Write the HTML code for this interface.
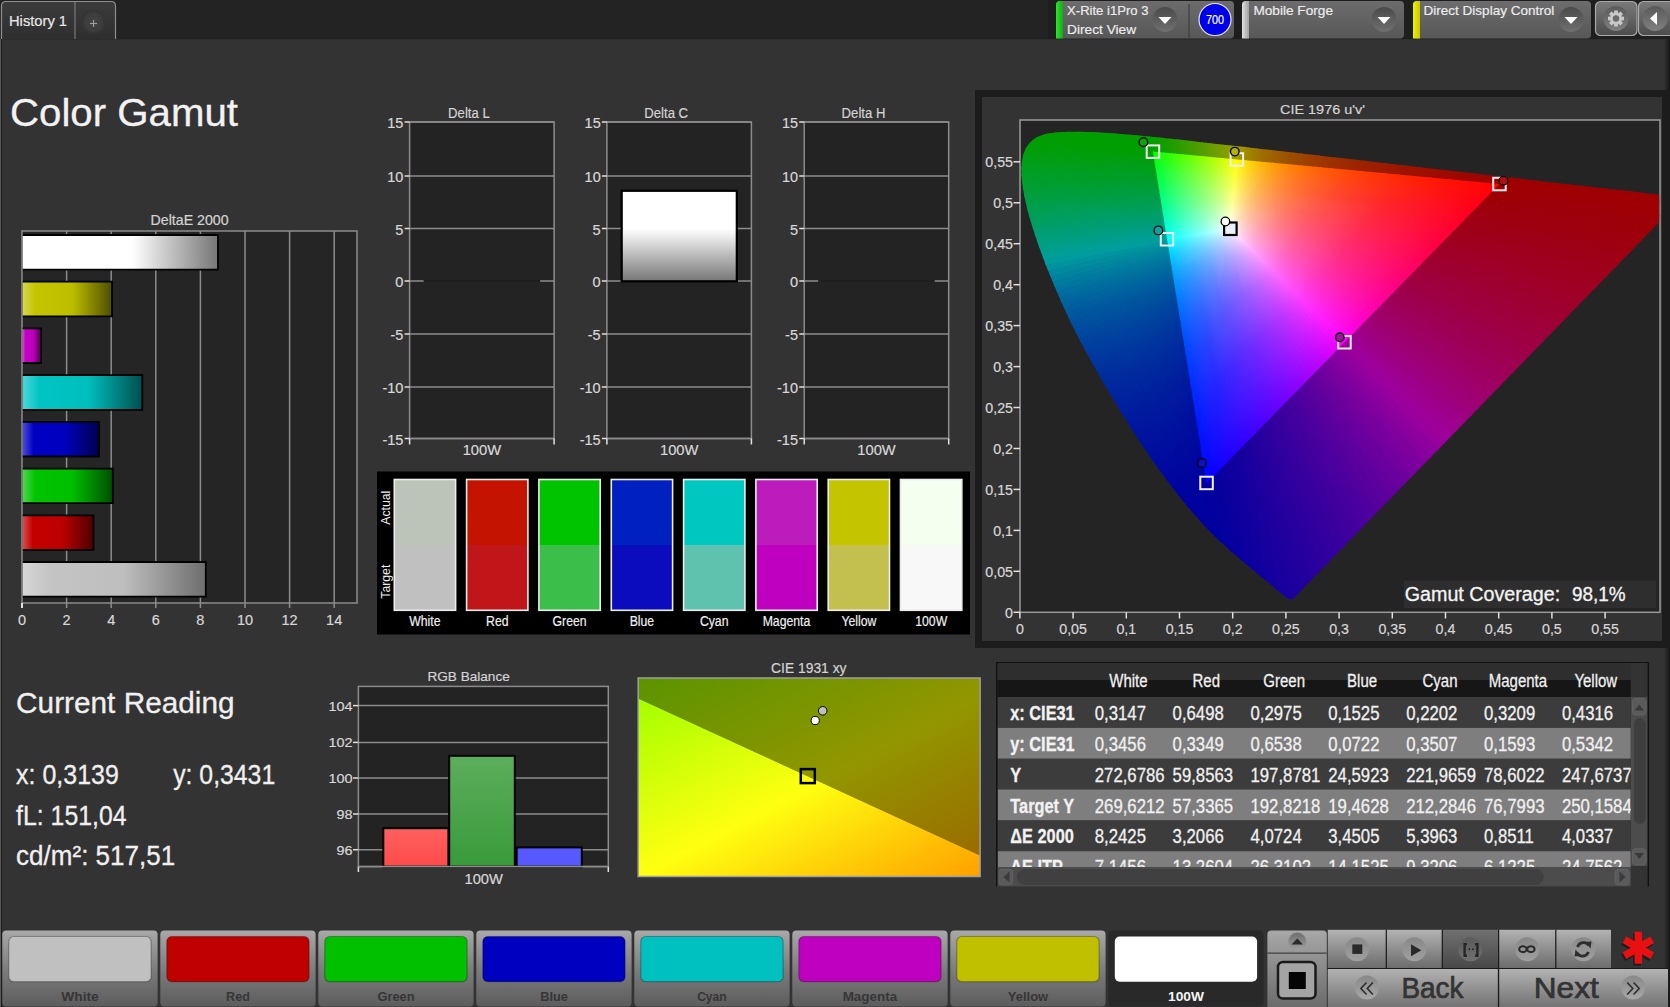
<!DOCTYPE html>
<html><head><meta charset="utf-8"><style>
html,body{margin:0;padding:0;background:#333;overflow:hidden}
svg{display:block;font-family:"Liberation Sans",sans-serif}
</style></head><body>
<svg width="1670" height="1007" viewBox="0 0 1670 1007">
<defs><linearGradient id="g1" x1="0" y1="0" x2="1" y2="0"><stop offset="0" stop-color="#333"/><stop offset="1" stop-color="#151515"/></linearGradient>
<linearGradient id="g2" x1="0" y1="0" x2="0" y2="1"><stop offset="0" stop-color="#3c3c3c"/><stop offset="1" stop-color="#2e2e2e"/></linearGradient>
<radialGradient id="g3" cx="0.5" cy="0.5" r="0.5"><stop offset="0" stop-color="#444444"/><stop offset="0.75" stop-color="#3c3c3c"/><stop offset="1" stop-color="#323232"/></radialGradient>
<linearGradient id="g4" x1="0" y1="0" x2="1" y2="0"><stop offset="0" stop-color="#30e030"/><stop offset="1" stop-color="#10b010"/></linearGradient>
<linearGradient id="g5" x1="0" y1="0" x2="0" y2="1"><stop offset="0" stop-color="#6c6c6c"/><stop offset="1" stop-color="#575757"/></linearGradient>
<linearGradient id="g6" x1="0" y1="0" x2="0" y2="1"><stop offset="0" stop-color="#4a4a4a"/><stop offset="1" stop-color="#707070"/></linearGradient>
<linearGradient id="g7" x1="0" y1="0" x2="1" y2="0"><stop offset="0" stop-color="#e0e0e0"/><stop offset="1" stop-color="#a0a0a0"/></linearGradient>
<linearGradient id="g8" x1="0" y1="0" x2="0" y2="1"><stop offset="0" stop-color="#6c6c6c"/><stop offset="1" stop-color="#575757"/></linearGradient>
<linearGradient id="g9" x1="0" y1="0" x2="0" y2="1"><stop offset="0" stop-color="#4a4a4a"/><stop offset="1" stop-color="#707070"/></linearGradient>
<linearGradient id="g10" x1="0" y1="0" x2="1" y2="0"><stop offset="0" stop-color="#f0f000"/><stop offset="1" stop-color="#c8c800"/></linearGradient>
<linearGradient id="g11" x1="0" y1="0" x2="0" y2="1"><stop offset="0" stop-color="#6c6c6c"/><stop offset="1" stop-color="#575757"/></linearGradient>
<linearGradient id="g12" x1="0" y1="0" x2="0" y2="1"><stop offset="0" stop-color="#4a4a4a"/><stop offset="1" stop-color="#707070"/></linearGradient>
<linearGradient id="g13" x1="0" y1="0" x2="0" y2="1"><stop offset="0" stop-color="#7a7a7a"/><stop offset="1" stop-color="#4c4c4c"/></linearGradient>
<linearGradient id="g14" x1="0" y1="0" x2="0" y2="1"><stop offset="0" stop-color="#5a5a5a"/><stop offset="1" stop-color="#808080"/></linearGradient>
<linearGradient id="g15" x1="0" y1="0" x2="0" y2="1"><stop offset="0" stop-color="#7a7a7a"/><stop offset="1" stop-color="#4c4c4c"/></linearGradient>
<linearGradient id="g16" x1="0" y1="0" x2="0" y2="1"><stop offset="0" stop-color="#5a5a5a"/><stop offset="1" stop-color="#808080"/></linearGradient>
<linearGradient id="g17" x1="0" y1="0" x2="1" y2="0"><stop offset="0" stop-color="#ffffff"/><stop offset="0.56" stop-color="#ffffff"/><stop offset="1" stop-color="#767676"/></linearGradient>
<linearGradient id="g18" x1="0" y1="0" x2="1" y2="0"><stop offset="0" stop-color="#d6d64c"/><stop offset="0.14" stop-color="#c4c400"/><stop offset="0.55" stop-color="#bebe00"/><stop offset="1" stop-color="#4e4e00"/></linearGradient>
<linearGradient id="g19" x1="0" y1="0" x2="1" y2="0"><stop offset="0" stop-color="#d64cd6"/><stop offset="0.14" stop-color="#c400c4"/><stop offset="0.55" stop-color="#be00be"/><stop offset="1" stop-color="#4e004e"/></linearGradient>
<linearGradient id="g20" x1="0" y1="0" x2="1" y2="0"><stop offset="0" stop-color="#4cd6d6"/><stop offset="0.14" stop-color="#00c4c4"/><stop offset="0.55" stop-color="#00bebe"/><stop offset="1" stop-color="#004e4e"/></linearGradient>
<linearGradient id="g21" x1="0" y1="0" x2="1" y2="0"><stop offset="0" stop-color="#4c4cd6"/><stop offset="0.14" stop-color="#0000c4"/><stop offset="0.55" stop-color="#0000be"/><stop offset="1" stop-color="#00004e"/></linearGradient>
<linearGradient id="g22" x1="0" y1="0" x2="1" y2="0"><stop offset="0" stop-color="#4cd64c"/><stop offset="0.14" stop-color="#00c400"/><stop offset="0.55" stop-color="#00be00"/><stop offset="1" stop-color="#004e00"/></linearGradient>
<linearGradient id="g23" x1="0" y1="0" x2="1" y2="0"><stop offset="0" stop-color="#d64c4c"/><stop offset="0.14" stop-color="#c40000"/><stop offset="0.55" stop-color="#be0000"/><stop offset="1" stop-color="#4e0000"/></linearGradient>
<linearGradient id="g24" x1="0" y1="0" x2="1" y2="0"><stop offset="0" stop-color="#d6d6d6"/><stop offset="0.15" stop-color="#c4c4c4"/><stop offset="0.55" stop-color="#bebebe"/><stop offset="1" stop-color="#6e6e6e"/></linearGradient>
<linearGradient id="g25" x1="0" y1="0" x2="0" y2="1"><stop offset="0" stop-color="#ffffff"/><stop offset="0.42" stop-color="#ffffff"/><stop offset="1" stop-color="#767676"/></linearGradient>
<clipPath id="cLoc"><path d="M1293.1,598.7 L1293.0,598.8 L1292.8,598.9 L1292.6,599.0 L1292.4,599.1 L1292.2,599.2 L1292.0,599.2 L1291.8,599.3 L1291.6,599.3 L1291.4,599.3 L1291.2,599.3 L1291.0,599.3 L1290.7,599.3 L1290.4,599.2 L1290.1,599.2 L1289.8,599.2 L1289.4,599.1 L1288.9,598.8 L1288.2,598.5 L1287.5,598.0 L1286.6,597.4 L1285.6,596.7 L1284.5,595.9 L1283.2,594.9 L1281.8,593.8 L1280.2,592.5 L1278.4,591.0 L1276.5,589.4 L1274.4,587.7 L1272.1,585.7 L1269.6,583.6 L1266.9,581.4 L1264.0,579.0 L1260.8,576.5 L1257.4,573.7 L1253.8,570.7 L1249.8,567.3 L1245.2,563.4 L1240.1,559.0 L1234.7,554.4 L1229.3,549.7 L1224.2,545.1 L1219.6,541.0 L1215.8,537.4 L1212.5,534.2 L1209.4,531.1 L1206.4,528.0 L1203.3,524.6 L1199.7,520.6 L1195.7,516.1 L1191.5,511.3 L1187.1,506.1 L1182.6,500.6 L1178.0,494.8 L1173.2,488.6 L1168.3,482.2 L1163.2,475.3 L1158.0,468.2 L1152.7,460.7 L1147.4,453.0 L1141.9,444.9 L1136.4,436.5 L1130.8,427.7 L1125.1,418.6 L1119.3,409.4 L1113.6,399.9 L1108.0,390.5 L1102.4,380.9 L1096.8,371.1 L1091.2,361.2 L1085.7,351.2 L1080.4,341.4 L1075.4,331.6 L1070.6,322.0 L1066.0,312.3 L1061.7,302.7 L1057.5,293.2 L1053.6,284.0 L1049.9,275.1 L1046.4,266.5 L1043.2,258.1 L1040.2,250.0 L1037.4,242.1 L1034.9,234.6 L1032.6,227.5 L1030.5,220.8 L1028.7,214.4 L1027.1,208.4 L1025.8,202.6 L1024.6,197.2 L1023.6,192.1 L1022.8,187.3 L1022.2,182.8 L1021.7,178.6 L1021.5,174.7 L1021.4,171.0 L1021.4,167.5 L1021.6,164.1 L1022.0,161.0 L1022.5,158.1 L1023.1,155.4 L1023.9,152.9 L1024.8,150.5 L1025.9,148.3 L1027.1,146.3 L1028.4,144.4 L1029.8,142.7 L1031.4,141.2 L1033.0,139.8 L1034.7,138.5 L1036.5,137.4 L1038.4,136.5 L1040.4,135.7 L1042.4,134.9 L1044.5,134.3 L1046.6,133.7 L1048.9,133.3 L1051.1,133.0 L1053.5,132.7 L1055.8,132.5 L1058.2,132.2 L1060.6,132.1 L1063.1,131.9 L1065.6,131.9 L1068.1,131.8 L1070.6,131.8 L1073.2,131.7 L1075.7,131.7 L1078.2,131.7 L1080.7,131.8 L1083.2,131.8 L1085.8,131.9 L1088.4,131.9 L1090.9,132.0 L1093.5,132.1 L1096.2,132.2 L1098.8,132.4 L1101.5,132.5 L1104.2,132.7 L1107.0,132.9 L1109.7,133.0 L1112.6,133.2 L1115.4,133.5 L1118.3,133.7 L1121.3,133.9 L1124.3,134.2 L1127.3,134.4 L1130.3,134.7 L1133.4,135.0 L1136.6,135.3 L1139.8,135.6 L1143.1,135.9 L1146.4,136.2 L1149.8,136.6 L1153.2,136.9 L1156.7,137.3 L1160.2,137.6 L1163.8,138.0 L1167.5,138.4 L1171.2,138.8 L1175.0,139.2 L1178.9,139.6 L1182.8,140.1 L1186.8,140.5 L1190.9,141.0 L1195.0,141.4 L1199.2,141.9 L1203.4,142.4 L1207.8,142.9 L1212.2,143.4 L1216.7,143.9 L1221.3,144.4 L1225.9,144.9 L1230.7,145.4 L1235.5,146.0 L1240.3,146.5 L1245.3,147.1 L1250.3,147.7 L1255.4,148.3 L1260.6,148.9 L1265.9,149.5 L1271.2,150.1 L1276.6,150.7 L1282.1,151.3 L1287.7,152.0 L1293.3,152.6 L1299.0,153.3 L1304.8,154.0 L1310.7,154.6 L1316.6,155.3 L1322.6,156.0 L1328.7,156.7 L1334.8,157.4 L1341.0,158.1 L1347.2,158.8 L1353.5,159.6 L1359.9,160.3 L1366.3,161.0 L1372.6,161.8 L1379.1,162.5 L1385.6,163.2 L1392.1,164.0 L1398.6,164.8 L1405.1,165.5 L1411.5,166.3 L1417.5,166.9 L1423.0,167.6 L1428.4,168.2 L1434.3,168.9 L1441.1,169.7 L1449.2,170.6 L1459.2,171.7 L1470.7,173.0 L1483.1,174.5 L1495.8,175.9 L1508.0,177.3 L1519.1,178.6 L1529.2,179.8 L1539.0,180.9 L1548.2,182.0 L1557.1,183.0 L1565.5,183.9 L1573.5,184.9 L1580.9,185.7 L1587.9,186.5 L1594.4,187.3 L1600.5,188.0 L1606.4,188.6 L1612.0,189.3 L1617.4,189.9 L1622.6,190.5 L1627.4,191.1 L1631.9,191.6 L1636.2,192.1 L1640.3,192.6 L1644.0,193.0 L1647.4,193.4 L1650.6,193.7 L1653.6,194.1 L1656.3,194.4 L1658.8,194.7 L1661.1,194.9 L1663.1,195.2 L1664.9,195.4 L1666.6,195.6 L1668.2,195.8 L1669.9,195.9 L1671.6,196.1 L1673.4,196.4 L1675.1,196.6 L1676.8,196.7 L1678.2,196.9 L1679.5,197.1 L1680.5,197.2 L1681.3,197.3 L1681.9,197.3 L1682.4,197.4 L1682.9,197.4 L1683.2,197.5 Z"/></clipPath><clipPath id="cTri"><path d="M1499.4,184.1 L1152.9,151.6 L1206.6,483.0 Z"/></clipPath><clipPath id="cPlot"><rect x="1020.6" y="120.8" width="638.6" height="490.8"/></clipPath><linearGradient id="i0" gradientUnits="userSpaceOnUse" x1="1230.4" y1="228.7" x2="1452.2" y2="232.2"><stop offset="0" stop-color="#ffffff"/><stop offset="0.051" stop-color="#ffd2da"/><stop offset="0.128" stop-color="#ffa2b2"/><stop offset="0.231" stop-color="#ff778f"/><stop offset="0.333" stop-color="#ff5976"/><stop offset="0.59" stop-color="#ff2a51"/><stop offset="1" stop-color="#ff0033"/></linearGradient><linearGradient id="o0" gradientUnits="userSpaceOnUse" x1="1452.2" y1="232.2" x2="1646.4" y2="235.3"><stop offset="0" stop-color="#9e001b"/><stop offset="1" stop-color="#9e000b"/></linearGradient><linearGradient id="i1" gradientUnits="userSpaceOnUse" x1="1230.4" y1="228.7" x2="1445.7" y2="238.9"><stop offset="0" stop-color="#ffffff"/><stop offset="0.051" stop-color="#ffd3dc"/><stop offset="0.128" stop-color="#ffa4b6"/><stop offset="0.231" stop-color="#ff7894"/><stop offset="0.333" stop-color="#ff5a7d"/><stop offset="0.59" stop-color="#ff2b58"/><stop offset="1" stop-color="#ff003b"/></linearGradient><linearGradient id="o1" gradientUnits="userSpaceOnUse" x1="1445.7" y1="238.9" x2="1634.3" y2="247.8"><stop offset="0" stop-color="#9e001f"/><stop offset="1" stop-color="#9e0010"/></linearGradient><linearGradient id="i2" gradientUnits="userSpaceOnUse" x1="1230.4" y1="228.7" x2="1439.5" y2="245.2"><stop offset="0" stop-color="#ffffff"/><stop offset="0.051" stop-color="#ffd4de"/><stop offset="0.128" stop-color="#ffa5ba"/><stop offset="0.231" stop-color="#ff7a99"/><stop offset="0.333" stop-color="#ff5c83"/><stop offset="0.59" stop-color="#ff2c5f"/><stop offset="1" stop-color="#ff0043"/></linearGradient><linearGradient id="o2" gradientUnits="userSpaceOnUse" x1="1439.5" y1="245.2" x2="1622.8" y2="259.6"><stop offset="0" stop-color="#9e0024"/><stop offset="1" stop-color="#9e0015"/></linearGradient><linearGradient id="i3" gradientUnits="userSpaceOnUse" x1="1230.4" y1="228.7" x2="1433.7" y2="251.2"><stop offset="0" stop-color="#ffffff"/><stop offset="0.051" stop-color="#ffd5e0"/><stop offset="0.128" stop-color="#ffa7be"/><stop offset="0.231" stop-color="#ff7c9e"/><stop offset="0.333" stop-color="#ff5d88"/><stop offset="0.59" stop-color="#ff2c66"/><stop offset="1" stop-color="#ff004a"/></linearGradient><linearGradient id="o3" gradientUnits="userSpaceOnUse" x1="1433.7" y1="251.2" x2="1611.9" y2="270.9"><stop offset="0" stop-color="#9e0029"/><stop offset="1" stop-color="#9e001a"/></linearGradient><linearGradient id="i4" gradientUnits="userSpaceOnUse" x1="1230.4" y1="228.7" x2="1428.1" y2="256.9"><stop offset="0" stop-color="#ffffff"/><stop offset="0.051" stop-color="#ffd6e2"/><stop offset="0.128" stop-color="#ffa8c1"/><stop offset="0.231" stop-color="#ff7da3"/><stop offset="0.333" stop-color="#ff5e8e"/><stop offset="0.59" stop-color="#ff2d6d"/><stop offset="1" stop-color="#ff0052"/></linearGradient><linearGradient id="o4" gradientUnits="userSpaceOnUse" x1="1428.1" y1="256.9" x2="1601.5" y2="281.6"><stop offset="0" stop-color="#9e002d"/><stop offset="1" stop-color="#9e001e"/></linearGradient><linearGradient id="i5" gradientUnits="userSpaceOnUse" x1="1230.4" y1="228.7" x2="1422.8" y2="262.3"><stop offset="0" stop-color="#ffffff"/><stop offset="0.051" stop-color="#ffd7e3"/><stop offset="0.128" stop-color="#ffa9c5"/><stop offset="0.231" stop-color="#ff7fa8"/><stop offset="0.333" stop-color="#ff6094"/><stop offset="0.59" stop-color="#ff2e74"/><stop offset="1" stop-color="#ff0059"/></linearGradient><linearGradient id="o5" gradientUnits="userSpaceOnUse" x1="1422.8" y1="262.3" x2="1591.5" y2="291.8"><stop offset="0" stop-color="#9e0032"/><stop offset="1" stop-color="#9e0023"/></linearGradient><linearGradient id="i6" gradientUnits="userSpaceOnUse" x1="1230.4" y1="228.7" x2="1417.7" y2="267.5"><stop offset="0" stop-color="#ffffff"/><stop offset="0.051" stop-color="#ffd7e5"/><stop offset="0.128" stop-color="#ffabc8"/><stop offset="0.231" stop-color="#ff80ad"/><stop offset="0.333" stop-color="#ff6199"/><stop offset="0.615" stop-color="#ff2b78"/><stop offset="1" stop-color="#ff0061"/></linearGradient><linearGradient id="o6" gradientUnits="userSpaceOnUse" x1="1417.7" y1="267.5" x2="1582.0" y2="301.6"><stop offset="0" stop-color="#9e0036"/><stop offset="1" stop-color="#9e0028"/></linearGradient><linearGradient id="i7" gradientUnits="userSpaceOnUse" x1="1230.4" y1="228.7" x2="1412.8" y2="272.5"><stop offset="0" stop-color="#ffffff"/><stop offset="0.077" stop-color="#ffc8dd"/><stop offset="0.154" stop-color="#ffa0c4"/><stop offset="0.333" stop-color="#ff639f"/><stop offset="0.615" stop-color="#ff2c7f"/><stop offset="1" stop-color="#ff0068"/></linearGradient><linearGradient id="o7" gradientUnits="userSpaceOnUse" x1="1412.8" y1="272.5" x2="1572.9" y2="311.0"><stop offset="0" stop-color="#9e003b"/><stop offset="1" stop-color="#9e002d"/></linearGradient><linearGradient id="i8" gradientUnits="userSpaceOnUse" x1="1230.4" y1="228.7" x2="1408.0" y2="277.3"><stop offset="0" stop-color="#ffffff"/><stop offset="0.077" stop-color="#ffc9df"/><stop offset="0.154" stop-color="#ffa1c8"/><stop offset="0.333" stop-color="#ff64a4"/><stop offset="0.615" stop-color="#ff2d86"/><stop offset="1" stop-color="#ff0070"/></linearGradient><linearGradient id="o8" gradientUnits="userSpaceOnUse" x1="1408.0" y1="277.3" x2="1564.1" y2="320.0"><stop offset="0" stop-color="#9e0040"/><stop offset="1" stop-color="#9e0032"/></linearGradient><linearGradient id="i9" gradientUnits="userSpaceOnUse" x1="1230.4" y1="228.7" x2="1403.5" y2="282.0"><stop offset="0" stop-color="#ffffff"/><stop offset="0.077" stop-color="#ffcae1"/><stop offset="0.154" stop-color="#ffa3cb"/><stop offset="0.359" stop-color="#ff5fa6"/><stop offset="0.615" stop-color="#ff2e8c"/><stop offset="1" stop-color="#ff0077"/></linearGradient><linearGradient id="o9" gradientUnits="userSpaceOnUse" x1="1403.5" y1="282.0" x2="1555.6" y2="328.8"><stop offset="0" stop-color="#9e0044"/><stop offset="1" stop-color="#9e0037"/></linearGradient><linearGradient id="i10" gradientUnits="userSpaceOnUse" x1="1230.4" y1="228.7" x2="1399.1" y2="286.5"><stop offset="0" stop-color="#ffffff"/><stop offset="0.077" stop-color="#ffcbe3"/><stop offset="0.154" stop-color="#ffa4cf"/><stop offset="0.359" stop-color="#ff60ac"/><stop offset="0.615" stop-color="#ff2e93"/><stop offset="1" stop-color="#ff007f"/></linearGradient><linearGradient id="o10" gradientUnits="userSpaceOnUse" x1="1399.1" y1="286.5" x2="1547.3" y2="337.3"><stop offset="0" stop-color="#9e0049"/><stop offset="1" stop-color="#9e003c"/></linearGradient><linearGradient id="i11" gradientUnits="userSpaceOnUse" x1="1230.4" y1="228.7" x2="1394.8" y2="290.9"><stop offset="0" stop-color="#ffffff"/><stop offset="0.077" stop-color="#ffcce5"/><stop offset="0.154" stop-color="#ffa5d2"/><stop offset="0.359" stop-color="#ff61b1"/><stop offset="0.615" stop-color="#ff2f9a"/><stop offset="1" stop-color="#ff0087"/></linearGradient><linearGradient id="o11" gradientUnits="userSpaceOnUse" x1="1394.8" y1="290.9" x2="1539.3" y2="345.5"><stop offset="0" stop-color="#9e004e"/><stop offset="1" stop-color="#9e0041"/></linearGradient><linearGradient id="i12" gradientUnits="userSpaceOnUse" x1="1230.4" y1="228.7" x2="1390.6" y2="295.1"><stop offset="0" stop-color="#ffffff"/><stop offset="0.077" stop-color="#ffcde7"/><stop offset="0.154" stop-color="#ffa6d5"/><stop offset="0.359" stop-color="#ff63b7"/><stop offset="0.615" stop-color="#ff30a1"/><stop offset="1" stop-color="#ff008e"/></linearGradient><linearGradient id="o12" gradientUnits="userSpaceOnUse" x1="1390.6" y1="295.1" x2="1531.5" y2="353.5"><stop offset="0" stop-color="#9e0053"/><stop offset="1" stop-color="#9e0047"/></linearGradient><linearGradient id="i13" gradientUnits="userSpaceOnUse" x1="1230.4" y1="228.7" x2="1386.6" y2="299.3"><stop offset="0" stop-color="#ffffff"/><stop offset="0.077" stop-color="#ffcde9"/><stop offset="0.154" stop-color="#ffa8d9"/><stop offset="0.359" stop-color="#ff64bc"/><stop offset="0.615" stop-color="#ff31a7"/><stop offset="1" stop-color="#ff0096"/></linearGradient><linearGradient id="o13" gradientUnits="userSpaceOnUse" x1="1386.6" y1="299.3" x2="1523.9" y2="361.3"><stop offset="0" stop-color="#9e0058"/><stop offset="1" stop-color="#9e004c"/></linearGradient><linearGradient id="i14" gradientUnits="userSpaceOnUse" x1="1230.4" y1="228.7" x2="1382.6" y2="303.3"><stop offset="0" stop-color="#ffffff"/><stop offset="0.077" stop-color="#ffceeb"/><stop offset="0.154" stop-color="#ffa9dc"/><stop offset="0.359" stop-color="#ff65c2"/><stop offset="0.615" stop-color="#ff32ae"/><stop offset="1" stop-color="#ff009e"/></linearGradient><linearGradient id="o14" gradientUnits="userSpaceOnUse" x1="1382.6" y1="303.3" x2="1516.5" y2="368.9"><stop offset="0" stop-color="#9e005d"/><stop offset="1" stop-color="#9e0052"/></linearGradient><linearGradient id="i15" gradientUnits="userSpaceOnUse" x1="1230.4" y1="228.7" x2="1378.7" y2="307.3"><stop offset="0" stop-color="#ffffff"/><stop offset="0.077" stop-color="#ffcfed"/><stop offset="0.154" stop-color="#ffaae0"/><stop offset="0.359" stop-color="#ff67c7"/><stop offset="0.615" stop-color="#ff33b5"/><stop offset="1" stop-color="#ff00a6"/></linearGradient><linearGradient id="o15" gradientUnits="userSpaceOnUse" x1="1378.7" y1="307.3" x2="1509.3" y2="376.4"><stop offset="0" stop-color="#9e0063"/><stop offset="1" stop-color="#9e0058"/></linearGradient><linearGradient id="i16" gradientUnits="userSpaceOnUse" x1="1230.4" y1="228.7" x2="1374.9" y2="311.2"><stop offset="0" stop-color="#ffffff"/><stop offset="0.077" stop-color="#ffd0ef"/><stop offset="0.154" stop-color="#ffabe3"/><stop offset="0.359" stop-color="#ff68cd"/><stop offset="0.615" stop-color="#ff33bc"/><stop offset="1" stop-color="#ff00ae"/></linearGradient><linearGradient id="o16" gradientUnits="userSpaceOnUse" x1="1374.9" y1="311.2" x2="1502.1" y2="383.7"><stop offset="0" stop-color="#9e0068"/><stop offset="1" stop-color="#9e005e"/></linearGradient><linearGradient id="i17" gradientUnits="userSpaceOnUse" x1="1230.4" y1="228.7" x2="1371.2" y2="315.0"><stop offset="0" stop-color="#ffffff"/><stop offset="0.154" stop-color="#ffade6"/><stop offset="0.359" stop-color="#ff69d2"/><stop offset="0.615" stop-color="#ff34c4"/><stop offset="1" stop-color="#ff00b7"/></linearGradient><linearGradient id="o17" gradientUnits="userSpaceOnUse" x1="1371.2" y1="315.0" x2="1495.1" y2="391.0"><stop offset="0" stop-color="#9e006e"/><stop offset="1" stop-color="#9e0064"/></linearGradient><linearGradient id="i18" gradientUnits="userSpaceOnUse" x1="1230.4" y1="228.7" x2="1367.5" y2="318.8"><stop offset="0" stop-color="#ffffff"/><stop offset="0.154" stop-color="#ffaee9"/><stop offset="0.359" stop-color="#ff6bd8"/><stop offset="0.615" stop-color="#ff35cb"/><stop offset="1" stop-color="#ff00c0"/></linearGradient><linearGradient id="o18" gradientUnits="userSpaceOnUse" x1="1367.5" y1="318.8" x2="1488.2" y2="398.1"><stop offset="0" stop-color="#9e0073"/><stop offset="1" stop-color="#9e006b"/></linearGradient><linearGradient id="i19" gradientUnits="userSpaceOnUse" x1="1230.4" y1="228.7" x2="1363.8" y2="322.5"><stop offset="0" stop-color="#ffffff"/><stop offset="0.154" stop-color="#ffafed"/><stop offset="0.359" stop-color="#ff6cde"/><stop offset="0.615" stop-color="#ff36d3"/><stop offset="1" stop-color="#ff00c9"/></linearGradient><linearGradient id="o19" gradientUnits="userSpaceOnUse" x1="1363.8" y1="322.5" x2="1481.3" y2="405.1"><stop offset="0" stop-color="#9e0079"/><stop offset="1" stop-color="#9e0072"/></linearGradient><linearGradient id="i20" gradientUnits="userSpaceOnUse" x1="1230.4" y1="228.7" x2="1360.2" y2="326.2"><stop offset="0" stop-color="#ffffff"/><stop offset="0.077" stop-color="#ffd3f7"/><stop offset="0.179" stop-color="#ffa6ee"/><stop offset="0.385" stop-color="#ff67e3"/><stop offset="0.641" stop-color="#ff33d9"/><stop offset="1" stop-color="#ff00d2"/></linearGradient><linearGradient id="o20" gradientUnits="userSpaceOnUse" x1="1360.2" y1="326.2" x2="1474.6" y2="412.1"><stop offset="0" stop-color="#9e007f"/><stop offset="1" stop-color="#9e0079"/></linearGradient><linearGradient id="i21" gradientUnits="userSpaceOnUse" x1="1230.4" y1="228.7" x2="1356.6" y2="329.9"><stop offset="0" stop-color="#ffffff"/><stop offset="0.077" stop-color="#ffd4f9"/><stop offset="0.179" stop-color="#ffa8f2"/><stop offset="0.385" stop-color="#ff68e9"/><stop offset="0.641" stop-color="#ff34e2"/><stop offset="1" stop-color="#ff00db"/></linearGradient><linearGradient id="o21" gradientUnits="userSpaceOnUse" x1="1356.6" y1="329.9" x2="1467.9" y2="419.0"><stop offset="0" stop-color="#9e0086"/><stop offset="1" stop-color="#9e0081"/></linearGradient><linearGradient id="i22" gradientUnits="userSpaceOnUse" x1="1230.4" y1="228.7" x2="1353.0" y2="333.5"><stop offset="0" stop-color="#ffffff"/><stop offset="0.179" stop-color="#ffa9f6"/><stop offset="0.385" stop-color="#ff6aef"/><stop offset="0.641" stop-color="#ff35ea"/><stop offset="1" stop-color="#ff00e5"/></linearGradient><linearGradient id="o22" gradientUnits="userSpaceOnUse" x1="1353.0" y1="333.5" x2="1461.2" y2="425.9"><stop offset="0" stop-color="#9e008d"/><stop offset="1" stop-color="#9e0089"/></linearGradient><linearGradient id="i23" gradientUnits="userSpaceOnUse" x1="1230.4" y1="228.7" x2="1349.5" y2="337.1"><stop offset="0" stop-color="#ffffff"/><stop offset="0.179" stop-color="#ffaaf9"/><stop offset="0.385" stop-color="#ff6bf6"/><stop offset="0.641" stop-color="#ff36f2"/><stop offset="1" stop-color="#ff00f0"/></linearGradient><linearGradient id="o23" gradientUnits="userSpaceOnUse" x1="1349.5" y1="337.1" x2="1454.5" y2="432.7"><stop offset="0" stop-color="#9e0094"/><stop offset="1" stop-color="#9e0091"/></linearGradient><linearGradient id="i24" gradientUnits="userSpaceOnUse" x1="1230.4" y1="228.7" x2="1345.9" y2="340.7"><stop offset="0" stop-color="#ffffff"/><stop offset="0.179" stop-color="#ffacfd"/><stop offset="0.385" stop-color="#ff6dfc"/><stop offset="0.641" stop-color="#ff37fb"/><stop offset="1" stop-color="#ff00fa"/></linearGradient><linearGradient id="o24" gradientUnits="userSpaceOnUse" x1="1345.9" y1="340.7" x2="1447.9" y2="439.5"><stop offset="0" stop-color="#9e009b"/><stop offset="1" stop-color="#9e009a"/></linearGradient><linearGradient id="i25" gradientUnits="userSpaceOnUse" x1="1230.4" y1="228.7" x2="1342.4" y2="344.3"><stop offset="0" stop-color="#ffffff"/><stop offset="0.179" stop-color="#fdacff"/><stop offset="0.385" stop-color="#fb6cff"/><stop offset="0.641" stop-color="#fa37ff"/><stop offset="1" stop-color="#f900ff"/></linearGradient><linearGradient id="o25" gradientUnits="userSpaceOnUse" x1="1342.4" y1="344.3" x2="1441.3" y2="446.3"><stop offset="0" stop-color="#9a009e"/><stop offset="1" stop-color="#99009e"/></linearGradient><linearGradient id="i26" gradientUnits="userSpaceOnUse" x1="1230.4" y1="228.7" x2="1338.9" y2="348.0"><stop offset="0" stop-color="#ffffff"/><stop offset="0.179" stop-color="#f9aaff"/><stop offset="0.385" stop-color="#f46bff"/><stop offset="0.641" stop-color="#f136ff"/><stop offset="1" stop-color="#ee00ff"/></linearGradient><linearGradient id="o26" gradientUnits="userSpaceOnUse" x1="1338.9" y1="348.0" x2="1434.6" y2="453.2"><stop offset="0" stop-color="#92009e"/><stop offset="1" stop-color="#90009e"/></linearGradient><linearGradient id="i27" gradientUnits="userSpaceOnUse" x1="1230.4" y1="228.7" x2="1335.3" y2="351.6"><stop offset="0" stop-color="#ffffff"/><stop offset="0.179" stop-color="#f5a9ff"/><stop offset="0.385" stop-color="#ee6aff"/><stop offset="0.641" stop-color="#e835ff"/><stop offset="1" stop-color="#e300ff"/></linearGradient><linearGradient id="o27" gradientUnits="userSpaceOnUse" x1="1335.3" y1="351.6" x2="1427.9" y2="460.0"><stop offset="0" stop-color="#8b009e"/><stop offset="1" stop-color="#87009e"/></linearGradient><linearGradient id="i28" gradientUnits="userSpaceOnUse" x1="1230.4" y1="228.7" x2="1331.7" y2="355.2"><stop offset="0" stop-color="#ffffff"/><stop offset="0.077" stop-color="#f8d4ff"/><stop offset="0.179" stop-color="#f1a8ff"/><stop offset="0.385" stop-color="#e868ff"/><stop offset="0.641" stop-color="#e034ff"/><stop offset="1" stop-color="#d900ff"/></linearGradient><linearGradient id="o28" gradientUnits="userSpaceOnUse" x1="1331.7" y1="355.2" x2="1421.2" y2="467.0"><stop offset="0" stop-color="#85009e"/><stop offset="1" stop-color="#7f009e"/></linearGradient><linearGradient id="i29" gradientUnits="userSpaceOnUse" x1="1230.4" y1="228.7" x2="1328.1" y2="358.9"><stop offset="0" stop-color="#ffffff"/><stop offset="0.077" stop-color="#f6d4ff"/><stop offset="0.179" stop-color="#eda7ff"/><stop offset="0.385" stop-color="#e167ff"/><stop offset="0.641" stop-color="#d833ff"/><stop offset="1" stop-color="#d000ff"/></linearGradient><linearGradient id="o29" gradientUnits="userSpaceOnUse" x1="1328.1" y1="358.9" x2="1414.5" y2="473.9"><stop offset="0" stop-color="#7e009e"/><stop offset="1" stop-color="#77009e"/></linearGradient><linearGradient id="i30" gradientUnits="userSpaceOnUse" x1="1230.4" y1="228.7" x2="1324.5" y2="362.6"><stop offset="0" stop-color="#ffffff"/><stop offset="0.154" stop-color="#ecb0ff"/><stop offset="0.359" stop-color="#dc6dff"/><stop offset="0.615" stop-color="#d137ff"/><stop offset="1" stop-color="#c600ff"/></linearGradient><linearGradient id="o30" gradientUnits="userSpaceOnUse" x1="1324.5" y1="362.6" x2="1407.6" y2="480.9"><stop offset="0" stop-color="#78009e"/><stop offset="1" stop-color="#70009e"/></linearGradient><linearGradient id="i31" gradientUnits="userSpaceOnUse" x1="1230.4" y1="228.7" x2="1320.8" y2="366.4"><stop offset="0" stop-color="#ffffff"/><stop offset="0.154" stop-color="#e9afff"/><stop offset="0.359" stop-color="#d76bff"/><stop offset="0.615" stop-color="#c936ff"/><stop offset="1" stop-color="#bd00ff"/></linearGradient><linearGradient id="o31" gradientUnits="userSpaceOnUse" x1="1320.8" y1="366.4" x2="1400.7" y2="488.0"><stop offset="0" stop-color="#72009e"/><stop offset="1" stop-color="#69009e"/></linearGradient><linearGradient id="i32" gradientUnits="userSpaceOnUse" x1="1230.4" y1="228.7" x2="1317.1" y2="370.2"><stop offset="0" stop-color="#ffffff"/><stop offset="0.154" stop-color="#e5adff"/><stop offset="0.359" stop-color="#d16aff"/><stop offset="0.615" stop-color="#c135ff"/><stop offset="1" stop-color="#b400ff"/></linearGradient><linearGradient id="o32" gradientUnits="userSpaceOnUse" x1="1317.1" y1="370.2" x2="1393.7" y2="495.3"><stop offset="0" stop-color="#6c009e"/><stop offset="1" stop-color="#62009e"/></linearGradient><linearGradient id="i33" gradientUnits="userSpaceOnUse" x1="1230.4" y1="228.7" x2="1313.3" y2="374.1"><stop offset="0" stop-color="#ffffff"/><stop offset="0.154" stop-color="#e2acff"/><stop offset="0.359" stop-color="#cb69ff"/><stop offset="0.615" stop-color="#ba34ff"/><stop offset="1" stop-color="#ab00ff"/></linearGradient><linearGradient id="o33" gradientUnits="userSpaceOnUse" x1="1313.3" y1="374.1" x2="1386.6" y2="502.6"><stop offset="0" stop-color="#66009e"/><stop offset="1" stop-color="#5b009e"/></linearGradient><linearGradient id="i34" gradientUnits="userSpaceOnUse" x1="1230.4" y1="228.7" x2="1309.4" y2="378.0"><stop offset="0" stop-color="#ffffff"/><stop offset="0.077" stop-color="#edd0ff"/><stop offset="0.154" stop-color="#dfabff"/><stop offset="0.359" stop-color="#c568ff"/><stop offset="0.615" stop-color="#b233ff"/><stop offset="1" stop-color="#a200ff"/></linearGradient><linearGradient id="o34" gradientUnits="userSpaceOnUse" x1="1309.4" y1="378.0" x2="1379.3" y2="510.0"><stop offset="0" stop-color="#60009e"/><stop offset="1" stop-color="#55009e"/></linearGradient><linearGradient id="i35" gradientUnits="userSpaceOnUse" x1="1230.4" y1="228.7" x2="1305.5" y2="382.0"><stop offset="0" stop-color="#ffffff"/><stop offset="0.077" stop-color="#ebcfff"/><stop offset="0.154" stop-color="#dbaaff"/><stop offset="0.359" stop-color="#bf66ff"/><stop offset="0.615" stop-color="#ab33ff"/><stop offset="1" stop-color="#9a00ff"/></linearGradient><linearGradient id="o35" gradientUnits="userSpaceOnUse" x1="1305.5" y1="382.0" x2="1371.9" y2="517.7"><stop offset="0" stop-color="#5a009e"/><stop offset="1" stop-color="#4f009e"/></linearGradient><linearGradient id="i36" gradientUnits="userSpaceOnUse" x1="1230.4" y1="228.7" x2="1301.5" y2="386.1"><stop offset="0" stop-color="#ffffff"/><stop offset="0.077" stop-color="#e9ceff"/><stop offset="0.154" stop-color="#d8a9ff"/><stop offset="0.359" stop-color="#ba65ff"/><stop offset="0.615" stop-color="#a432ff"/><stop offset="1" stop-color="#9100ff"/></linearGradient><linearGradient id="o36" gradientUnits="userSpaceOnUse" x1="1301.5" y1="386.1" x2="1364.4" y2="525.4"><stop offset="0" stop-color="#55009e"/><stop offset="1" stop-color="#48009e"/></linearGradient><linearGradient id="i37" gradientUnits="userSpaceOnUse" x1="1230.4" y1="228.7" x2="1297.3" y2="390.3"><stop offset="0" stop-color="#ffffff"/><stop offset="0.077" stop-color="#e7cdff"/><stop offset="0.154" stop-color="#d4a8ff"/><stop offset="0.359" stop-color="#b464ff"/><stop offset="0.615" stop-color="#9d31ff"/><stop offset="1" stop-color="#8900ff"/></linearGradient><linearGradient id="o37" gradientUnits="userSpaceOnUse" x1="1297.3" y1="390.3" x2="1356.6" y2="533.4"><stop offset="0" stop-color="#50009e"/><stop offset="1" stop-color="#42009e"/></linearGradient><linearGradient id="i38" gradientUnits="userSpaceOnUse" x1="1230.4" y1="228.7" x2="1293.1" y2="394.7"><stop offset="0" stop-color="#ffffff"/><stop offset="0.077" stop-color="#e4cdff"/><stop offset="0.154" stop-color="#d1a7ff"/><stop offset="0.359" stop-color="#ae63ff"/><stop offset="0.615" stop-color="#9630ff"/><stop offset="1" stop-color="#8100ff"/></linearGradient><linearGradient id="o38" gradientUnits="userSpaceOnUse" x1="1293.1" y1="394.7" x2="1348.6" y2="541.6"><stop offset="0" stop-color="#4a009e"/><stop offset="1" stop-color="#3d009e"/></linearGradient><linearGradient id="i39" gradientUnits="userSpaceOnUse" x1="1230.4" y1="228.7" x2="1288.7" y2="399.1"><stop offset="0" stop-color="#ffffff"/><stop offset="0.077" stop-color="#e2ccff"/><stop offset="0.154" stop-color="#cda5ff"/><stop offset="0.359" stop-color="#a862ff"/><stop offset="0.615" stop-color="#8e2fff"/><stop offset="1" stop-color="#7800ff"/></linearGradient><linearGradient id="o39" gradientUnits="userSpaceOnUse" x1="1288.7" y1="399.1" x2="1340.4" y2="550.1"><stop offset="0" stop-color="#45009e"/><stop offset="1" stop-color="#37009e"/></linearGradient><linearGradient id="i40" gradientUnits="userSpaceOnUse" x1="1230.4" y1="228.7" x2="1284.2" y2="403.7"><stop offset="0" stop-color="#ffffff"/><stop offset="0.077" stop-color="#e0cbff"/><stop offset="0.154" stop-color="#c9a4ff"/><stop offset="0.359" stop-color="#a260ff"/><stop offset="0.615" stop-color="#872fff"/><stop offset="1" stop-color="#7000ff"/></linearGradient><linearGradient id="o40" gradientUnits="userSpaceOnUse" x1="1284.2" y1="403.7" x2="1331.9" y2="558.8"><stop offset="0" stop-color="#40009e"/><stop offset="1" stop-color="#31009e"/></linearGradient><linearGradient id="i41" gradientUnits="userSpaceOnUse" x1="1230.4" y1="228.7" x2="1279.6" y2="408.5"><stop offset="0" stop-color="#ffffff"/><stop offset="0.077" stop-color="#decaff"/><stop offset="0.154" stop-color="#c6a3ff"/><stop offset="0.359" stop-color="#9d5fff"/><stop offset="0.615" stop-color="#802eff"/><stop offset="1" stop-color="#6800ff"/></linearGradient><linearGradient id="o41" gradientUnits="userSpaceOnUse" x1="1279.6" y1="408.5" x2="1323.2" y2="567.8"><stop offset="0" stop-color="#3b009e"/><stop offset="1" stop-color="#2c009e"/></linearGradient><linearGradient id="i42" gradientUnits="userSpaceOnUse" x1="1230.4" y1="228.7" x2="1274.7" y2="413.4"><stop offset="0" stop-color="#ffffff"/><stop offset="0.077" stop-color="#dcc9ff"/><stop offset="0.154" stop-color="#c2a2ff"/><stop offset="0.359" stop-color="#975eff"/><stop offset="0.615" stop-color="#792dff"/><stop offset="1" stop-color="#6000ff"/></linearGradient><linearGradient id="o42" gradientUnits="userSpaceOnUse" x1="1274.7" y1="413.4" x2="1314.0" y2="577.2"><stop offset="0" stop-color="#36009e"/><stop offset="1" stop-color="#26009e"/></linearGradient><linearGradient id="i43" gradientUnits="userSpaceOnUse" x1="1230.4" y1="228.7" x2="1269.7" y2="418.5"><stop offset="0" stop-color="#ffffff"/><stop offset="0.077" stop-color="#d9c8ff"/><stop offset="0.154" stop-color="#bea0ff"/><stop offset="0.333" stop-color="#9563ff"/><stop offset="0.615" stop-color="#712cff"/><stop offset="1" stop-color="#5800ff"/></linearGradient><linearGradient id="o43" gradientUnits="userSpaceOnUse" x1="1269.7" y1="418.5" x2="1304.6" y2="586.9"><stop offset="0" stop-color="#31009e"/><stop offset="1" stop-color="#21009e"/></linearGradient><linearGradient id="i44" gradientUnits="userSpaceOnUse" x1="1230.4" y1="228.7" x2="1264.5" y2="423.9"><stop offset="0" stop-color="#ffffff"/><stop offset="0.051" stop-color="#e3d8ff"/><stop offset="0.128" stop-color="#c3abff"/><stop offset="0.231" stop-color="#a481ff"/><stop offset="0.333" stop-color="#8f62ff"/><stop offset="0.615" stop-color="#6a2cff"/><stop offset="1" stop-color="#4f00ff"/></linearGradient><linearGradient id="o44" gradientUnits="userSpaceOnUse" x1="1264.5" y1="423.9" x2="1294.7" y2="597.1"><stop offset="0" stop-color="#2c009e"/><stop offset="1" stop-color="#1b009e"/></linearGradient><linearGradient id="i45" gradientUnits="userSpaceOnUse" x1="1230.4" y1="228.7" x2="1259.0" y2="429.5"><stop offset="0" stop-color="#ffffff"/><stop offset="0.051" stop-color="#e1d7ff"/><stop offset="0.128" stop-color="#bfaaff"/><stop offset="0.231" stop-color="#9f7fff"/><stop offset="0.333" stop-color="#8960ff"/><stop offset="0.59" stop-color="#652fff"/><stop offset="1" stop-color="#4700ff"/></linearGradient><linearGradient id="o45" gradientUnits="userSpaceOnUse" x1="1259.0" y1="429.5" x2="1282.4" y2="594.3"><stop offset="0" stop-color="#27009e"/><stop offset="1" stop-color="#17009e"/></linearGradient><linearGradient id="i46" gradientUnits="userSpaceOnUse" x1="1230.4" y1="228.7" x2="1253.2" y2="435.4"><stop offset="0" stop-color="#ffffff"/><stop offset="0.051" stop-color="#dfd6ff"/><stop offset="0.128" stop-color="#bba9ff"/><stop offset="0.231" stop-color="#9a7eff"/><stop offset="0.333" stop-color="#835fff"/><stop offset="0.59" stop-color="#5d2eff"/><stop offset="1" stop-color="#3f00ff"/></linearGradient><linearGradient id="o46" gradientUnits="userSpaceOnUse" x1="1253.2" y1="435.4" x2="1269.6" y2="583.6"><stop offset="0" stop-color="#22009e"/><stop offset="1" stop-color="#13009e"/></linearGradient><linearGradient id="i47" gradientUnits="userSpaceOnUse" x1="1230.4" y1="228.7" x2="1247.1" y2="441.6"><stop offset="0" stop-color="#ffffff"/><stop offset="0.051" stop-color="#ddd5ff"/><stop offset="0.128" stop-color="#b7a7ff"/><stop offset="0.231" stop-color="#957cff"/><stop offset="0.333" stop-color="#7c5eff"/><stop offset="0.59" stop-color="#562dff"/><stop offset="1" stop-color="#3600ff"/></linearGradient><linearGradient id="o47" gradientUnits="userSpaceOnUse" x1="1247.1" y1="441.6" x2="1257.5" y2="573.8"><stop offset="0" stop-color="#1c009e"/><stop offset="1" stop-color="#0f009e"/></linearGradient><linearGradient id="i48" gradientUnits="userSpaceOnUse" x1="1230.4" y1="228.7" x2="1240.7" y2="448.1"><stop offset="0" stop-color="#ffffff"/><stop offset="0.051" stop-color="#dbd4ff"/><stop offset="0.128" stop-color="#b3a6ff"/><stop offset="0.231" stop-color="#8f7bff"/><stop offset="0.333" stop-color="#765cff"/><stop offset="0.59" stop-color="#4e2cff"/><stop offset="1" stop-color="#2d00ff"/></linearGradient><linearGradient id="o48" gradientUnits="userSpaceOnUse" x1="1240.7" y1="448.1" x2="1246.2" y2="564.2"><stop offset="0" stop-color="#17009e"/><stop offset="1" stop-color="#0b009e"/></linearGradient><linearGradient id="i49" gradientUnits="userSpaceOnUse" x1="1230.4" y1="228.7" x2="1233.9" y2="455.0"><stop offset="0" stop-color="#ffffff"/><stop offset="0.051" stop-color="#d9d3ff"/><stop offset="0.128" stop-color="#afa4ff"/><stop offset="0.231" stop-color="#8979ff"/><stop offset="0.333" stop-color="#6f5bff"/><stop offset="0.59" stop-color="#462bff"/><stop offset="1" stop-color="#2400ff"/></linearGradient><linearGradient id="o49" gradientUnits="userSpaceOnUse" x1="1233.9" y1="455.0" x2="1235.5" y2="555.1"><stop offset="0" stop-color="#12009e"/><stop offset="1" stop-color="#07009e"/></linearGradient><linearGradient id="i50" gradientUnits="userSpaceOnUse" x1="1230.4" y1="228.7" x2="1226.7" y2="462.4"><stop offset="0" stop-color="#ffffff"/><stop offset="0.051" stop-color="#d6d3ff"/><stop offset="0.128" stop-color="#aba3ff"/><stop offset="0.231" stop-color="#8377ff"/><stop offset="0.333" stop-color="#6859ff"/><stop offset="0.59" stop-color="#3e2aff"/><stop offset="1" stop-color="#1b00ff"/></linearGradient><linearGradient id="o50" gradientUnits="userSpaceOnUse" x1="1226.7" y1="462.4" x2="1225.4" y2="546.2"><stop offset="0" stop-color="#0d009e"/><stop offset="1" stop-color="#04009e"/></linearGradient><linearGradient id="i51" gradientUnits="userSpaceOnUse" x1="1230.4" y1="228.7" x2="1219.0" y2="470.3"><stop offset="0" stop-color="#ffffff"/><stop offset="0.051" stop-color="#d4d1ff"/><stop offset="0.128" stop-color="#a6a1ff"/><stop offset="0.231" stop-color="#7d76ff"/><stop offset="0.333" stop-color="#6158ff"/><stop offset="0.615" stop-color="#3226ff"/><stop offset="1" stop-color="#1100ff"/></linearGradient><linearGradient id="o51" gradientUnits="userSpaceOnUse" x1="1219.0" y1="470.3" x2="1215.8" y2="537.4"><stop offset="0" stop-color="#08009e"/><stop offset="1" stop-color="#00009e"/></linearGradient><linearGradient id="i52" gradientUnits="userSpaceOnUse" x1="1230.4" y1="228.7" x2="1210.7" y2="478.7"><stop offset="0" stop-color="#ffffff"/><stop offset="0.051" stop-color="#d1d0ff"/><stop offset="0.128" stop-color="#a19fff"/><stop offset="0.231" stop-color="#7674ff"/><stop offset="0.333" stop-color="#5956ff"/><stop offset="0.615" stop-color="#2925ff"/><stop offset="1" stop-color="#0600ff"/></linearGradient><linearGradient id="o52" gradientUnits="userSpaceOnUse" x1="1210.7" y1="478.7" x2="1206.8" y2="528.4"><stop offset="0" stop-color="#02009e"/><stop offset="1" stop-color="#00009e"/></linearGradient><linearGradient id="i53" gradientUnits="userSpaceOnUse" x1="1230.4" y1="228.7" x2="1204.0" y2="467.4"><stop offset="0" stop-color="#ffffff"/><stop offset="0.051" stop-color="#d2d2ff"/><stop offset="0.128" stop-color="#a1a3ff"/><stop offset="0.231" stop-color="#7679ff"/><stop offset="0.333" stop-color="#585bff"/><stop offset="0.615" stop-color="#262aff"/><stop offset="1" stop-color="#0007ff"/></linearGradient><linearGradient id="o53" gradientUnits="userSpaceOnUse" x1="1204.0" y1="467.4" x2="1198.3" y2="519.1"><stop offset="0" stop-color="#00039e"/><stop offset="1" stop-color="#00009e"/></linearGradient><linearGradient id="i54" gradientUnits="userSpaceOnUse" x1="1230.4" y1="228.7" x2="1200.0" y2="442.4"><stop offset="0" stop-color="#ffffff"/><stop offset="0.051" stop-color="#d5d7ff"/><stop offset="0.128" stop-color="#a6abff"/><stop offset="0.231" stop-color="#7b82ff"/><stop offset="0.333" stop-color="#5d65ff"/><stop offset="0.615" stop-color="#2935ff"/><stop offset="1" stop-color="#0011ff"/></linearGradient><linearGradient id="o54" gradientUnits="userSpaceOnUse" x1="1200.0" y1="442.4" x2="1190.4" y2="509.9"><stop offset="0" stop-color="#00089e"/><stop offset="1" stop-color="#00009e"/></linearGradient><linearGradient id="i55" gradientUnits="userSpaceOnUse" x1="1230.4" y1="228.7" x2="1196.7" y2="421.9"><stop offset="0" stop-color="#ffffff"/><stop offset="0.051" stop-color="#d7daff"/><stop offset="0.128" stop-color="#aab1ff"/><stop offset="0.231" stop-color="#808aff"/><stop offset="0.333" stop-color="#616eff"/><stop offset="0.59" stop-color="#2f41ff"/><stop offset="1" stop-color="#001aff"/></linearGradient><linearGradient id="o55" gradientUnits="userSpaceOnUse" x1="1196.7" y1="421.9" x2="1182.9" y2="500.9"><stop offset="0" stop-color="#000d9e"/><stop offset="1" stop-color="#00019e"/></linearGradient><linearGradient id="i56" gradientUnits="userSpaceOnUse" x1="1230.4" y1="228.7" x2="1193.9" y2="404.9"><stop offset="0" stop-color="#ffffff"/><stop offset="0.077" stop-color="#c9cfff"/><stop offset="0.154" stop-color="#a2acff"/><stop offset="0.359" stop-color="#5e71ff"/><stop offset="0.615" stop-color="#2d47ff"/><stop offset="1" stop-color="#0023ff"/></linearGradient><linearGradient id="o56" gradientUnits="userSpaceOnUse" x1="1193.9" y1="404.9" x2="1175.9" y2="492.1"><stop offset="0" stop-color="#00119e"/><stop offset="1" stop-color="#00039e"/></linearGradient><linearGradient id="i57" gradientUnits="userSpaceOnUse" x1="1230.4" y1="228.7" x2="1191.6" y2="390.4"><stop offset="0" stop-color="#ffffff"/><stop offset="0.077" stop-color="#ccd3ff"/><stop offset="0.154" stop-color="#a5b2ff"/><stop offset="0.359" stop-color="#6178ff"/><stop offset="0.615" stop-color="#2f4fff"/><stop offset="1" stop-color="#002bff"/></linearGradient><linearGradient id="o57" gradientUnits="userSpaceOnUse" x1="1191.6" y1="390.4" x2="1169.2" y2="483.4"><stop offset="0" stop-color="#00169e"/><stop offset="1" stop-color="#00059e"/></linearGradient><linearGradient id="i58" gradientUnits="userSpaceOnUse" x1="1230.4" y1="228.7" x2="1189.6" y2="378.0"><stop offset="0" stop-color="#ffffff"/><stop offset="0.077" stop-color="#ced6ff"/><stop offset="0.154" stop-color="#a8b7ff"/><stop offset="0.359" stop-color="#657fff"/><stop offset="0.615" stop-color="#3156ff"/><stop offset="1" stop-color="#0032ff"/></linearGradient><linearGradient id="o58" gradientUnits="userSpaceOnUse" x1="1189.6" y1="378.0" x2="1163.0" y2="475.0"><stop offset="0" stop-color="#001a9e"/><stop offset="1" stop-color="#00089e"/></linearGradient><linearGradient id="i59" gradientUnits="userSpaceOnUse" x1="1230.4" y1="228.7" x2="1187.8" y2="367.2"><stop offset="0" stop-color="#ffffff"/><stop offset="0.077" stop-color="#d0d9ff"/><stop offset="0.154" stop-color="#abbcff"/><stop offset="0.359" stop-color="#6786ff"/><stop offset="0.615" stop-color="#335dff"/><stop offset="1" stop-color="#0039ff"/></linearGradient><linearGradient id="o59" gradientUnits="userSpaceOnUse" x1="1187.8" y1="367.2" x2="1157.1" y2="466.9"><stop offset="0" stop-color="#001e9e"/><stop offset="1" stop-color="#000a9e"/></linearGradient><linearGradient id="i60" gradientUnits="userSpaceOnUse" x1="1230.4" y1="228.7" x2="1186.3" y2="357.6"><stop offset="0" stop-color="#ffffff"/><stop offset="0.154" stop-color="#adc0ff"/><stop offset="0.359" stop-color="#6a8cff"/><stop offset="0.615" stop-color="#3564ff"/><stop offset="1" stop-color="#0040ff"/></linearGradient><linearGradient id="o60" gradientUnits="userSpaceOnUse" x1="1186.3" y1="357.6" x2="1151.6" y2="459.0"><stop offset="0" stop-color="#00229e"/><stop offset="1" stop-color="#000d9e"/></linearGradient><linearGradient id="i61" gradientUnits="userSpaceOnUse" x1="1230.4" y1="228.7" x2="1184.9" y2="349.2"><stop offset="0" stop-color="#ffffff"/><stop offset="0.077" stop-color="#d3deff"/><stop offset="0.179" stop-color="#a6bcff"/><stop offset="0.385" stop-color="#668dff"/><stop offset="0.641" stop-color="#3267ff"/><stop offset="1" stop-color="#0047ff"/></linearGradient><linearGradient id="o61" gradientUnits="userSpaceOnUse" x1="1184.9" y1="349.2" x2="1146.3" y2="451.4"><stop offset="0" stop-color="#00269e"/><stop offset="1" stop-color="#000f9e"/></linearGradient><linearGradient id="i62" gradientUnits="userSpaceOnUse" x1="1230.4" y1="228.7" x2="1183.7" y2="341.6"><stop offset="0" stop-color="#ffffff"/><stop offset="0.077" stop-color="#d4e0ff"/><stop offset="0.179" stop-color="#a8c0ff"/><stop offset="0.385" stop-color="#6892ff"/><stop offset="0.641" stop-color="#346eff"/><stop offset="1" stop-color="#004dff"/></linearGradient><linearGradient id="o62" gradientUnits="userSpaceOnUse" x1="1183.7" y1="341.6" x2="1141.3" y2="443.9"><stop offset="0" stop-color="#002a9e"/><stop offset="1" stop-color="#00119e"/></linearGradient><linearGradient id="i63" gradientUnits="userSpaceOnUse" x1="1230.4" y1="228.7" x2="1182.6" y2="334.7"><stop offset="0" stop-color="#ffffff"/><stop offset="0.179" stop-color="#aac3ff"/><stop offset="0.385" stop-color="#6b97ff"/><stop offset="0.641" stop-color="#3573ff"/><stop offset="1" stop-color="#0053ff"/></linearGradient><linearGradient id="o63" gradientUnits="userSpaceOnUse" x1="1182.6" y1="334.7" x2="1136.5" y2="436.7"><stop offset="0" stop-color="#002e9e"/><stop offset="1" stop-color="#00149e"/></linearGradient><linearGradient id="i64" gradientUnits="userSpaceOnUse" x1="1230.4" y1="228.7" x2="1181.5" y2="328.5"><stop offset="0" stop-color="#ffffff"/><stop offset="0.179" stop-color="#acc6ff"/><stop offset="0.385" stop-color="#6d9cff"/><stop offset="0.641" stop-color="#3779ff"/><stop offset="1" stop-color="#0059ff"/></linearGradient><linearGradient id="o64" gradientUnits="userSpaceOnUse" x1="1181.5" y1="328.5" x2="1132.0" y2="429.6"><stop offset="0" stop-color="#00319e"/><stop offset="1" stop-color="#00169e"/></linearGradient><linearGradient id="i65" gradientUnits="userSpaceOnUse" x1="1230.4" y1="228.7" x2="1180.6" y2="322.8"><stop offset="0" stop-color="#ffffff"/><stop offset="0.179" stop-color="#aec9ff"/><stop offset="0.385" stop-color="#6fa1ff"/><stop offset="0.641" stop-color="#387eff"/><stop offset="1" stop-color="#005fff"/></linearGradient><linearGradient id="o65" gradientUnits="userSpaceOnUse" x1="1180.6" y1="322.8" x2="1127.7" y2="422.8"><stop offset="0" stop-color="#00359e"/><stop offset="1" stop-color="#00199e"/></linearGradient><linearGradient id="i66" gradientUnits="userSpaceOnUse" x1="1230.4" y1="228.7" x2="1179.8" y2="317.5"><stop offset="0" stop-color="#ffffff"/><stop offset="0.179" stop-color="#afccff"/><stop offset="0.385" stop-color="#71a5ff"/><stop offset="0.641" stop-color="#3984ff"/><stop offset="1" stop-color="#0064ff"/></linearGradient><linearGradient id="o66" gradientUnits="userSpaceOnUse" x1="1179.8" y1="317.5" x2="1123.5" y2="416.1"><stop offset="0" stop-color="#00389e"/><stop offset="1" stop-color="#001b9e"/></linearGradient><linearGradient id="i67" gradientUnits="userSpaceOnUse" x1="1230.4" y1="228.7" x2="1179.0" y2="312.6"><stop offset="0" stop-color="#ffffff"/><stop offset="0.179" stop-color="#b1cfff"/><stop offset="0.385" stop-color="#72a9ff"/><stop offset="0.641" stop-color="#3b89ff"/><stop offset="1" stop-color="#006aff"/></linearGradient><linearGradient id="o67" gradientUnits="userSpaceOnUse" x1="1179.0" y1="312.6" x2="1119.5" y2="409.7"><stop offset="0" stop-color="#003c9e"/><stop offset="1" stop-color="#001e9e"/></linearGradient><linearGradient id="i68" gradientUnits="userSpaceOnUse" x1="1230.4" y1="228.7" x2="1178.2" y2="308.1"><stop offset="0" stop-color="#ffffff"/><stop offset="0.179" stop-color="#b2d1ff"/><stop offset="0.385" stop-color="#74adff"/><stop offset="0.641" stop-color="#3c8dff"/><stop offset="1" stop-color="#006fff"/></linearGradient><linearGradient id="o68" gradientUnits="userSpaceOnUse" x1="1178.2" y1="308.1" x2="1115.7" y2="403.4"><stop offset="0" stop-color="#003f9e"/><stop offset="1" stop-color="#00209e"/></linearGradient><linearGradient id="i69" gradientUnits="userSpaceOnUse" x1="1230.4" y1="228.7" x2="1177.6" y2="303.9"><stop offset="0" stop-color="#ffffff"/><stop offset="0.179" stop-color="#b4d4ff"/><stop offset="0.385" stop-color="#76b1ff"/><stop offset="0.641" stop-color="#3d92ff"/><stop offset="1" stop-color="#0075ff"/></linearGradient><linearGradient id="o69" gradientUnits="userSpaceOnUse" x1="1177.6" y1="303.9" x2="1112.0" y2="397.2"><stop offset="0" stop-color="#00429e"/><stop offset="1" stop-color="#00239e"/></linearGradient><linearGradient id="i70" gradientUnits="userSpaceOnUse" x1="1230.4" y1="228.7" x2="1176.9" y2="300.0"><stop offset="0" stop-color="#ffffff"/><stop offset="0.179" stop-color="#b5d6ff"/><stop offset="0.41" stop-color="#71b1ff"/><stop offset="0.641" stop-color="#3e97ff"/><stop offset="1" stop-color="#007aff"/></linearGradient><linearGradient id="o70" gradientUnits="userSpaceOnUse" x1="1176.9" y1="300.0" x2="1108.4" y2="391.2"><stop offset="0" stop-color="#00469e"/><stop offset="1" stop-color="#00269e"/></linearGradient><linearGradient id="i71" gradientUnits="userSpaceOnUse" x1="1230.4" y1="228.7" x2="1176.3" y2="296.2"><stop offset="0" stop-color="#ffffff"/><stop offset="0.179" stop-color="#b6d8ff"/><stop offset="0.41" stop-color="#72b5ff"/><stop offset="0.641" stop-color="#3f9bff"/><stop offset="1" stop-color="#007fff"/></linearGradient><linearGradient id="o71" gradientUnits="userSpaceOnUse" x1="1176.3" y1="296.2" x2="1105.0" y2="385.3"><stop offset="0" stop-color="#00499e"/><stop offset="1" stop-color="#00299e"/></linearGradient><linearGradient id="i72" gradientUnits="userSpaceOnUse" x1="1230.4" y1="228.7" x2="1175.8" y2="292.7"><stop offset="0" stop-color="#ffffff"/><stop offset="0.179" stop-color="#b8dbff"/><stop offset="0.41" stop-color="#74b9ff"/><stop offset="0.641" stop-color="#40a0ff"/><stop offset="1" stop-color="#0084ff"/></linearGradient><linearGradient id="o72" gradientUnits="userSpaceOnUse" x1="1175.8" y1="292.7" x2="1101.6" y2="379.5"><stop offset="0" stop-color="#004c9e"/><stop offset="1" stop-color="#002b9e"/></linearGradient><linearGradient id="i73" gradientUnits="userSpaceOnUse" x1="1230.4" y1="228.7" x2="1175.2" y2="289.4"><stop offset="0" stop-color="#ffffff"/><stop offset="0.179" stop-color="#b9ddff"/><stop offset="0.41" stop-color="#75bcff"/><stop offset="0.641" stop-color="#42a4ff"/><stop offset="1" stop-color="#0089ff"/></linearGradient><linearGradient id="o73" gradientUnits="userSpaceOnUse" x1="1175.2" y1="289.4" x2="1098.4" y2="373.9"><stop offset="0" stop-color="#004f9e"/><stop offset="1" stop-color="#002e9e"/></linearGradient><linearGradient id="i74" gradientUnits="userSpaceOnUse" x1="1230.4" y1="228.7" x2="1174.7" y2="286.2"><stop offset="0" stop-color="#ffffff"/><stop offset="0.179" stop-color="#badfff"/><stop offset="0.41" stop-color="#77c0ff"/><stop offset="0.641" stop-color="#43a9ff"/><stop offset="1" stop-color="#008eff"/></linearGradient><linearGradient id="o74" gradientUnits="userSpaceOnUse" x1="1174.7" y1="286.2" x2="1095.2" y2="368.3"><stop offset="0" stop-color="#00539e"/><stop offset="1" stop-color="#00319e"/></linearGradient><linearGradient id="i75" gradientUnits="userSpaceOnUse" x1="1230.4" y1="228.7" x2="1174.2" y2="283.2"><stop offset="0" stop-color="#ffffff"/><stop offset="0.179" stop-color="#bbe0ff"/><stop offset="0.41" stop-color="#78c3ff"/><stop offset="0.641" stop-color="#44adff"/><stop offset="1" stop-color="#0093ff"/></linearGradient><linearGradient id="o75" gradientUnits="userSpaceOnUse" x1="1174.2" y1="283.2" x2="1092.1" y2="362.8"><stop offset="0" stop-color="#00569e"/><stop offset="1" stop-color="#00359e"/></linearGradient><linearGradient id="i76" gradientUnits="userSpaceOnUse" x1="1230.4" y1="228.7" x2="1173.7" y2="280.3"><stop offset="0" stop-color="#ffffff"/><stop offset="0.179" stop-color="#bce2ff"/><stop offset="0.41" stop-color="#7ac6ff"/><stop offset="0.641" stop-color="#45b1ff"/><stop offset="1" stop-color="#0098ff"/></linearGradient><linearGradient id="o76" gradientUnits="userSpaceOnUse" x1="1173.7" y1="280.3" x2="1089.0" y2="357.4"><stop offset="0" stop-color="#00599e"/><stop offset="1" stop-color="#00389e"/></linearGradient><linearGradient id="i77" gradientUnits="userSpaceOnUse" x1="1230.4" y1="228.7" x2="1173.3" y2="277.5"><stop offset="0" stop-color="#ffffff"/><stop offset="0.179" stop-color="#bde4ff"/><stop offset="0.41" stop-color="#7bcaff"/><stop offset="0.641" stop-color="#46b5ff"/><stop offset="1" stop-color="#009dff"/></linearGradient><linearGradient id="o77" gradientUnits="userSpaceOnUse" x1="1173.3" y1="277.5" x2="1086.1" y2="352.0"><stop offset="0" stop-color="#005c9e"/><stop offset="1" stop-color="#003b9e"/></linearGradient><linearGradient id="i78" gradientUnits="userSpaceOnUse" x1="1230.4" y1="228.7" x2="1172.9" y2="274.8"><stop offset="0" stop-color="#ffffff"/><stop offset="0.179" stop-color="#bee6ff"/><stop offset="0.41" stop-color="#7ccdff"/><stop offset="1" stop-color="#00a2ff"/></linearGradient><linearGradient id="o78" gradientUnits="userSpaceOnUse" x1="1172.9" y1="274.8" x2="1083.2" y2="346.7"><stop offset="0" stop-color="#00609e"/><stop offset="1" stop-color="#003e9e"/></linearGradient><linearGradient id="i79" gradientUnits="userSpaceOnUse" x1="1230.4" y1="228.7" x2="1172.4" y2="272.3"><stop offset="0" stop-color="#ffffff"/><stop offset="0.179" stop-color="#bfe8ff"/><stop offset="0.41" stop-color="#7dd0ff"/><stop offset="1" stop-color="#00a7ff"/></linearGradient><linearGradient id="o79" gradientUnits="userSpaceOnUse" x1="1172.4" y1="272.3" x2="1080.4" y2="341.4"><stop offset="0" stop-color="#00639e"/><stop offset="1" stop-color="#00429e"/></linearGradient><linearGradient id="i80" gradientUnits="userSpaceOnUse" x1="1230.4" y1="228.7" x2="1172.0" y2="269.8"><stop offset="0" stop-color="#ffffff"/><stop offset="0.205" stop-color="#b8e6ff"/><stop offset="0.41" stop-color="#7fd3ff"/><stop offset="1" stop-color="#00acff"/></linearGradient><linearGradient id="o80" gradientUnits="userSpaceOnUse" x1="1172.0" y1="269.8" x2="1077.7" y2="336.1"><stop offset="0" stop-color="#00669e"/><stop offset="1" stop-color="#00469e"/></linearGradient><linearGradient id="i81" gradientUnits="userSpaceOnUse" x1="1230.4" y1="228.7" x2="1171.6" y2="267.3"><stop offset="0" stop-color="#ffffff"/><stop offset="0.205" stop-color="#b9e8ff"/><stop offset="0.41" stop-color="#80d6ff"/><stop offset="1" stop-color="#00b1ff"/></linearGradient><linearGradient id="o81" gradientUnits="userSpaceOnUse" x1="1171.6" y1="267.3" x2="1075.0" y2="330.8"><stop offset="0" stop-color="#00699e"/><stop offset="1" stop-color="#004a9e"/></linearGradient><linearGradient id="i82" gradientUnits="userSpaceOnUse" x1="1230.4" y1="228.7" x2="1171.3" y2="265.0"><stop offset="0" stop-color="#ffffff"/><stop offset="0.205" stop-color="#baeaff"/><stop offset="0.41" stop-color="#81d9ff"/><stop offset="1" stop-color="#00b6ff"/></linearGradient><linearGradient id="o82" gradientUnits="userSpaceOnUse" x1="1171.3" y1="265.0" x2="1072.4" y2="325.6"><stop offset="0" stop-color="#006d9e"/><stop offset="1" stop-color="#004e9e"/></linearGradient><linearGradient id="i83" gradientUnits="userSpaceOnUse" x1="1230.4" y1="228.7" x2="1170.9" y2="262.7"><stop offset="0" stop-color="#ffffff"/><stop offset="0.205" stop-color="#bbecff"/><stop offset="0.41" stop-color="#83dcff"/><stop offset="1" stop-color="#00bcff"/></linearGradient><linearGradient id="o83" gradientUnits="userSpaceOnUse" x1="1170.9" y1="262.7" x2="1069.8" y2="320.3"><stop offset="0" stop-color="#00709e"/><stop offset="1" stop-color="#00529e"/></linearGradient><linearGradient id="i84" gradientUnits="userSpaceOnUse" x1="1230.4" y1="228.7" x2="1170.5" y2="260.4"><stop offset="0" stop-color="#ffffff"/><stop offset="0.41" stop-color="#84dfff"/><stop offset="1" stop-color="#00c1ff"/></linearGradient><linearGradient id="o84" gradientUnits="userSpaceOnUse" x1="1170.5" y1="260.4" x2="1067.3" y2="315.1"><stop offset="0" stop-color="#00749e"/><stop offset="1" stop-color="#00579e"/></linearGradient><linearGradient id="i85" gradientUnits="userSpaceOnUse" x1="1230.4" y1="228.7" x2="1170.2" y2="258.2"><stop offset="0" stop-color="#ffffff"/><stop offset="0.41" stop-color="#85e2ff"/><stop offset="1" stop-color="#00c6ff"/></linearGradient><linearGradient id="o85" gradientUnits="userSpaceOnUse" x1="1170.2" y1="258.2" x2="1064.9" y2="309.8"><stop offset="0" stop-color="#00779e"/><stop offset="1" stop-color="#005c9e"/></linearGradient><linearGradient id="i86" gradientUnits="userSpaceOnUse" x1="1230.4" y1="228.7" x2="1169.8" y2="256.1"><stop offset="0" stop-color="#ffffff"/><stop offset="0.41" stop-color="#86e5ff"/><stop offset="1" stop-color="#00ccff"/></linearGradient><linearGradient id="o86" gradientUnits="userSpaceOnUse" x1="1169.8" y1="256.1" x2="1062.5" y2="304.5"><stop offset="0" stop-color="#007b9e"/><stop offset="1" stop-color="#00619e"/></linearGradient><linearGradient id="i87" gradientUnits="userSpaceOnUse" x1="1230.4" y1="228.7" x2="1169.5" y2="254.0"><stop offset="0" stop-color="#ffffff"/><stop offset="0.41" stop-color="#88e8ff"/><stop offset="1" stop-color="#00d1ff"/></linearGradient><linearGradient id="o87" gradientUnits="userSpaceOnUse" x1="1169.5" y1="254.0" x2="1060.1" y2="299.3"><stop offset="0" stop-color="#007f9e"/><stop offset="1" stop-color="#00669e"/></linearGradient><linearGradient id="i88" gradientUnits="userSpaceOnUse" x1="1230.4" y1="228.7" x2="1169.1" y2="251.9"><stop offset="0" stop-color="#ffffff"/><stop offset="0.41" stop-color="#89ebff"/><stop offset="1" stop-color="#00d7ff"/></linearGradient><linearGradient id="o88" gradientUnits="userSpaceOnUse" x1="1169.1" y1="251.9" x2="1057.8" y2="294.0"><stop offset="0" stop-color="#00839e"/><stop offset="1" stop-color="#006c9e"/></linearGradient><linearGradient id="i89" gradientUnits="userSpaceOnUse" x1="1230.4" y1="228.7" x2="1168.8" y2="249.8"><stop offset="0" stop-color="#ffffff"/><stop offset="0.41" stop-color="#8aeeff"/><stop offset="1" stop-color="#00ddff"/></linearGradient><linearGradient id="o89" gradientUnits="userSpaceOnUse" x1="1168.8" y1="249.8" x2="1055.5" y2="288.6"><stop offset="0" stop-color="#00879e"/><stop offset="1" stop-color="#00739e"/></linearGradient><linearGradient id="i90" gradientUnits="userSpaceOnUse" x1="1230.4" y1="228.7" x2="1168.5" y2="247.8"><stop offset="0" stop-color="#ffffff"/><stop offset="0.41" stop-color="#8bf1ff"/><stop offset="1" stop-color="#00e3ff"/></linearGradient><linearGradient id="o90" gradientUnits="userSpaceOnUse" x1="1168.5" y1="247.8" x2="1053.2" y2="283.2"><stop offset="0" stop-color="#008b9e"/><stop offset="1" stop-color="#00799e"/></linearGradient><linearGradient id="i91" gradientUnits="userSpaceOnUse" x1="1230.4" y1="228.7" x2="1168.1" y2="245.8"><stop offset="0" stop-color="#ffffff"/><stop offset="0.41" stop-color="#8df5ff"/><stop offset="1" stop-color="#00e9ff"/></linearGradient><linearGradient id="o91" gradientUnits="userSpaceOnUse" x1="1168.1" y1="245.8" x2="1051.0" y2="277.8"><stop offset="0" stop-color="#008f9e"/><stop offset="1" stop-color="#00819e"/></linearGradient><linearGradient id="i92" gradientUnits="userSpaceOnUse" x1="1230.4" y1="228.7" x2="1167.8" y2="243.8"><stop offset="0" stop-color="#ffffff"/><stop offset="0.385" stop-color="#95f8ff"/><stop offset="1" stop-color="#00f0ff"/></linearGradient><linearGradient id="o92" gradientUnits="userSpaceOnUse" x1="1167.8" y1="243.8" x2="1048.7" y2="272.4"><stop offset="0" stop-color="#00939e"/><stop offset="1" stop-color="#00899e"/></linearGradient><linearGradient id="i93" gradientUnits="userSpaceOnUse" x1="1230.4" y1="228.7" x2="1167.5" y2="241.8"><stop offset="0" stop-color="#ffffff"/><stop offset="0.385" stop-color="#96fbff"/><stop offset="1" stop-color="#00f6ff"/></linearGradient><linearGradient id="o93" gradientUnits="userSpaceOnUse" x1="1167.5" y1="241.8" x2="1046.5" y2="266.8"><stop offset="0" stop-color="#00989e"/><stop offset="1" stop-color="#00929e"/></linearGradient><linearGradient id="i94" gradientUnits="userSpaceOnUse" x1="1230.4" y1="228.7" x2="1167.2" y2="239.8"><stop offset="0" stop-color="#ffffff"/><stop offset="0.359" stop-color="#9efeff"/><stop offset="1" stop-color="#00fdff"/></linearGradient><linearGradient id="o94" gradientUnits="userSpaceOnUse" x1="1167.2" y1="239.8" x2="1044.4" y2="261.2"><stop offset="0" stop-color="#009d9e"/><stop offset="1" stop-color="#009b9e"/></linearGradient><linearGradient id="i95" gradientUnits="userSpaceOnUse" x1="1230.4" y1="228.7" x2="1166.9" y2="237.8"><stop offset="0" stop-color="#ffffff"/><stop offset="0.359" stop-color="#9efffd"/><stop offset="1" stop-color="#00fffa"/></linearGradient><linearGradient id="o95" gradientUnits="userSpaceOnUse" x1="1166.9" y1="237.8" x2="1042.2" y2="255.5"><stop offset="0" stop-color="#009e9a"/><stop offset="1" stop-color="#009e96"/></linearGradient><linearGradient id="i96" gradientUnits="userSpaceOnUse" x1="1230.4" y1="228.7" x2="1166.5" y2="235.8"><stop offset="0" stop-color="#ffffff"/><stop offset="0.385" stop-color="#97fffa"/><stop offset="1" stop-color="#00fff3"/></linearGradient><linearGradient id="o96" gradientUnits="userSpaceOnUse" x1="1166.5" y1="235.8" x2="1040.1" y2="249.8"><stop offset="0" stop-color="#009e96"/><stop offset="1" stop-color="#009e8c"/></linearGradient><linearGradient id="i97" gradientUnits="userSpaceOnUse" x1="1230.4" y1="228.7" x2="1166.2" y2="233.8"><stop offset="0" stop-color="#ffffff"/><stop offset="0.385" stop-color="#96fff7"/><stop offset="1" stop-color="#00ffec"/></linearGradient><linearGradient id="o97" gradientUnits="userSpaceOnUse" x1="1166.2" y1="233.8" x2="1038.0" y2="243.9"><stop offset="0" stop-color="#009e91"/><stop offset="1" stop-color="#009e82"/></linearGradient><linearGradient id="i98" gradientUnits="userSpaceOnUse" x1="1230.4" y1="228.7" x2="1165.9" y2="231.8"><stop offset="0" stop-color="#ffffff"/><stop offset="0.385" stop-color="#96fff3"/><stop offset="1" stop-color="#00ffe5"/></linearGradient><linearGradient id="o98" gradientUnits="userSpaceOnUse" x1="1165.9" y1="231.8" x2="1036.0" y2="237.9"><stop offset="0" stop-color="#009e8c"/><stop offset="1" stop-color="#009e79"/></linearGradient><linearGradient id="i99" gradientUnits="userSpaceOnUse" x1="1230.4" y1="228.7" x2="1165.6" y2="229.8"><stop offset="0" stop-color="#ffffff"/><stop offset="0.385" stop-color="#95fff0"/><stop offset="1" stop-color="#00ffde"/></linearGradient><linearGradient id="o99" gradientUnits="userSpaceOnUse" x1="1165.6" y1="229.8" x2="1034.0" y2="231.8"><stop offset="0" stop-color="#009e87"/><stop offset="1" stop-color="#009e6f"/></linearGradient><linearGradient id="i100" gradientUnits="userSpaceOnUse" x1="1230.4" y1="228.7" x2="1165.2" y2="227.7"><stop offset="0" stop-color="#ffffff"/><stop offset="0.385" stop-color="#95ffed"/><stop offset="1" stop-color="#00ffd7"/></linearGradient><linearGradient id="o100" gradientUnits="userSpaceOnUse" x1="1165.2" y1="227.7" x2="1032.0" y2="225.6"><stop offset="0" stop-color="#009e83"/><stop offset="1" stop-color="#009e66"/></linearGradient><linearGradient id="i101" gradientUnits="userSpaceOnUse" x1="1230.4" y1="228.7" x2="1164.9" y2="225.7"><stop offset="0" stop-color="#ffffff"/><stop offset="0.385" stop-color="#94ffea"/><stop offset="1" stop-color="#00ffd0"/></linearGradient><linearGradient id="o101" gradientUnits="userSpaceOnUse" x1="1164.9" y1="225.7" x2="1030.1" y2="219.3"><stop offset="0" stop-color="#009e7e"/><stop offset="1" stop-color="#009e5d"/></linearGradient><linearGradient id="i102" gradientUnits="userSpaceOnUse" x1="1230.4" y1="228.7" x2="1164.6" y2="223.6"><stop offset="0" stop-color="#ffffff"/><stop offset="0.385" stop-color="#94ffe7"/><stop offset="1" stop-color="#00ffc9"/></linearGradient><linearGradient id="o102" gradientUnits="userSpaceOnUse" x1="1164.6" y1="223.6" x2="1028.3" y2="212.8"><stop offset="0" stop-color="#009e7a"/><stop offset="1" stop-color="#009e54"/></linearGradient><linearGradient id="i103" gradientUnits="userSpaceOnUse" x1="1230.4" y1="228.7" x2="1164.2" y2="221.4"><stop offset="0" stop-color="#ffffff"/><stop offset="0.41" stop-color="#8dffe2"/><stop offset="1" stop-color="#00ffc3"/></linearGradient><linearGradient id="o103" gradientUnits="userSpaceOnUse" x1="1164.2" y1="221.4" x2="1026.6" y2="206.2"><stop offset="0" stop-color="#009e75"/><stop offset="1" stop-color="#009e4b"/></linearGradient><linearGradient id="i104" gradientUnits="userSpaceOnUse" x1="1230.4" y1="228.7" x2="1163.9" y2="219.3"><stop offset="0" stop-color="#ffffff"/><stop offset="0.41" stop-color="#8cffdf"/><stop offset="1" stop-color="#00ffbc"/></linearGradient><linearGradient id="o104" gradientUnits="userSpaceOnUse" x1="1163.9" y1="219.3" x2="1025.1" y2="199.5"><stop offset="0" stop-color="#009e70"/><stop offset="1" stop-color="#009e42"/></linearGradient><linearGradient id="i105" gradientUnits="userSpaceOnUse" x1="1230.4" y1="228.7" x2="1163.5" y2="217.1"><stop offset="0" stop-color="#ffffff"/><stop offset="0.41" stop-color="#8cffdb"/><stop offset="1" stop-color="#00ffb5"/></linearGradient><linearGradient id="o105" gradientUnits="userSpaceOnUse" x1="1163.5" y1="217.1" x2="1023.7" y2="192.7"><stop offset="0" stop-color="#009e6c"/><stop offset="0.441" stop-color="#009e50"/><stop offset="1" stop-color="#009e3a"/></linearGradient><linearGradient id="i106" gradientUnits="userSpaceOnUse" x1="1230.4" y1="228.7" x2="1163.1" y2="214.8"><stop offset="0" stop-color="#ffffff"/><stop offset="0.41" stop-color="#8bffd8"/><stop offset="1" stop-color="#00ffae"/></linearGradient><linearGradient id="o106" gradientUnits="userSpaceOnUse" x1="1163.1" y1="214.8" x2="1022.6" y2="185.7"><stop offset="0" stop-color="#009e67"/><stop offset="0.441" stop-color="#009e4a"/><stop offset="1" stop-color="#009e32"/></linearGradient><linearGradient id="i107" gradientUnits="userSpaceOnUse" x1="1230.4" y1="228.7" x2="1162.8" y2="212.5"><stop offset="0" stop-color="#ffffff"/><stop offset="0.41" stop-color="#8bffd4"/><stop offset="1" stop-color="#00ffa7"/></linearGradient><linearGradient id="o107" gradientUnits="userSpaceOnUse" x1="1162.8" y1="212.5" x2="1021.7" y2="178.7"><stop offset="0" stop-color="#009e62"/><stop offset="0.441" stop-color="#009e43"/><stop offset="1" stop-color="#009e29"/></linearGradient><linearGradient id="i108" gradientUnits="userSpaceOnUse" x1="1230.4" y1="228.7" x2="1162.4" y2="210.1"><stop offset="0" stop-color="#ffffff"/><stop offset="0.41" stop-color="#8affd1"/><stop offset="1" stop-color="#00ffa0"/></linearGradient><linearGradient id="o108" gradientUnits="userSpaceOnUse" x1="1162.4" y1="210.1" x2="1021.4" y2="171.6"><stop offset="0" stop-color="#009e5e"/><stop offset="0.441" stop-color="#009e3c"/><stop offset="1" stop-color="#009e22"/></linearGradient><linearGradient id="i109" gradientUnits="userSpaceOnUse" x1="1230.4" y1="228.7" x2="1162.0" y2="207.7"><stop offset="0" stop-color="#ffffff"/><stop offset="0.41" stop-color="#8affcd"/><stop offset="1" stop-color="#00ff98"/></linearGradient><linearGradient id="o109" gradientUnits="userSpaceOnUse" x1="1162.0" y1="207.7" x2="1021.6" y2="164.5"><stop offset="0" stop-color="#009e59"/><stop offset="0.441" stop-color="#009e36"/><stop offset="1" stop-color="#009e1a"/></linearGradient><linearGradient id="i110" gradientUnits="userSpaceOnUse" x1="1230.4" y1="228.7" x2="1161.6" y2="205.2"><stop offset="0" stop-color="#ffffff"/><stop offset="0.41" stop-color="#89ffc9"/><stop offset="1" stop-color="#00ff91"/></linearGradient><linearGradient id="o110" gradientUnits="userSpaceOnUse" x1="1161.6" y1="205.2" x2="1022.6" y2="157.6"><stop offset="0" stop-color="#009e54"/><stop offset="0.441" stop-color="#009e30"/><stop offset="1" stop-color="#009e12"/></linearGradient><linearGradient id="i111" gradientUnits="userSpaceOnUse" x1="1230.4" y1="228.7" x2="1161.2" y2="202.6"><stop offset="0" stop-color="#ffffff"/><stop offset="0.41" stop-color="#89ffc5"/><stop offset="1" stop-color="#00ff89"/></linearGradient><linearGradient id="o111" gradientUnits="userSpaceOnUse" x1="1161.2" y1="202.6" x2="1024.7" y2="151.0"><stop offset="0" stop-color="#009e4f"/><stop offset="0.441" stop-color="#009e2a"/><stop offset="1" stop-color="#009e0b"/></linearGradient><linearGradient id="i112" gradientUnits="userSpaceOnUse" x1="1230.4" y1="228.7" x2="1160.7" y2="199.9"><stop offset="0" stop-color="#ffffff"/><stop offset="0.41" stop-color="#88ffc1"/><stop offset="1" stop-color="#00ff82"/></linearGradient><linearGradient id="o112" gradientUnits="userSpaceOnUse" x1="1160.7" y1="199.9" x2="1028.0" y2="144.9"><stop offset="0" stop-color="#009e4a"/><stop offset="0.441" stop-color="#009e24"/><stop offset="1" stop-color="#009e05"/></linearGradient><linearGradient id="i113" gradientUnits="userSpaceOnUse" x1="1230.4" y1="228.7" x2="1160.3" y2="197.1"><stop offset="0" stop-color="#ffffff"/><stop offset="0.41" stop-color="#87ffbd"/><stop offset="1" stop-color="#00ff7a"/></linearGradient><linearGradient id="o113" gradientUnits="userSpaceOnUse" x1="1160.3" y1="197.1" x2="1033.1" y2="139.7"><stop offset="0" stop-color="#009e45"/><stop offset="0.458" stop-color="#009e1d"/><stop offset="1" stop-color="#009e00"/></linearGradient><linearGradient id="i114" gradientUnits="userSpaceOnUse" x1="1230.4" y1="228.7" x2="1159.8" y2="194.2"><stop offset="0" stop-color="#ffffff"/><stop offset="0.41" stop-color="#87ffb9"/><stop offset="1" stop-color="#00ff71"/></linearGradient><linearGradient id="o114" gradientUnits="userSpaceOnUse" x1="1159.8" y1="194.2" x2="1040.4" y2="135.7"><stop offset="0" stop-color="#009e40"/><stop offset="0.542" stop-color="#009e13"/><stop offset="1" stop-color="#009e00"/></linearGradient><linearGradient id="i115" gradientUnits="userSpaceOnUse" x1="1230.4" y1="228.7" x2="1159.3" y2="191.1"><stop offset="0" stop-color="#ffffff"/><stop offset="0.41" stop-color="#86ffb5"/><stop offset="1" stop-color="#00ff69"/></linearGradient><linearGradient id="o115" gradientUnits="userSpaceOnUse" x1="1159.3" y1="191.1" x2="1049.8" y2="133.1"><stop offset="0" stop-color="#009e3b"/><stop offset="0.627" stop-color="#009e0a"/><stop offset="0.814" stop-color="#009e00"/><stop offset="1" stop-color="#009e00"/></linearGradient><linearGradient id="i116" gradientUnits="userSpaceOnUse" x1="1230.4" y1="228.7" x2="1158.8" y2="187.9"><stop offset="0" stop-color="#ffffff"/><stop offset="0.41" stop-color="#85ffb0"/><stop offset="1" stop-color="#00ff60"/></linearGradient><linearGradient id="o116" gradientUnits="userSpaceOnUse" x1="1158.8" y1="187.9" x2="1060.9" y2="132.1"><stop offset="0" stop-color="#009e35"/><stop offset="0.729" stop-color="#009e02"/><stop offset="1" stop-color="#009e00"/></linearGradient><linearGradient id="i117" gradientUnits="userSpaceOnUse" x1="1230.4" y1="228.7" x2="1158.2" y2="184.5"><stop offset="0" stop-color="#ffffff"/><stop offset="0.41" stop-color="#85ffab"/><stop offset="1" stop-color="#00ff57"/></linearGradient><linearGradient id="o117" gradientUnits="userSpaceOnUse" x1="1158.2" y1="184.5" x2="1072.1" y2="131.8"><stop offset="0" stop-color="#009e30"/><stop offset="0.712" stop-color="#009e01"/><stop offset="1" stop-color="#009e00"/></linearGradient><linearGradient id="i118" gradientUnits="userSpaceOnUse" x1="1230.4" y1="228.7" x2="1157.7" y2="181.0"><stop offset="0" stop-color="#ffffff"/><stop offset="0.41" stop-color="#84ffa6"/><stop offset="1" stop-color="#00ff4e"/></linearGradient><linearGradient id="o118" gradientUnits="userSpaceOnUse" x1="1157.7" y1="181.0" x2="1082.8" y2="131.8"><stop offset="0" stop-color="#009e2a"/><stop offset="0.678" stop-color="#009e00"/><stop offset="1" stop-color="#009e00"/></linearGradient><linearGradient id="i119" gradientUnits="userSpaceOnUse" x1="1230.4" y1="228.7" x2="1157.0" y2="177.2"><stop offset="0" stop-color="#ffffff"/><stop offset="0.205" stop-color="#bcffcc"/><stop offset="0.41" stop-color="#83ffa1"/><stop offset="1" stop-color="#00ff44"/></linearGradient><linearGradient id="o119" gradientUnits="userSpaceOnUse" x1="1157.0" y1="177.2" x2="1092.9" y2="132.1"><stop offset="0" stop-color="#009e24"/><stop offset="0.627" stop-color="#009e01"/><stop offset="1" stop-color="#009e00"/></linearGradient><linearGradient id="i120" gradientUnits="userSpaceOnUse" x1="1230.4" y1="228.7" x2="1156.4" y2="173.2"><stop offset="0" stop-color="#ffffff"/><stop offset="0.205" stop-color="#bbffc9"/><stop offset="0.41" stop-color="#82ff9b"/><stop offset="1" stop-color="#00ff39"/></linearGradient><linearGradient id="o120" gradientUnits="userSpaceOnUse" x1="1156.4" y1="173.2" x2="1102.3" y2="132.6"><stop offset="0" stop-color="#009e1e"/><stop offset="0.593" stop-color="#009e00"/><stop offset="1" stop-color="#009e00"/></linearGradient><linearGradient id="i121" gradientUnits="userSpaceOnUse" x1="1230.4" y1="228.7" x2="1155.7" y2="168.9"><stop offset="0" stop-color="#ffffff"/><stop offset="0.205" stop-color="#bbffc5"/><stop offset="0.41" stop-color="#82ff95"/><stop offset="1" stop-color="#00ff2e"/></linearGradient><linearGradient id="o121" gradientUnits="userSpaceOnUse" x1="1155.7" y1="168.9" x2="1111.0" y2="133.1"><stop offset="0" stop-color="#009e17"/><stop offset="0.525" stop-color="#009e00"/><stop offset="1" stop-color="#009e00"/></linearGradient><linearGradient id="i122" gradientUnits="userSpaceOnUse" x1="1230.4" y1="228.7" x2="1155.0" y2="164.3"><stop offset="0" stop-color="#ffffff"/><stop offset="0.205" stop-color="#baffc2"/><stop offset="0.41" stop-color="#81ff8f"/><stop offset="1" stop-color="#00ff23"/></linearGradient><linearGradient id="o122" gradientUnits="userSpaceOnUse" x1="1155.0" y1="164.3" x2="1119.2" y2="133.7"><stop offset="0" stop-color="#009e11"/><stop offset="0.441" stop-color="#009e00"/><stop offset="1" stop-color="#009e00"/></linearGradient><linearGradient id="i123" gradientUnits="userSpaceOnUse" x1="1230.4" y1="228.7" x2="1154.2" y2="159.4"><stop offset="0" stop-color="#ffffff"/><stop offset="0.205" stop-color="#b9ffbe"/><stop offset="0.436" stop-color="#79ff83"/><stop offset="1" stop-color="#00ff16"/></linearGradient><linearGradient id="o123" gradientUnits="userSpaceOnUse" x1="1154.2" y1="159.4" x2="1126.7" y2="134.4"><stop offset="0" stop-color="#009e0a"/><stop offset="0.322" stop-color="#009e00"/><stop offset="1" stop-color="#009e00"/></linearGradient><linearGradient id="i124" gradientUnits="userSpaceOnUse" x1="1230.4" y1="228.7" x2="1153.3" y2="154.0"><stop offset="0" stop-color="#ffffff"/><stop offset="0.205" stop-color="#b8ffba"/><stop offset="0.41" stop-color="#7fff81"/><stop offset="1" stop-color="#00ff08"/></linearGradient><linearGradient id="o124" gradientUnits="userSpaceOnUse" x1="1153.3" y1="154.0" x2="1133.7" y2="135.0"><stop offset="0" stop-color="#009e02"/><stop offset="1" stop-color="#009e00"/></linearGradient><linearGradient id="i125" gradientUnits="userSpaceOnUse" x1="1230.4" y1="228.7" x2="1155.9" y2="151.9"><stop offset="0" stop-color="#ffffff"/><stop offset="0.205" stop-color="#baffb8"/><stop offset="0.41" stop-color="#82ff7f"/><stop offset="1" stop-color="#0aff00"/></linearGradient><linearGradient id="o125" gradientUnits="userSpaceOnUse" x1="1155.9" y1="151.9" x2="1140.1" y2="135.6"><stop offset="0" stop-color="#039e00"/><stop offset="1" stop-color="#009e00"/></linearGradient><linearGradient id="i126" gradientUnits="userSpaceOnUse" x1="1230.4" y1="228.7" x2="1160.9" y2="152.4"><stop offset="0" stop-color="#ffffff"/><stop offset="0.205" stop-color="#beffb9"/><stop offset="0.436" stop-color="#83ff79"/><stop offset="1" stop-color="#18ff00"/></linearGradient><linearGradient id="o126" gradientUnits="userSpaceOnUse" x1="1160.9" y1="152.4" x2="1146.2" y2="136.2"><stop offset="0" stop-color="#0b9e00"/><stop offset="1" stop-color="#009e00"/></linearGradient><linearGradient id="i127" gradientUnits="userSpaceOnUse" x1="1230.4" y1="228.7" x2="1165.5" y2="152.8"><stop offset="0" stop-color="#ffffff"/><stop offset="0.205" stop-color="#c2ffba"/><stop offset="0.41" stop-color="#90ff81"/><stop offset="0.692" stop-color="#58ff3f"/><stop offset="1" stop-color="#25ff00"/></linearGradient><linearGradient id="o127" gradientUnits="userSpaceOnUse" x1="1165.5" y1="152.8" x2="1151.8" y2="136.8"><stop offset="0" stop-color="#129e00"/><stop offset="1" stop-color="#029e00"/></linearGradient><linearGradient id="i128" gradientUnits="userSpaceOnUse" x1="1230.4" y1="228.7" x2="1169.9" y2="153.2"><stop offset="0" stop-color="#ffffff"/><stop offset="0.205" stop-color="#c6ffba"/><stop offset="0.41" stop-color="#96ff81"/><stop offset="1" stop-color="#31ff00"/></linearGradient><linearGradient id="o128" gradientUnits="userSpaceOnUse" x1="1169.9" y1="153.2" x2="1157.2" y2="137.3"><stop offset="0" stop-color="#199e00"/><stop offset="1" stop-color="#099e00"/></linearGradient><linearGradient id="i129" gradientUnits="userSpaceOnUse" x1="1230.4" y1="228.7" x2="1174.0" y2="153.6"><stop offset="0" stop-color="#ffffff"/><stop offset="0.205" stop-color="#c9ffbb"/><stop offset="0.41" stop-color="#9cff82"/><stop offset="1" stop-color="#3cff00"/></linearGradient><linearGradient id="o129" gradientUnits="userSpaceOnUse" x1="1174.0" y1="153.6" x2="1162.1" y2="137.9"><stop offset="0" stop-color="#1f9e00"/><stop offset="1" stop-color="#109e00"/></linearGradient><linearGradient id="i130" gradientUnits="userSpaceOnUse" x1="1230.4" y1="228.7" x2="1177.8" y2="153.9"><stop offset="0" stop-color="#ffffff"/><stop offset="0.205" stop-color="#ccffbc"/><stop offset="0.41" stop-color="#a2ff83"/><stop offset="1" stop-color="#46ff00"/></linearGradient><linearGradient id="o130" gradientUnits="userSpaceOnUse" x1="1177.8" y1="153.9" x2="1166.9" y2="138.3"><stop offset="0" stop-color="#259e00"/><stop offset="1" stop-color="#179e00"/></linearGradient><linearGradient id="i131" gradientUnits="userSpaceOnUse" x1="1230.4" y1="228.7" x2="1181.5" y2="154.3"><stop offset="0" stop-color="#ffffff"/><stop offset="0.205" stop-color="#cfffbc"/><stop offset="0.41" stop-color="#a7ff84"/><stop offset="1" stop-color="#51ff00"/></linearGradient><linearGradient id="o131" gradientUnits="userSpaceOnUse" x1="1181.5" y1="154.3" x2="1171.3" y2="138.8"><stop offset="0" stop-color="#2c9e00"/><stop offset="1" stop-color="#1e9e00"/></linearGradient><linearGradient id="i132" gradientUnits="userSpaceOnUse" x1="1230.4" y1="228.7" x2="1185.0" y2="154.6"><stop offset="0" stop-color="#ffffff"/><stop offset="0.41" stop-color="#acff84"/><stop offset="1" stop-color="#5aff00"/></linearGradient><linearGradient id="o132" gradientUnits="userSpaceOnUse" x1="1185.0" y1="154.6" x2="1175.6" y2="139.3"><stop offset="0" stop-color="#329e00"/><stop offset="1" stop-color="#259e00"/></linearGradient><linearGradient id="i133" gradientUnits="userSpaceOnUse" x1="1230.4" y1="228.7" x2="1188.3" y2="154.9"><stop offset="0" stop-color="#ffffff"/><stop offset="0.41" stop-color="#b1ff85"/><stop offset="1" stop-color="#64ff00"/></linearGradient><linearGradient id="o133" gradientUnits="userSpaceOnUse" x1="1188.3" y1="154.9" x2="1179.6" y2="139.7"><stop offset="0" stop-color="#379e00"/><stop offset="1" stop-color="#2b9e00"/></linearGradient><linearGradient id="i134" gradientUnits="userSpaceOnUse" x1="1230.4" y1="228.7" x2="1191.5" y2="155.2"><stop offset="0" stop-color="#ffffff"/><stop offset="0.41" stop-color="#b6ff86"/><stop offset="1" stop-color="#6dff00"/></linearGradient><linearGradient id="o134" gradientUnits="userSpaceOnUse" x1="1191.5" y1="155.2" x2="1183.5" y2="140.1"><stop offset="0" stop-color="#3d9e00"/><stop offset="1" stop-color="#329e00"/></linearGradient><linearGradient id="i135" gradientUnits="userSpaceOnUse" x1="1230.4" y1="228.7" x2="1194.5" y2="155.5"><stop offset="0" stop-color="#ffffff"/><stop offset="0.41" stop-color="#bbff86"/><stop offset="1" stop-color="#76ff00"/></linearGradient><linearGradient id="o135" gradientUnits="userSpaceOnUse" x1="1194.5" y1="155.5" x2="1187.2" y2="140.6"><stop offset="0" stop-color="#439e00"/><stop offset="1" stop-color="#389e00"/></linearGradient><linearGradient id="i136" gradientUnits="userSpaceOnUse" x1="1230.4" y1="228.7" x2="1197.4" y2="155.8"><stop offset="0" stop-color="#ffffff"/><stop offset="0.41" stop-color="#bfff87"/><stop offset="1" stop-color="#7eff00"/></linearGradient><linearGradient id="o136" gradientUnits="userSpaceOnUse" x1="1197.4" y1="155.8" x2="1190.8" y2="141.0"><stop offset="0" stop-color="#489e00"/><stop offset="1" stop-color="#3e9e00"/></linearGradient><linearGradient id="i137" gradientUnits="userSpaceOnUse" x1="1230.4" y1="228.7" x2="1200.3" y2="156.0"><stop offset="0" stop-color="#ffffff"/><stop offset="0.41" stop-color="#c3ff87"/><stop offset="1" stop-color="#87ff00"/></linearGradient><linearGradient id="o137" gradientUnits="userSpaceOnUse" x1="1200.3" y1="156.0" x2="1194.2" y2="141.3"><stop offset="0" stop-color="#4e9e00"/><stop offset="1" stop-color="#449e00"/></linearGradient><linearGradient id="i138" gradientUnits="userSpaceOnUse" x1="1230.4" y1="228.7" x2="1203.0" y2="156.3"><stop offset="0" stop-color="#ffffff"/><stop offset="0.41" stop-color="#c8ff88"/><stop offset="1" stop-color="#8fff00"/></linearGradient><linearGradient id="o138" gradientUnits="userSpaceOnUse" x1="1203.0" y1="156.3" x2="1197.5" y2="141.7"><stop offset="0" stop-color="#539e00"/><stop offset="1" stop-color="#4a9e00"/></linearGradient><linearGradient id="i139" gradientUnits="userSpaceOnUse" x1="1230.4" y1="228.7" x2="1205.7" y2="156.6"><stop offset="0" stop-color="#ffffff"/><stop offset="0.41" stop-color="#ccff88"/><stop offset="1" stop-color="#97ff00"/></linearGradient><linearGradient id="o139" gradientUnits="userSpaceOnUse" x1="1205.7" y1="156.6" x2="1200.7" y2="142.1"><stop offset="0" stop-color="#589e00"/><stop offset="1" stop-color="#509e00"/></linearGradient><linearGradient id="i140" gradientUnits="userSpaceOnUse" x1="1230.4" y1="228.7" x2="1208.3" y2="156.8"><stop offset="0" stop-color="#ffffff"/><stop offset="0.41" stop-color="#d0ff89"/><stop offset="1" stop-color="#9fff00"/></linearGradient><linearGradient id="o140" gradientUnits="userSpaceOnUse" x1="1208.3" y1="156.8" x2="1203.8" y2="142.4"><stop offset="0" stop-color="#5d9e00"/><stop offset="1" stop-color="#559e00"/></linearGradient><linearGradient id="i141" gradientUnits="userSpaceOnUse" x1="1230.4" y1="228.7" x2="1210.8" y2="157.0"><stop offset="0" stop-color="#ffffff"/><stop offset="0.41" stop-color="#d4ff8a"/><stop offset="1" stop-color="#a7ff00"/></linearGradient><linearGradient id="o141" gradientUnits="userSpaceOnUse" x1="1210.8" y1="157.0" x2="1206.9" y2="142.8"><stop offset="0" stop-color="#639e00"/><stop offset="1" stop-color="#5b9e00"/></linearGradient><linearGradient id="i142" gradientUnits="userSpaceOnUse" x1="1230.4" y1="228.7" x2="1213.2" y2="157.3"><stop offset="0" stop-color="#ffffff"/><stop offset="0.41" stop-color="#d8ff8a"/><stop offset="1" stop-color="#afff00"/></linearGradient><linearGradient id="o142" gradientUnits="userSpaceOnUse" x1="1213.2" y1="157.3" x2="1209.8" y2="143.1"><stop offset="0" stop-color="#689e00"/><stop offset="1" stop-color="#619e00"/></linearGradient><linearGradient id="i143" gradientUnits="userSpaceOnUse" x1="1230.4" y1="228.7" x2="1215.6" y2="157.5"><stop offset="0" stop-color="#ffffff"/><stop offset="0.41" stop-color="#dcff8b"/><stop offset="1" stop-color="#b6ff00"/></linearGradient><linearGradient id="o143" gradientUnits="userSpaceOnUse" x1="1215.6" y1="157.5" x2="1212.7" y2="143.4"><stop offset="0" stop-color="#6d9e00"/><stop offset="1" stop-color="#679e00"/></linearGradient><linearGradient id="i144" gradientUnits="userSpaceOnUse" x1="1230.4" y1="228.7" x2="1218.0" y2="157.7"><stop offset="0" stop-color="#ffffff"/><stop offset="0.41" stop-color="#e0ff8b"/><stop offset="1" stop-color="#beff00"/></linearGradient><linearGradient id="o144" gradientUnits="userSpaceOnUse" x1="1218.0" y1="157.7" x2="1215.6" y2="143.7"><stop offset="0" stop-color="#729e00"/><stop offset="1" stop-color="#6c9e00"/></linearGradient><linearGradient id="i145" gradientUnits="userSpaceOnUse" x1="1230.4" y1="228.7" x2="1220.3" y2="157.9"><stop offset="0" stop-color="#ffffff"/><stop offset="0.41" stop-color="#e3ff8c"/><stop offset="1" stop-color="#c6ff00"/></linearGradient><linearGradient id="o145" gradientUnits="userSpaceOnUse" x1="1220.3" y1="157.9" x2="1218.3" y2="144.1"><stop offset="0" stop-color="#779e00"/><stop offset="1" stop-color="#729e00"/></linearGradient><linearGradient id="i146" gradientUnits="userSpaceOnUse" x1="1230.4" y1="228.7" x2="1222.6" y2="158.1"><stop offset="0" stop-color="#ffffff"/><stop offset="0.41" stop-color="#e7ff8c"/><stop offset="1" stop-color="#cdff00"/></linearGradient><linearGradient id="o146" gradientUnits="userSpaceOnUse" x1="1222.6" y1="158.1" x2="1221.1" y2="144.4"><stop offset="0" stop-color="#7c9e00"/><stop offset="1" stop-color="#789e00"/></linearGradient><linearGradient id="i147" gradientUnits="userSpaceOnUse" x1="1230.4" y1="228.7" x2="1224.9" y2="158.3"><stop offset="0" stop-color="#ffffff"/><stop offset="0.41" stop-color="#ebff8d"/><stop offset="1" stop-color="#d5ff00"/></linearGradient><linearGradient id="o147" gradientUnits="userSpaceOnUse" x1="1224.9" y1="158.3" x2="1223.8" y2="144.7"><stop offset="0" stop-color="#819e00"/><stop offset="1" stop-color="#7e9e00"/></linearGradient><linearGradient id="i148" gradientUnits="userSpaceOnUse" x1="1230.4" y1="228.7" x2="1227.1" y2="158.6"><stop offset="0" stop-color="#ffffff"/><stop offset="0.41" stop-color="#eeff8d"/><stop offset="1" stop-color="#dcff00"/></linearGradient><linearGradient id="o148" gradientUnits="userSpaceOnUse" x1="1227.1" y1="158.6" x2="1226.4" y2="145.0"><stop offset="0" stop-color="#869e00"/><stop offset="1" stop-color="#839e00"/></linearGradient><linearGradient id="i149" gradientUnits="userSpaceOnUse" x1="1230.4" y1="228.7" x2="1229.3" y2="158.8"><stop offset="0" stop-color="#ffffff"/><stop offset="0.385" stop-color="#f3ff94"/><stop offset="1" stop-color="#e4ff00"/></linearGradient><linearGradient id="o149" gradientUnits="userSpaceOnUse" x1="1229.3" y1="158.8" x2="1229.1" y2="145.3"><stop offset="0" stop-color="#8c9e00"/><stop offset="1" stop-color="#899e00"/></linearGradient><linearGradient id="i150" gradientUnits="userSpaceOnUse" x1="1230.4" y1="228.7" x2="1231.5" y2="159.0"><stop offset="0" stop-color="#ffffff"/><stop offset="0.385" stop-color="#f6ff95"/><stop offset="1" stop-color="#ecff00"/></linearGradient><linearGradient id="o150" gradientUnits="userSpaceOnUse" x1="1231.5" y1="159.0" x2="1231.7" y2="145.6"><stop offset="0" stop-color="#919e00"/><stop offset="1" stop-color="#8f9e00"/></linearGradient><linearGradient id="i151" gradientUnits="userSpaceOnUse" x1="1230.4" y1="228.7" x2="1233.7" y2="159.2"><stop offset="0" stop-color="#ffffff"/><stop offset="0.385" stop-color="#faff95"/><stop offset="1" stop-color="#f3ff00"/></linearGradient><linearGradient id="o151" gradientUnits="userSpaceOnUse" x1="1233.7" y1="159.2" x2="1234.3" y2="145.9"><stop offset="0" stop-color="#969e00"/><stop offset="1" stop-color="#959e00"/></linearGradient><linearGradient id="i152" gradientUnits="userSpaceOnUse" x1="1230.4" y1="228.7" x2="1235.9" y2="159.4"><stop offset="0" stop-color="#ffffff"/><stop offset="0.385" stop-color="#fdff96"/><stop offset="1" stop-color="#fbff00"/></linearGradient><linearGradient id="o152" gradientUnits="userSpaceOnUse" x1="1235.9" y1="159.4" x2="1236.9" y2="146.2"><stop offset="0" stop-color="#9b9e00"/><stop offset="1" stop-color="#9b9e00"/></linearGradient><linearGradient id="i153" gradientUnits="userSpaceOnUse" x1="1230.4" y1="228.7" x2="1238.0" y2="159.6"><stop offset="0" stop-color="#ffffff"/><stop offset="0.385" stop-color="#fffd95"/><stop offset="1" stop-color="#fffb00"/></linearGradient><linearGradient id="o153" gradientUnits="userSpaceOnUse" x1="1238.0" y1="159.6" x2="1239.5" y2="146.4"><stop offset="0" stop-color="#9e9b00"/><stop offset="1" stop-color="#9e9b00"/></linearGradient><linearGradient id="i154" gradientUnits="userSpaceOnUse" x1="1230.4" y1="228.7" x2="1240.2" y2="159.8"><stop offset="0" stop-color="#ffffff"/><stop offset="0.41" stop-color="#fff98d"/><stop offset="1" stop-color="#fff300"/></linearGradient><linearGradient id="o154" gradientUnits="userSpaceOnUse" x1="1240.2" y1="159.8" x2="1242.1" y2="146.7"><stop offset="0" stop-color="#9e9600"/><stop offset="1" stop-color="#9e9500"/></linearGradient><linearGradient id="i155" gradientUnits="userSpaceOnUse" x1="1230.4" y1="228.7" x2="1242.4" y2="160.0"><stop offset="0" stop-color="#ffffff"/><stop offset="0.41" stop-color="#fff68c"/><stop offset="1" stop-color="#ffec00"/></linearGradient><linearGradient id="o155" gradientUnits="userSpaceOnUse" x1="1242.4" y1="160.0" x2="1244.7" y2="147.0"><stop offset="0" stop-color="#9e9100"/><stop offset="1" stop-color="#9e9000"/></linearGradient><linearGradient id="i156" gradientUnits="userSpaceOnUse" x1="1230.4" y1="228.7" x2="1244.6" y2="160.2"><stop offset="0" stop-color="#ffffff"/><stop offset="0.41" stop-color="#fff28a"/><stop offset="1" stop-color="#ffe500"/></linearGradient><linearGradient id="o156" gradientUnits="userSpaceOnUse" x1="1244.6" y1="160.2" x2="1247.2" y2="147.3"><stop offset="0" stop-color="#9e8c00"/><stop offset="1" stop-color="#9e8a00"/></linearGradient><linearGradient id="i157" gradientUnits="userSpaceOnUse" x1="1230.4" y1="228.7" x2="1246.8" y2="160.4"><stop offset="0" stop-color="#ffffff"/><stop offset="0.41" stop-color="#ffef89"/><stop offset="1" stop-color="#ffdf00"/></linearGradient><linearGradient id="o157" gradientUnits="userSpaceOnUse" x1="1246.8" y1="160.4" x2="1249.9" y2="147.6"><stop offset="0" stop-color="#9e8800"/><stop offset="1" stop-color="#9e8500"/></linearGradient><linearGradient id="i158" gradientUnits="userSpaceOnUse" x1="1230.4" y1="228.7" x2="1249.0" y2="160.6"><stop offset="0" stop-color="#ffffff"/><stop offset="0.41" stop-color="#ffec87"/><stop offset="1" stop-color="#ffd800"/></linearGradient><linearGradient id="o158" gradientUnits="userSpaceOnUse" x1="1249.0" y1="160.6" x2="1252.5" y2="147.9"><stop offset="0" stop-color="#9e8400"/><stop offset="1" stop-color="#9e8100"/></linearGradient><linearGradient id="i159" gradientUnits="userSpaceOnUse" x1="1230.4" y1="228.7" x2="1251.3" y2="160.8"><stop offset="0" stop-color="#ffffff"/><stop offset="0.41" stop-color="#ffe886"/><stop offset="1" stop-color="#ffd200"/></linearGradient><linearGradient id="o159" gradientUnits="userSpaceOnUse" x1="1251.3" y1="160.8" x2="1255.2" y2="148.2"><stop offset="0" stop-color="#9e7f00"/><stop offset="1" stop-color="#9e7c00"/></linearGradient><linearGradient id="i160" gradientUnits="userSpaceOnUse" x1="1230.4" y1="228.7" x2="1253.6" y2="161.0"><stop offset="0" stop-color="#ffffff"/><stop offset="0.41" stop-color="#ffe584"/><stop offset="1" stop-color="#ffcc00"/></linearGradient><linearGradient id="o160" gradientUnits="userSpaceOnUse" x1="1253.6" y1="161.0" x2="1257.8" y2="148.6"><stop offset="0" stop-color="#9e7b00"/><stop offset="1" stop-color="#9e7800"/></linearGradient><linearGradient id="i161" gradientUnits="userSpaceOnUse" x1="1230.4" y1="228.7" x2="1255.9" y2="161.3"><stop offset="0" stop-color="#ffffff"/><stop offset="0.205" stop-color="#ffefbc"/><stop offset="0.41" stop-color="#ffe183"/><stop offset="1" stop-color="#ffc600"/></linearGradient><linearGradient id="o161" gradientUnits="userSpaceOnUse" x1="1255.9" y1="161.3" x2="1260.6" y2="148.9"><stop offset="0" stop-color="#9e7700"/><stop offset="1" stop-color="#9e7300"/></linearGradient><linearGradient id="i162" gradientUnits="userSpaceOnUse" x1="1230.4" y1="228.7" x2="1258.3" y2="161.5"><stop offset="0" stop-color="#ffffff"/><stop offset="0.205" stop-color="#ffedba"/><stop offset="0.41" stop-color="#ffde81"/><stop offset="1" stop-color="#ffc000"/></linearGradient><linearGradient id="o162" gradientUnits="userSpaceOnUse" x1="1258.3" y1="161.5" x2="1263.3" y2="149.2"><stop offset="0" stop-color="#9e7300"/><stop offset="1" stop-color="#9e6f00"/></linearGradient><linearGradient id="i163" gradientUnits="userSpaceOnUse" x1="1230.4" y1="228.7" x2="1260.7" y2="161.7"><stop offset="0" stop-color="#ffffff"/><stop offset="0.205" stop-color="#ffebb9"/><stop offset="0.41" stop-color="#ffdb80"/><stop offset="1" stop-color="#ffbb00"/></linearGradient><linearGradient id="o163" gradientUnits="userSpaceOnUse" x1="1260.7" y1="161.7" x2="1266.2" y2="149.5"><stop offset="0" stop-color="#9e7000"/><stop offset="1" stop-color="#9e6b00"/></linearGradient><linearGradient id="i164" gradientUnits="userSpaceOnUse" x1="1230.4" y1="228.7" x2="1263.1" y2="161.9"><stop offset="0" stop-color="#ffffff"/><stop offset="0.205" stop-color="#ffe9b8"/><stop offset="0.41" stop-color="#ffd87f"/><stop offset="1" stop-color="#ffb500"/></linearGradient><linearGradient id="o164" gradientUnits="userSpaceOnUse" x1="1263.1" y1="161.9" x2="1269.0" y2="149.8"><stop offset="0" stop-color="#9e6c00"/><stop offset="1" stop-color="#9e6700"/></linearGradient><linearGradient id="i165" gradientUnits="userSpaceOnUse" x1="1230.4" y1="228.7" x2="1265.6" y2="162.2"><stop offset="0" stop-color="#ffffff"/><stop offset="0.205" stop-color="#ffe7b7"/><stop offset="0.41" stop-color="#ffd47d"/><stop offset="1" stop-color="#ffb000"/></linearGradient><linearGradient id="o165" gradientUnits="userSpaceOnUse" x1="1265.6" y1="162.2" x2="1272.0" y2="150.2"><stop offset="0" stop-color="#9e6800"/><stop offset="1" stop-color="#9e6400"/></linearGradient><linearGradient id="i166" gradientUnits="userSpaceOnUse" x1="1230.4" y1="228.7" x2="1268.2" y2="162.4"><stop offset="0" stop-color="#ffffff"/><stop offset="0.179" stop-color="#ffe8be"/><stop offset="0.41" stop-color="#ffd17c"/><stop offset="1" stop-color="#ffaa00"/></linearGradient><linearGradient id="o166" gradientUnits="userSpaceOnUse" x1="1268.2" y1="162.4" x2="1275.0" y2="150.5"><stop offset="0" stop-color="#9e6500"/><stop offset="1" stop-color="#9e6000"/></linearGradient><linearGradient id="i167" gradientUnits="userSpaceOnUse" x1="1230.4" y1="228.7" x2="1270.9" y2="162.7"><stop offset="0" stop-color="#ffffff"/><stop offset="0.179" stop-color="#ffe6bd"/><stop offset="0.41" stop-color="#ffce7a"/><stop offset="0.641" stop-color="#ffbb45"/><stop offset="1" stop-color="#ffa500"/></linearGradient><linearGradient id="o167" gradientUnits="userSpaceOnUse" x1="1270.9" y1="162.7" x2="1278.1" y2="150.9"><stop offset="0" stop-color="#9e6200"/><stop offset="1" stop-color="#9e5c00"/></linearGradient><linearGradient id="i168" gradientUnits="userSpaceOnUse" x1="1230.4" y1="228.7" x2="1273.6" y2="162.9"><stop offset="0" stop-color="#ffffff"/><stop offset="0.179" stop-color="#ffe4bc"/><stop offset="0.41" stop-color="#ffca79"/><stop offset="0.641" stop-color="#ffb744"/><stop offset="1" stop-color="#ffa000"/></linearGradient><linearGradient id="o168" gradientUnits="userSpaceOnUse" x1="1273.6" y1="162.9" x2="1281.3" y2="151.3"><stop offset="0" stop-color="#9e5e00"/><stop offset="1" stop-color="#9e5900"/></linearGradient><linearGradient id="i169" gradientUnits="userSpaceOnUse" x1="1230.4" y1="228.7" x2="1276.5" y2="163.2"><stop offset="0" stop-color="#ffffff"/><stop offset="0.179" stop-color="#ffe2bb"/><stop offset="0.41" stop-color="#ffc778"/><stop offset="0.641" stop-color="#ffb243"/><stop offset="1" stop-color="#ff9b00"/></linearGradient><linearGradient id="o169" gradientUnits="userSpaceOnUse" x1="1276.5" y1="163.2" x2="1284.6" y2="151.6"><stop offset="0" stop-color="#9e5b00"/><stop offset="1" stop-color="#9e5500"/></linearGradient><linearGradient id="i170" gradientUnits="userSpaceOnUse" x1="1230.4" y1="228.7" x2="1279.4" y2="163.5"><stop offset="0" stop-color="#ffffff"/><stop offset="0.179" stop-color="#ffe1ba"/><stop offset="0.41" stop-color="#ffc476"/><stop offset="0.641" stop-color="#ffae42"/><stop offset="1" stop-color="#ff9600"/></linearGradient><linearGradient id="o170" gradientUnits="userSpaceOnUse" x1="1279.4" y1="163.5" x2="1288.0" y2="152.0"><stop offset="0" stop-color="#9e5800"/><stop offset="1" stop-color="#9e5200"/></linearGradient><linearGradient id="i171" gradientUnits="userSpaceOnUse" x1="1230.4" y1="228.7" x2="1282.5" y2="163.7"><stop offset="0" stop-color="#ffffff"/><stop offset="0.179" stop-color="#ffdfb8"/><stop offset="0.41" stop-color="#ffc075"/><stop offset="0.641" stop-color="#ffaa41"/><stop offset="1" stop-color="#ff9100"/></linearGradient><linearGradient id="o171" gradientUnits="userSpaceOnUse" x1="1282.5" y1="163.7" x2="1291.5" y2="152.4"><stop offset="0" stop-color="#9e5400"/><stop offset="1" stop-color="#9e4f00"/></linearGradient><linearGradient id="i172" gradientUnits="userSpaceOnUse" x1="1230.4" y1="228.7" x2="1285.7" y2="164.0"><stop offset="0" stop-color="#ffffff"/><stop offset="0.179" stop-color="#ffdcb7"/><stop offset="0.41" stop-color="#ffbd73"/><stop offset="0.641" stop-color="#ffa540"/><stop offset="1" stop-color="#ff8c00"/></linearGradient><linearGradient id="o172" gradientUnits="userSpaceOnUse" x1="1285.7" y1="164.0" x2="1295.2" y2="152.9"><stop offset="0" stop-color="#9e5100"/><stop offset="1" stop-color="#9e4b00"/></linearGradient><linearGradient id="i173" gradientUnits="userSpaceOnUse" x1="1230.4" y1="228.7" x2="1289.0" y2="164.4"><stop offset="0" stop-color="#ffffff"/><stop offset="0.179" stop-color="#ffdab6"/><stop offset="0.41" stop-color="#ffb972"/><stop offset="0.641" stop-color="#ffa13f"/><stop offset="1" stop-color="#ff8700"/></linearGradient><linearGradient id="o173" gradientUnits="userSpaceOnUse" x1="1289.0" y1="164.4" x2="1299.0" y2="153.3"><stop offset="0" stop-color="#9e4e00"/><stop offset="1" stop-color="#9e4800"/></linearGradient><linearGradient id="i174" gradientUnits="userSpaceOnUse" x1="1230.4" y1="228.7" x2="1292.5" y2="164.7"><stop offset="0" stop-color="#ffffff"/><stop offset="0.179" stop-color="#ffd8b5"/><stop offset="0.41" stop-color="#ffb570"/><stop offset="0.667" stop-color="#ff9a39"/><stop offset="1" stop-color="#ff8200"/></linearGradient><linearGradient id="o174" gradientUnits="userSpaceOnUse" x1="1292.5" y1="164.7" x2="1303.1" y2="153.8"><stop offset="0" stop-color="#9e4b00"/><stop offset="1" stop-color="#9e4500"/></linearGradient><linearGradient id="i175" gradientUnits="userSpaceOnUse" x1="1230.4" y1="228.7" x2="1296.1" y2="165.0"><stop offset="0" stop-color="#ffffff"/><stop offset="0.179" stop-color="#ffd6b3"/><stop offset="0.385" stop-color="#ffb575"/><stop offset="0.641" stop-color="#ff983d"/><stop offset="1" stop-color="#ff7c00"/></linearGradient><linearGradient id="o175" gradientUnits="userSpaceOnUse" x1="1296.1" y1="165.0" x2="1307.3" y2="154.2"><stop offset="0" stop-color="#9e4700"/><stop offset="1" stop-color="#9e4200"/></linearGradient><linearGradient id="i176" gradientUnits="userSpaceOnUse" x1="1230.4" y1="228.7" x2="1300.0" y2="165.4"><stop offset="0" stop-color="#ffffff"/><stop offset="0.179" stop-color="#ffd4b2"/><stop offset="0.385" stop-color="#ffb173"/><stop offset="0.641" stop-color="#ff943b"/><stop offset="1" stop-color="#ff7700"/></linearGradient><linearGradient id="o176" gradientUnits="userSpaceOnUse" x1="1300.0" y1="165.4" x2="1311.7" y2="154.8"><stop offset="0" stop-color="#9e4400"/><stop offset="1" stop-color="#9e3e00"/></linearGradient><linearGradient id="i177" gradientUnits="userSpaceOnUse" x1="1230.4" y1="228.7" x2="1304.1" y2="165.8"><stop offset="0" stop-color="#ffffff"/><stop offset="0.179" stop-color="#ffd1b0"/><stop offset="0.385" stop-color="#ffae72"/><stop offset="0.641" stop-color="#ff8f3a"/><stop offset="1" stop-color="#ff7200"/></linearGradient><linearGradient id="o177" gradientUnits="userSpaceOnUse" x1="1304.1" y1="165.8" x2="1316.4" y2="155.3"><stop offset="0" stop-color="#9e4100"/><stop offset="1" stop-color="#9e3b00"/></linearGradient><linearGradient id="i178" gradientUnits="userSpaceOnUse" x1="1230.4" y1="228.7" x2="1308.5" y2="166.2"><stop offset="0" stop-color="#ffffff"/><stop offset="0.179" stop-color="#ffcfaf"/><stop offset="0.385" stop-color="#ffaa70"/><stop offset="0.641" stop-color="#ff8a39"/><stop offset="1" stop-color="#ff6d00"/></linearGradient><linearGradient id="o178" gradientUnits="userSpaceOnUse" x1="1308.5" y1="166.2" x2="1321.4" y2="155.9"><stop offset="0" stop-color="#9e3e00"/><stop offset="1" stop-color="#9e3800"/></linearGradient><linearGradient id="i179" gradientUnits="userSpaceOnUse" x1="1230.4" y1="228.7" x2="1313.1" y2="166.6"><stop offset="0" stop-color="#ffffff"/><stop offset="0.179" stop-color="#ffccad"/><stop offset="0.385" stop-color="#ffa66e"/><stop offset="0.641" stop-color="#ff8538"/><stop offset="1" stop-color="#ff6800"/></linearGradient><linearGradient id="o179" gradientUnits="userSpaceOnUse" x1="1313.1" y1="166.6" x2="1326.6" y2="156.5"><stop offset="0" stop-color="#9e3a00"/><stop offset="1" stop-color="#9e3500"/></linearGradient><linearGradient id="i180" gradientUnits="userSpaceOnUse" x1="1230.4" y1="228.7" x2="1318.1" y2="167.1"><stop offset="0" stop-color="#ffffff"/><stop offset="0.179" stop-color="#ffc9ac"/><stop offset="0.385" stop-color="#ffa16c"/><stop offset="0.641" stop-color="#ff8037"/><stop offset="1" stop-color="#ff6300"/></linearGradient><linearGradient id="o180" gradientUnits="userSpaceOnUse" x1="1318.1" y1="167.1" x2="1332.3" y2="157.1"><stop offset="0" stop-color="#9e3700"/><stop offset="1" stop-color="#9e3100"/></linearGradient><linearGradient id="i181" gradientUnits="userSpaceOnUse" x1="1230.4" y1="228.7" x2="1323.5" y2="167.6"><stop offset="0" stop-color="#ffffff"/><stop offset="0.179" stop-color="#ffc6aa"/><stop offset="0.385" stop-color="#ff9d6b"/><stop offset="0.641" stop-color="#ff7b35"/><stop offset="1" stop-color="#ff5d00"/></linearGradient><linearGradient id="o181" gradientUnits="userSpaceOnUse" x1="1323.5" y1="167.6" x2="1338.4" y2="157.8"><stop offset="0" stop-color="#9e3400"/><stop offset="1" stop-color="#9e2e00"/></linearGradient><linearGradient id="i182" gradientUnits="userSpaceOnUse" x1="1230.4" y1="228.7" x2="1329.3" y2="168.1"><stop offset="0" stop-color="#ffffff"/><stop offset="0.077" stop-color="#ffe2d4"/><stop offset="0.179" stop-color="#ffc3a8"/><stop offset="0.385" stop-color="#ff9869"/><stop offset="0.641" stop-color="#ff7634"/><stop offset="1" stop-color="#ff5800"/></linearGradient><linearGradient id="o182" gradientUnits="userSpaceOnUse" x1="1329.3" y1="168.1" x2="1344.9" y2="158.6"><stop offset="0" stop-color="#9e3000"/><stop offset="1" stop-color="#9e2b00"/></linearGradient><linearGradient id="i183" gradientUnits="userSpaceOnUse" x1="1230.4" y1="228.7" x2="1335.6" y2="168.7"><stop offset="0" stop-color="#ffffff"/><stop offset="0.077" stop-color="#ffe0d3"/><stop offset="0.179" stop-color="#ffc0a6"/><stop offset="0.385" stop-color="#ff9466"/><stop offset="0.641" stop-color="#ff7133"/><stop offset="1" stop-color="#ff5200"/></linearGradient><linearGradient id="o183" gradientUnits="userSpaceOnUse" x1="1335.6" y1="168.7" x2="1352.0" y2="159.4"><stop offset="0" stop-color="#9e2d00"/><stop offset="1" stop-color="#9e2800"/></linearGradient><linearGradient id="i184" gradientUnits="userSpaceOnUse" x1="1230.4" y1="228.7" x2="1342.5" y2="169.4"><stop offset="0" stop-color="#ffffff"/><stop offset="0.154" stop-color="#ffc4ae"/><stop offset="0.359" stop-color="#ff936b"/><stop offset="0.615" stop-color="#ff6e35"/><stop offset="1" stop-color="#ff4c00"/></linearGradient><linearGradient id="o184" gradientUnits="userSpaceOnUse" x1="1342.5" y1="169.4" x2="1359.7" y2="160.3"><stop offset="0" stop-color="#9e2a00"/><stop offset="1" stop-color="#9e2400"/></linearGradient><linearGradient id="i185" gradientUnits="userSpaceOnUse" x1="1230.4" y1="228.7" x2="1350.1" y2="170.1"><stop offset="0" stop-color="#ffffff"/><stop offset="0.154" stop-color="#ffc0ac"/><stop offset="0.359" stop-color="#ff8e68"/><stop offset="0.615" stop-color="#ff6834"/><stop offset="1" stop-color="#ff4600"/></linearGradient><linearGradient id="o185" gradientUnits="userSpaceOnUse" x1="1350.1" y1="170.1" x2="1368.2" y2="161.2"><stop offset="0" stop-color="#9e2600"/><stop offset="1" stop-color="#9e2100"/></linearGradient><linearGradient id="i186" gradientUnits="userSpaceOnUse" x1="1230.4" y1="228.7" x2="1358.6" y2="170.9"><stop offset="0" stop-color="#ffffff"/><stop offset="0.077" stop-color="#ffd9cf"/><stop offset="0.154" stop-color="#ffbdaa"/><stop offset="0.359" stop-color="#ff8966"/><stop offset="0.615" stop-color="#ff6232"/><stop offset="1" stop-color="#ff4000"/></linearGradient><linearGradient id="o186" gradientUnits="userSpaceOnUse" x1="1358.6" y1="170.9" x2="1377.5" y2="162.3"><stop offset="0" stop-color="#9e2200"/><stop offset="1" stop-color="#9e1d00"/></linearGradient><linearGradient id="i187" gradientUnits="userSpaceOnUse" x1="1230.4" y1="228.7" x2="1368.0" y2="171.7"><stop offset="0" stop-color="#ffffff"/><stop offset="0.077" stop-color="#ffd7cd"/><stop offset="0.154" stop-color="#ffb9a7"/><stop offset="0.359" stop-color="#ff8363"/><stop offset="0.615" stop-color="#ff5c31"/><stop offset="1" stop-color="#ff3a00"/></linearGradient><linearGradient id="o187" gradientUnits="userSpaceOnUse" x1="1368.0" y1="171.7" x2="1387.9" y2="163.5"><stop offset="0" stop-color="#9e1f00"/><stop offset="1" stop-color="#9e1a00"/></linearGradient><linearGradient id="i188" gradientUnits="userSpaceOnUse" x1="1230.4" y1="228.7" x2="1378.6" y2="172.7"><stop offset="0" stop-color="#ffffff"/><stop offset="0.077" stop-color="#ffd4cb"/><stop offset="0.154" stop-color="#ffb4a4"/><stop offset="0.359" stop-color="#ff7d61"/><stop offset="0.615" stop-color="#ff552f"/><stop offset="1" stop-color="#ff3300"/></linearGradient><linearGradient id="o188" gradientUnits="userSpaceOnUse" x1="1378.6" y1="172.7" x2="1399.5" y2="164.9"><stop offset="0" stop-color="#9e1b00"/><stop offset="1" stop-color="#9e1600"/></linearGradient><linearGradient id="i189" gradientUnits="userSpaceOnUse" x1="1230.4" y1="228.7" x2="1390.7" y2="173.9"><stop offset="0" stop-color="#ffffff"/><stop offset="0.077" stop-color="#ffd1c9"/><stop offset="0.154" stop-color="#ffafa1"/><stop offset="0.333" stop-color="#ff7c64"/><stop offset="0.615" stop-color="#ff4e2d"/><stop offset="1" stop-color="#ff2d00"/></linearGradient><linearGradient id="o189" gradientUnits="userSpaceOnUse" x1="1390.7" y1="173.9" x2="1412.6" y2="166.4"><stop offset="0" stop-color="#9e1700"/><stop offset="1" stop-color="#9e1200"/></linearGradient><linearGradient id="i190" gradientUnits="userSpaceOnUse" x1="1230.4" y1="228.7" x2="1404.5" y2="175.2"><stop offset="0" stop-color="#ffffff"/><stop offset="0.051" stop-color="#ffdcd7"/><stop offset="0.128" stop-color="#ffb5aa"/><stop offset="0.231" stop-color="#ff8f80"/><stop offset="0.333" stop-color="#ff7561"/><stop offset="0.59" stop-color="#ff4a2f"/><stop offset="1" stop-color="#ff2500"/></linearGradient><linearGradient id="o190" gradientUnits="userSpaceOnUse" x1="1404.5" y1="175.2" x2="1427.5" y2="168.1"><stop offset="0" stop-color="#9e1300"/><stop offset="1" stop-color="#9e0f00"/></linearGradient><linearGradient id="i191" gradientUnits="userSpaceOnUse" x1="1230.4" y1="228.7" x2="1420.7" y2="176.7"><stop offset="0" stop-color="#ffffff"/><stop offset="0.051" stop-color="#ffd9d5"/><stop offset="0.128" stop-color="#ffafa7"/><stop offset="0.231" stop-color="#ff897c"/><stop offset="0.333" stop-color="#ff6d5d"/><stop offset="0.59" stop-color="#ff422d"/><stop offset="1" stop-color="#ff1e00"/></linearGradient><linearGradient id="o191" gradientUnits="userSpaceOnUse" x1="1420.7" y1="176.7" x2="1444.8" y2="170.1"><stop offset="0" stop-color="#9e0f00"/><stop offset="1" stop-color="#9e0b00"/></linearGradient><linearGradient id="i192" gradientUnits="userSpaceOnUse" x1="1230.4" y1="228.7" x2="1439.8" y2="178.5"><stop offset="0" stop-color="#ffffff"/><stop offset="0.051" stop-color="#ffd6d3"/><stop offset="0.128" stop-color="#ffa9a3"/><stop offset="0.231" stop-color="#ff8178"/><stop offset="0.333" stop-color="#ff6559"/><stop offset="0.59" stop-color="#ff3a2a"/><stop offset="1" stop-color="#ff1600"/></linearGradient><linearGradient id="o192" gradientUnits="userSpaceOnUse" x1="1439.8" y1="178.5" x2="1465.1" y2="172.4"><stop offset="0" stop-color="#9e0a00"/><stop offset="1" stop-color="#9e0700"/></linearGradient><linearGradient id="i193" gradientUnits="userSpaceOnUse" x1="1230.4" y1="228.7" x2="1462.8" y2="180.6"><stop offset="0" stop-color="#ffffff"/><stop offset="0.051" stop-color="#ffd2d0"/><stop offset="0.128" stop-color="#ffa29e"/><stop offset="0.205" stop-color="#ff817c"/><stop offset="0.308" stop-color="#ff625c"/><stop offset="0.59" stop-color="#ff3128"/><stop offset="1" stop-color="#ff0d00"/></linearGradient><linearGradient id="o193" gradientUnits="userSpaceOnUse" x1="1462.8" y1="180.6" x2="1489.2" y2="175.2"><stop offset="0" stop-color="#9e0600"/><stop offset="1" stop-color="#9e0300"/></linearGradient><linearGradient id="i194" gradientUnits="userSpaceOnUse" x1="1230.4" y1="228.7" x2="1491.0" y2="183.3"><stop offset="0" stop-color="#ffffff"/><stop offset="0.051" stop-color="#ffcdcc"/><stop offset="0.128" stop-color="#ff9a99"/><stop offset="0.205" stop-color="#ff7877"/><stop offset="0.308" stop-color="#ff5857"/><stop offset="0.59" stop-color="#ff2725"/><stop offset="1" stop-color="#ff0300"/></linearGradient><linearGradient id="o194" gradientUnits="userSpaceOnUse" x1="1491.0" y1="183.3" x2="1518.3" y2="178.5"><stop offset="0" stop-color="#9e0100"/><stop offset="1" stop-color="#9e0000"/></linearGradient><linearGradient id="i195" gradientUnits="userSpaceOnUse" x1="1230.4" y1="228.7" x2="1492.2" y2="191.5"><stop offset="0" stop-color="#ffffff"/><stop offset="0.051" stop-color="#ffcccd"/><stop offset="0.128" stop-color="#ff999c"/><stop offset="0.205" stop-color="#ff777a"/><stop offset="0.308" stop-color="#ff575b"/><stop offset="0.59" stop-color="#ff252b"/><stop offset="1" stop-color="#ff0008"/></linearGradient><linearGradient id="o195" gradientUnits="userSpaceOnUse" x1="1492.2" y1="191.5" x2="1554.3" y2="182.7"><stop offset="0" stop-color="#9e0003"/><stop offset="1" stop-color="#9e0000"/></linearGradient><linearGradient id="i196" gradientUnits="userSpaceOnUse" x1="1230.4" y1="228.7" x2="1483.0" y2="200.9"><stop offset="0" stop-color="#ffffff"/><stop offset="0.051" stop-color="#ffced0"/><stop offset="0.128" stop-color="#ff9ba1"/><stop offset="0.205" stop-color="#ff7980"/><stop offset="0.308" stop-color="#ff5962"/><stop offset="0.59" stop-color="#ff2633"/><stop offset="1" stop-color="#ff0012"/></linearGradient><linearGradient id="o196" gradientUnits="userSpaceOnUse" x1="1483.0" y1="200.9" x2="1600.1" y2="187.9"><stop offset="0" stop-color="#9e0008"/><stop offset="1" stop-color="#9e0000"/></linearGradient><linearGradient id="i197" gradientUnits="userSpaceOnUse" x1="1230.4" y1="228.7" x2="1474.5" y2="209.5"><stop offset="0" stop-color="#ffffff"/><stop offset="0.051" stop-color="#ffcfd3"/><stop offset="0.128" stop-color="#ff9da5"/><stop offset="0.205" stop-color="#ff7b86"/><stop offset="0.308" stop-color="#ff5a69"/><stop offset="0.59" stop-color="#ff273b"/><stop offset="1" stop-color="#ff001b"/></linearGradient><linearGradient id="o197" gradientUnits="userSpaceOnUse" x1="1474.5" y1="209.5" x2="1660.7" y2="194.9"><stop offset="0" stop-color="#9e000d"/><stop offset="1" stop-color="#9e0000"/></linearGradient><linearGradient id="i198" gradientUnits="userSpaceOnUse" x1="1230.4" y1="228.7" x2="1466.6" y2="217.6"><stop offset="0" stop-color="#ffffff"/><stop offset="0.051" stop-color="#ffd0d5"/><stop offset="0.128" stop-color="#ff9faa"/><stop offset="0.205" stop-color="#ff7c8c"/><stop offset="0.308" stop-color="#ff5c6f"/><stop offset="0.59" stop-color="#ff2843"/><stop offset="1" stop-color="#ff0023"/></linearGradient><linearGradient id="o198" gradientUnits="userSpaceOnUse" x1="1466.6" y1="217.6" x2="1673.1" y2="207.9"><stop offset="0" stop-color="#9e0012"/><stop offset="1" stop-color="#9e0002"/></linearGradient><linearGradient id="i199" gradientUnits="userSpaceOnUse" x1="1230.4" y1="228.7" x2="1459.2" y2="225.2"><stop offset="0" stop-color="#ffffff"/><stop offset="0.051" stop-color="#ffd1d8"/><stop offset="0.128" stop-color="#ffa0ae"/><stop offset="0.231" stop-color="#ff7589"/><stop offset="0.333" stop-color="#ff5770"/><stop offset="0.59" stop-color="#ff294a"/><stop offset="1" stop-color="#ff002b"/></linearGradient><linearGradient id="o199" gradientUnits="userSpaceOnUse" x1="1459.2" y1="225.2" x2="1659.3" y2="222.0"><stop offset="0" stop-color="#9e0016"/><stop offset="1" stop-color="#9e0007"/></linearGradient>
<linearGradient id="g26" x1="0" y1="0" x2="0" y2="1"><stop offset="0" stop-color="#ff6060"/><stop offset="1" stop-color="#ff4a4a"/></linearGradient>
<linearGradient id="g27" x1="0" y1="0" x2="0" y2="1"><stop offset="0" stop-color="#5cae5c"/><stop offset="1" stop-color="#3a9a3a"/></linearGradient>
<linearGradient id="g28" x1="0" y1="0" x2="1" y2="1"><stop offset="0" stop-color="#5a9400"/><stop offset="0.55" stop-color="#929600"/><stop offset="1" stop-color="#9a6c00"/></linearGradient>
<linearGradient id="g29" x1="0" y1="0" x2="1" y2="1"><stop offset="0" stop-color="#a4ff00"/><stop offset="0.5" stop-color="#ffff10"/><stop offset="1" stop-color="#ffa000"/></linearGradient>
<linearGradient id="g30" x1="0" y1="0" x2="0" y2="1"><stop offset="0" stop-color="#a8a8a8"/><stop offset="0.55" stop-color="#7a7a7a"/><stop offset="1" stop-color="#5c5c5c"/></linearGradient>
<linearGradient id="g31" x1="0" y1="0" x2="0" y2="1"><stop offset="0" stop-color="#a8a8a8"/><stop offset="1" stop-color="#606060"/></linearGradient>
<linearGradient id="g32" x1="0" y1="0" x2="0" y2="1"><stop offset="0" stop-color="#6e6e6e"/><stop offset="1" stop-color="#a0a0a0"/></linearGradient>
<linearGradient id="g33" x1="0" y1="0" x2="0" y2="1"><stop offset="0" stop-color="#b2b2b2"/><stop offset="1" stop-color="#6c6c6c"/></linearGradient>
<linearGradient id="g34" x1="0" y1="0" x2="0" y2="1"><stop offset="0" stop-color="#707070"/><stop offset="1" stop-color="#484848"/></linearGradient>
<linearGradient id="g35" x1="0" y1="0" x2="0" y2="1"><stop offset="0" stop-color="#888"/><stop offset="1" stop-color="#a0a0a0"/></linearGradient>
<linearGradient id="g36" x1="0" y1="0" x2="0" y2="1"><stop offset="0" stop-color="#888"/><stop offset="1" stop-color="#a0a0a0"/></linearGradient>
<linearGradient id="g37" x1="0" y1="0" x2="0" y2="1"><stop offset="0" stop-color="#5a5a5a"/><stop offset="1" stop-color="#707070"/></linearGradient>
<linearGradient id="g38" x1="0" y1="0" x2="0" y2="1"><stop offset="0" stop-color="#888"/><stop offset="1" stop-color="#a0a0a0"/></linearGradient>
<linearGradient id="g39" x1="0" y1="0" x2="0" y2="1"><stop offset="0" stop-color="#888"/><stop offset="1" stop-color="#a0a0a0"/></linearGradient>
<linearGradient id="g40" x1="0" y1="0" x2="0" y2="1"><stop offset="0" stop-color="#b2b2b2"/><stop offset="1" stop-color="#707070"/></linearGradient>
<linearGradient id="g41" x1="0" y1="0" x2="0" y2="1"><stop offset="0" stop-color="#b2b2b2"/><stop offset="1" stop-color="#707070"/></linearGradient>
<linearGradient id="g42" x1="0" y1="0" x2="0" y2="1"><stop offset="0" stop-color="#888"/><stop offset="1" stop-color="#a8a8a8"/></linearGradient>
<linearGradient id="g43" x1="0" y1="0" x2="0" y2="1"><stop offset="0" stop-color="#888"/><stop offset="1" stop-color="#a8a8a8"/></linearGradient></defs>
<rect x="0.0" y="0.0" width="1670.0" height="1007.0" fill="#333333" />
<rect x="0.0" y="0.0" width="1670.0" height="39.3" fill="#232323" />
<rect x="0.0" y="39.0" width="1.0" height="968.0" fill="#5a5a5a" />
<rect x="1.0" y="39.0" width="1.0" height="968.0" fill="#1c1c1c" />
<rect x="1664.0" y="39.0" width="6.0" height="968.0" fill="url(#g1)" />
<path d="M1.5,39 L1.5,6 Q1.5,1.5 6,1.5 L111,1.5 Q115.5,1.5 115.5,6 L115.5,39" fill="url(#g2)" stroke="#8e8e8e" stroke-width="1.2"/>
<line x1="75.0" y1="2.0" x2="75.0" y2="39.0" stroke="#8e8e8e" stroke-width="0.90" />
<circle cx="93.5" cy="22" r="12" fill="url(#g3)"/>
<line x1="90.0" y1="23.5" x2="97.0" y2="23.5" stroke="#a0a0a0" stroke-width="1.10" />
<line x1="93.5" y1="20.0" x2="93.5" y2="27.0" stroke="#a0a0a0" stroke-width="1.10" />
<text x="9.0" y="26.0" font-size="14.53" fill="#e8e8e8" stroke="#e8e8e8" stroke-width="0.18" textLength="58.0" lengthAdjust="spacingAndGlyphs" >History 1</text>
<rect x="1048.0" y="0.0" width="622.0" height="39.0" fill="#1e1e1e" />
<rect x="1056.0" y="1" width="178.0" height="37.5" rx="4" fill="url(#g5)"/>
<path d="M1056.0,38.5 L1056.0,5 Q1056.0,1 1060.0,1 L1063.0,1 L1063.0,38.5 Z" fill="url(#g4)"/>
<circle cx="1165.0" cy="19.5" r="12.5" fill="url(#g6)"/>
<path d="M1158.5,17 L1171.5,17 L1165.0,24 Z" fill="#ffffff"/>
<line x1="1189.0" y1="4.0" x2="1189.0" y2="38.0" stroke="#444" stroke-width="1.50" />
<circle cx="1215" cy="19.5" r="16" fill="#0000e8" stroke="#e8e8ff" stroke-width="1.2"/>
<text x="1215.0" y="23.5" font-size="12.35" fill="#ffffff" stroke="#ffffff" stroke-width="0.18" text-anchor="middle" textLength="18.0" lengthAdjust="spacingAndGlyphs" >700</text>
<text x="1067.1" y="15.0" font-size="12.79" fill="#ececec" stroke="#ececec" stroke-width="0.18" textLength="81.3" lengthAdjust="spacingAndGlyphs" >X-Rite i1Pro 3</text>
<text x="1067.1" y="33.5" font-size="12.79" fill="#ececec" stroke="#ececec" stroke-width="0.18" textLength="69.0" lengthAdjust="spacingAndGlyphs" >Direct View</text>
<rect x="1242.0" y="1" width="162.0" height="37.5" rx="4" fill="url(#g8)"/>
<path d="M1242.0,38.5 L1242.0,5 Q1242.0,1 1246.0,1 L1249.0,1 L1249.0,38.5 Z" fill="url(#g7)"/>
<circle cx="1384.0" cy="19.5" r="12.5" fill="url(#g9)"/>
<path d="M1377.5,17 L1390.5,17 L1384.0,24 Z" fill="#ffffff"/>
<text x="1253.4" y="15.0" font-size="12.79" fill="#ececec" stroke="#ececec" stroke-width="0.18" textLength="79.6" lengthAdjust="spacingAndGlyphs" >Mobile Forge</text>
<rect x="1413.0" y="1" width="178.0" height="37.5" rx="4" fill="url(#g11)"/>
<path d="M1413.0,38.5 L1413.0,5 Q1413.0,1 1417.0,1 L1420.0,1 L1420.0,38.5 Z" fill="url(#g10)"/>
<circle cx="1571.0" cy="19.5" r="12.5" fill="url(#g12)"/>
<path d="M1564.5,17 L1577.5,17 L1571.0,24 Z" fill="#ffffff"/>
<text x="1423.4" y="14.6" font-size="12.79" fill="#ececec" stroke="#ececec" stroke-width="0.18" textLength="131.0" lengthAdjust="spacingAndGlyphs" >Direct Display Control</text>
<rect x="1595.5" y="1.5" width="41.5" height="34" rx="5" fill="url(#g13)" stroke="#a8a8a8" stroke-width="1.2"/>
<circle cx="1616" cy="18.5" r="12.5" fill="url(#g14)"/>
<polygon points="1624.0,16.7 1624.0,20.3 1621.4,20.5 1621.3,20.9 1622.9,22.9 1620.4,25.4 1618.4,23.8 1618.0,23.9 1617.8,26.5 1614.2,26.5 1614.0,23.9 1613.6,23.8 1611.6,25.4 1609.1,22.9 1610.7,20.9 1610.6,20.5 1608.0,20.3 1608.0,16.7 1610.6,16.5 1610.7,16.1 1609.1,14.1 1611.6,11.6 1613.6,13.2 1614.0,13.1 1614.2,10.5 1617.8,10.5 1618.0,13.1 1618.4,13.2 1620.4,11.6 1622.9,14.1 1621.3,16.1 1621.4,16.5" fill="#c8c8c8"/>
<circle cx="1616" cy="18.5" r="3.2" fill="#6a6a6a"/>
<rect x="1638.5" y="1.5" width="40" height="34" rx="5" fill="url(#g15)" stroke="#a8a8a8" stroke-width="1.2"/>
<circle cx="1655" cy="18.5" r="12.5" fill="url(#g16)"/>
<path d="M1650,18.5 L1657,12 L1657,25 Z" fill="#ffffff"/>
<text x="10.0" y="125.8" font-size="39.24" fill="#f2f2f2" stroke="#f2f2f2" stroke-width="0.30" textLength="228.0" lengthAdjust="spacingAndGlyphs" >Color Gamut</text>
<text x="189.6" y="225.3" font-size="13.81" fill="#d4d4d4" stroke="#d4d4d4" stroke-width="0.18" text-anchor="middle" textLength="78.0" lengthAdjust="spacingAndGlyphs" >DeltaE 2000</text>
<rect x="22.0" y="231.0" width="335.0" height="372.0" fill="#252525" stroke="#8c8c8c" stroke-width="1.5"/>
<line x1="66.6" y1="231.0" x2="66.6" y2="608.0" stroke="#8c8c8c" stroke-width="1.50" />
<line x1="111.2" y1="231.0" x2="111.2" y2="608.0" stroke="#8c8c8c" stroke-width="1.50" />
<line x1="155.8" y1="231.0" x2="155.8" y2="608.0" stroke="#8c8c8c" stroke-width="1.50" />
<line x1="200.4" y1="231.0" x2="200.4" y2="608.0" stroke="#8c8c8c" stroke-width="1.50" />
<line x1="245.0" y1="231.0" x2="245.0" y2="608.0" stroke="#8c8c8c" stroke-width="1.50" />
<line x1="289.6" y1="231.0" x2="289.6" y2="608.0" stroke="#8c8c8c" stroke-width="1.50" />
<line x1="334.2" y1="231.0" x2="334.2" y2="608.0" stroke="#8c8c8c" stroke-width="1.50" />
<line x1="22.0" y1="603.0" x2="22.0" y2="608.0" stroke="#e0e0e0" stroke-width="2.00" />
<text x="22.0" y="625.0" font-size="14.53" fill="#d8d8d8" stroke="#d8d8d8" stroke-width="0.18" text-anchor="middle" >0</text>
<text x="66.6" y="625.0" font-size="14.53" fill="#d8d8d8" stroke="#d8d8d8" stroke-width="0.18" text-anchor="middle" >2</text>
<text x="111.2" y="625.0" font-size="14.53" fill="#d8d8d8" stroke="#d8d8d8" stroke-width="0.18" text-anchor="middle" >4</text>
<text x="155.8" y="625.0" font-size="14.53" fill="#d8d8d8" stroke="#d8d8d8" stroke-width="0.18" text-anchor="middle" >6</text>
<text x="200.4" y="625.0" font-size="14.53" fill="#d8d8d8" stroke="#d8d8d8" stroke-width="0.18" text-anchor="middle" >8</text>
<text x="245.0" y="625.0" font-size="14.53" fill="#d8d8d8" stroke="#d8d8d8" stroke-width="0.18" text-anchor="middle" >10</text>
<text x="289.6" y="625.0" font-size="14.53" fill="#d8d8d8" stroke="#d8d8d8" stroke-width="0.18" text-anchor="middle" >12</text>
<text x="334.2" y="625.0" font-size="14.53" fill="#d8d8d8" stroke="#d8d8d8" stroke-width="0.18" text-anchor="middle" >14</text>
<rect x="22.8" y="235.0" width="195.2" height="34.6" fill="url(#g17)"/>
<path d="M22.8,235.0 L218.0,235.0 L218.0,269.6 L22.8,269.6" fill="none" stroke="#000" stroke-width="1.8"/>
<rect x="22.8" y="281.7" width="89.2" height="34.6" fill="url(#g18)"/>
<path d="M22.8,281.7 L112.0,281.7 L112.0,316.3 L22.8,316.3" fill="none" stroke="#000" stroke-width="1.8"/>
<rect x="22.8" y="328.4" width="18.2" height="34.6" fill="url(#g19)"/>
<path d="M22.8,328.4 L41.0,328.4 L41.0,363.0 L22.8,363.0" fill="none" stroke="#000" stroke-width="1.8"/>
<rect x="22.8" y="375.2" width="119.5" height="34.6" fill="url(#g20)"/>
<path d="M22.8,375.2 L142.3,375.2 L142.3,409.8 L22.8,409.8" fill="none" stroke="#000" stroke-width="1.8"/>
<rect x="22.8" y="421.9" width="76.1" height="34.6" fill="url(#g21)"/>
<path d="M22.8,421.9 L98.9,421.9 L98.9,456.5 L22.8,456.5" fill="none" stroke="#000" stroke-width="1.8"/>
<rect x="22.8" y="468.6" width="90.0" height="34.6" fill="url(#g22)"/>
<path d="M22.8,468.6 L112.8,468.6 L112.8,503.2 L22.8,503.2" fill="none" stroke="#000" stroke-width="1.8"/>
<rect x="22.8" y="515.3" width="70.7" height="34.6" fill="url(#g23)"/>
<path d="M22.8,515.3 L93.5,515.3 L93.5,549.9 L22.8,549.9" fill="none" stroke="#000" stroke-width="1.8"/>
<rect x="22.8" y="562.0" width="183.0" height="34.6" fill="url(#g24)"/>
<path d="M22.8,562.0 L205.8,562.0 L205.8,596.6 L22.8,596.6" fill="none" stroke="#000" stroke-width="1.8"/>
<text x="468.9" y="117.5" font-size="15.26" fill="#d4d4d4" stroke="#d4d4d4" stroke-width="0.18" text-anchor="middle" textLength="41.6" lengthAdjust="spacingAndGlyphs" >Delta L</text>
<rect x="409.6" y="122.0" width="144.5" height="316.5" fill="#232323" stroke="#8c8c8c" stroke-width="1.5"/>
<line x1="409.6" y1="122.0" x2="554.1" y2="122.0" stroke="#8c8c8c" stroke-width="1.50" />
<line x1="404.6" y1="122.0" x2="409.6" y2="122.0" stroke="#e0e0e0" stroke-width="1.50" />
<text x="403.4" y="128.0" font-size="13.81" fill="#d8d8d8" stroke="#d8d8d8" stroke-width="0.18" text-anchor="end" textLength="16.1" lengthAdjust="spacingAndGlyphs" >15</text>
<line x1="409.6" y1="176.0" x2="554.1" y2="176.0" stroke="#8c8c8c" stroke-width="1.50" />
<line x1="404.6" y1="176.0" x2="409.6" y2="176.0" stroke="#e0e0e0" stroke-width="1.50" />
<text x="403.4" y="182.0" font-size="13.81" fill="#d8d8d8" stroke="#d8d8d8" stroke-width="0.18" text-anchor="end" textLength="16.1" lengthAdjust="spacingAndGlyphs" >10</text>
<line x1="409.6" y1="228.5" x2="554.1" y2="228.5" stroke="#8c8c8c" stroke-width="1.50" />
<line x1="404.6" y1="228.5" x2="409.6" y2="228.5" stroke="#e0e0e0" stroke-width="1.50" />
<text x="403.4" y="234.5" font-size="13.81" fill="#d8d8d8" stroke="#d8d8d8" stroke-width="0.18" text-anchor="end" textLength="8.1" lengthAdjust="spacingAndGlyphs" >5</text>
<line x1="409.6" y1="281.0" x2="554.1" y2="281.0" stroke="#8c8c8c" stroke-width="1.50" />
<line x1="404.6" y1="281.0" x2="409.6" y2="281.0" stroke="#e0e0e0" stroke-width="1.50" />
<text x="403.4" y="287.0" font-size="13.81" fill="#d8d8d8" stroke="#d8d8d8" stroke-width="0.18" text-anchor="end" textLength="8.1" lengthAdjust="spacingAndGlyphs" >0</text>
<line x1="409.6" y1="334.0" x2="554.1" y2="334.0" stroke="#8c8c8c" stroke-width="1.50" />
<line x1="404.6" y1="334.0" x2="409.6" y2="334.0" stroke="#e0e0e0" stroke-width="1.50" />
<text x="403.4" y="340.0" font-size="13.81" fill="#d8d8d8" stroke="#d8d8d8" stroke-width="0.18" text-anchor="end" textLength="12.9" lengthAdjust="spacingAndGlyphs" >-5</text>
<line x1="409.6" y1="387.0" x2="554.1" y2="387.0" stroke="#8c8c8c" stroke-width="1.50" />
<line x1="404.6" y1="387.0" x2="409.6" y2="387.0" stroke="#e0e0e0" stroke-width="1.50" />
<text x="403.4" y="393.0" font-size="13.81" fill="#d8d8d8" stroke="#d8d8d8" stroke-width="0.18" text-anchor="end" textLength="21.0" lengthAdjust="spacingAndGlyphs" >-10</text>
<line x1="409.6" y1="438.5" x2="554.1" y2="438.5" stroke="#8c8c8c" stroke-width="1.50" />
<line x1="404.6" y1="438.5" x2="409.6" y2="438.5" stroke="#e0e0e0" stroke-width="1.50" />
<text x="403.4" y="444.5" font-size="13.81" fill="#d8d8d8" stroke="#d8d8d8" stroke-width="0.18" text-anchor="end" textLength="21.0" lengthAdjust="spacingAndGlyphs" >-15</text>
<line x1="409.6" y1="438.5" x2="409.6" y2="444.5" stroke="#e0e0e0" stroke-width="1.50" />
<line x1="554.1" y1="438.5" x2="554.1" y2="444.5" stroke="#e0e0e0" stroke-width="1.50" />
<text x="481.9" y="455.3" font-size="15.41" fill="#d8d8d8" stroke="#d8d8d8" stroke-width="0.18" text-anchor="middle" textLength="38.5" lengthAdjust="spacingAndGlyphs" >100W</text>
<line x1="423.6" y1="281.0" x2="540.1" y2="281.0" stroke="#1e1e1e" stroke-width="2.00" />
<text x="666.2" y="117.5" font-size="15.26" fill="#d4d4d4" stroke="#d4d4d4" stroke-width="0.18" text-anchor="middle" textLength="43.8" lengthAdjust="spacingAndGlyphs" >Delta C</text>
<rect x="606.9" y="122.0" width="144.5" height="316.5" fill="#232323" stroke="#8c8c8c" stroke-width="1.5"/>
<line x1="606.9" y1="122.0" x2="751.4" y2="122.0" stroke="#8c8c8c" stroke-width="1.50" />
<line x1="601.9" y1="122.0" x2="606.9" y2="122.0" stroke="#e0e0e0" stroke-width="1.50" />
<text x="600.7" y="128.0" font-size="13.81" fill="#d8d8d8" stroke="#d8d8d8" stroke-width="0.18" text-anchor="end" textLength="16.1" lengthAdjust="spacingAndGlyphs" >15</text>
<line x1="606.9" y1="176.0" x2="751.4" y2="176.0" stroke="#8c8c8c" stroke-width="1.50" />
<line x1="601.9" y1="176.0" x2="606.9" y2="176.0" stroke="#e0e0e0" stroke-width="1.50" />
<text x="600.7" y="182.0" font-size="13.81" fill="#d8d8d8" stroke="#d8d8d8" stroke-width="0.18" text-anchor="end" textLength="16.1" lengthAdjust="spacingAndGlyphs" >10</text>
<line x1="606.9" y1="228.5" x2="751.4" y2="228.5" stroke="#8c8c8c" stroke-width="1.50" />
<line x1="601.9" y1="228.5" x2="606.9" y2="228.5" stroke="#e0e0e0" stroke-width="1.50" />
<text x="600.7" y="234.5" font-size="13.81" fill="#d8d8d8" stroke="#d8d8d8" stroke-width="0.18" text-anchor="end" textLength="8.1" lengthAdjust="spacingAndGlyphs" >5</text>
<line x1="606.9" y1="281.0" x2="751.4" y2="281.0" stroke="#8c8c8c" stroke-width="1.50" />
<line x1="601.9" y1="281.0" x2="606.9" y2="281.0" stroke="#e0e0e0" stroke-width="1.50" />
<text x="600.7" y="287.0" font-size="13.81" fill="#d8d8d8" stroke="#d8d8d8" stroke-width="0.18" text-anchor="end" textLength="8.1" lengthAdjust="spacingAndGlyphs" >0</text>
<line x1="606.9" y1="334.0" x2="751.4" y2="334.0" stroke="#8c8c8c" stroke-width="1.50" />
<line x1="601.9" y1="334.0" x2="606.9" y2="334.0" stroke="#e0e0e0" stroke-width="1.50" />
<text x="600.7" y="340.0" font-size="13.81" fill="#d8d8d8" stroke="#d8d8d8" stroke-width="0.18" text-anchor="end" textLength="12.9" lengthAdjust="spacingAndGlyphs" >-5</text>
<line x1="606.9" y1="387.0" x2="751.4" y2="387.0" stroke="#8c8c8c" stroke-width="1.50" />
<line x1="601.9" y1="387.0" x2="606.9" y2="387.0" stroke="#e0e0e0" stroke-width="1.50" />
<text x="600.7" y="393.0" font-size="13.81" fill="#d8d8d8" stroke="#d8d8d8" stroke-width="0.18" text-anchor="end" textLength="21.0" lengthAdjust="spacingAndGlyphs" >-10</text>
<line x1="606.9" y1="438.5" x2="751.4" y2="438.5" stroke="#8c8c8c" stroke-width="1.50" />
<line x1="601.9" y1="438.5" x2="606.9" y2="438.5" stroke="#e0e0e0" stroke-width="1.50" />
<text x="600.7" y="444.5" font-size="13.81" fill="#d8d8d8" stroke="#d8d8d8" stroke-width="0.18" text-anchor="end" textLength="21.0" lengthAdjust="spacingAndGlyphs" >-15</text>
<line x1="606.9" y1="438.5" x2="606.9" y2="444.5" stroke="#e0e0e0" stroke-width="1.50" />
<line x1="751.4" y1="438.5" x2="751.4" y2="444.5" stroke="#e0e0e0" stroke-width="1.50" />
<text x="679.2" y="455.3" font-size="15.41" fill="#d8d8d8" stroke="#d8d8d8" stroke-width="0.18" text-anchor="middle" textLength="38.5" lengthAdjust="spacingAndGlyphs" >100W</text>
<rect x="621.7" y="190.8" width="115.1" height="90.5" fill="url(#g25)" stroke="#000" stroke-width="2.2"/>
<text x="863.5" y="117.5" font-size="15.26" fill="#d4d4d4" stroke="#d4d4d4" stroke-width="0.18" text-anchor="middle" textLength="43.8" lengthAdjust="spacingAndGlyphs" >Delta H</text>
<rect x="804.2" y="122.0" width="144.5" height="316.5" fill="#232323" stroke="#8c8c8c" stroke-width="1.5"/>
<line x1="804.2" y1="122.0" x2="948.7" y2="122.0" stroke="#8c8c8c" stroke-width="1.50" />
<line x1="799.2" y1="122.0" x2="804.2" y2="122.0" stroke="#e0e0e0" stroke-width="1.50" />
<text x="798.0" y="128.0" font-size="13.81" fill="#d8d8d8" stroke="#d8d8d8" stroke-width="0.18" text-anchor="end" textLength="16.1" lengthAdjust="spacingAndGlyphs" >15</text>
<line x1="804.2" y1="176.0" x2="948.7" y2="176.0" stroke="#8c8c8c" stroke-width="1.50" />
<line x1="799.2" y1="176.0" x2="804.2" y2="176.0" stroke="#e0e0e0" stroke-width="1.50" />
<text x="798.0" y="182.0" font-size="13.81" fill="#d8d8d8" stroke="#d8d8d8" stroke-width="0.18" text-anchor="end" textLength="16.1" lengthAdjust="spacingAndGlyphs" >10</text>
<line x1="804.2" y1="228.5" x2="948.7" y2="228.5" stroke="#8c8c8c" stroke-width="1.50" />
<line x1="799.2" y1="228.5" x2="804.2" y2="228.5" stroke="#e0e0e0" stroke-width="1.50" />
<text x="798.0" y="234.5" font-size="13.81" fill="#d8d8d8" stroke="#d8d8d8" stroke-width="0.18" text-anchor="end" textLength="8.1" lengthAdjust="spacingAndGlyphs" >5</text>
<line x1="804.2" y1="281.0" x2="948.7" y2="281.0" stroke="#8c8c8c" stroke-width="1.50" />
<line x1="799.2" y1="281.0" x2="804.2" y2="281.0" stroke="#e0e0e0" stroke-width="1.50" />
<text x="798.0" y="287.0" font-size="13.81" fill="#d8d8d8" stroke="#d8d8d8" stroke-width="0.18" text-anchor="end" textLength="8.1" lengthAdjust="spacingAndGlyphs" >0</text>
<line x1="804.2" y1="334.0" x2="948.7" y2="334.0" stroke="#8c8c8c" stroke-width="1.50" />
<line x1="799.2" y1="334.0" x2="804.2" y2="334.0" stroke="#e0e0e0" stroke-width="1.50" />
<text x="798.0" y="340.0" font-size="13.81" fill="#d8d8d8" stroke="#d8d8d8" stroke-width="0.18" text-anchor="end" textLength="12.9" lengthAdjust="spacingAndGlyphs" >-5</text>
<line x1="804.2" y1="387.0" x2="948.7" y2="387.0" stroke="#8c8c8c" stroke-width="1.50" />
<line x1="799.2" y1="387.0" x2="804.2" y2="387.0" stroke="#e0e0e0" stroke-width="1.50" />
<text x="798.0" y="393.0" font-size="13.81" fill="#d8d8d8" stroke="#d8d8d8" stroke-width="0.18" text-anchor="end" textLength="21.0" lengthAdjust="spacingAndGlyphs" >-10</text>
<line x1="804.2" y1="438.5" x2="948.7" y2="438.5" stroke="#8c8c8c" stroke-width="1.50" />
<line x1="799.2" y1="438.5" x2="804.2" y2="438.5" stroke="#e0e0e0" stroke-width="1.50" />
<text x="798.0" y="444.5" font-size="13.81" fill="#d8d8d8" stroke="#d8d8d8" stroke-width="0.18" text-anchor="end" textLength="21.0" lengthAdjust="spacingAndGlyphs" >-15</text>
<line x1="804.2" y1="438.5" x2="804.2" y2="444.5" stroke="#e0e0e0" stroke-width="1.50" />
<line x1="948.7" y1="438.5" x2="948.7" y2="444.5" stroke="#e0e0e0" stroke-width="1.50" />
<text x="876.5" y="455.3" font-size="15.41" fill="#d8d8d8" stroke="#d8d8d8" stroke-width="0.18" text-anchor="middle" textLength="38.5" lengthAdjust="spacingAndGlyphs" >100W</text>
<line x1="818.2" y1="281.0" x2="934.7" y2="281.0" stroke="#1e1e1e" stroke-width="2.00" />
<rect x="377.0" y="471.5" width="593.0" height="163.0" fill="#000000" />
<rect x="394.3" y="479.5" width="61.3" height="65.5" fill="#bcc4ba" />
<rect x="394.3" y="545.0" width="61.3" height="65.3" fill="#c0c0c0" />
<rect x="394.3" y="479.5" width="61.3" height="130.8" fill="none" stroke="#ececec" stroke-width="1.6"/>
<text x="424.9" y="626.2" font-size="14.24" fill="#f0f0f0" stroke="#f0f0f0" stroke-width="0.18" text-anchor="middle" textLength="31.3" lengthAdjust="spacingAndGlyphs" >White</text>
<rect x="466.6" y="479.5" width="61.3" height="65.5" fill="#c41400" />
<rect x="466.6" y="545.0" width="61.3" height="65.3" fill="#c0161a" />
<rect x="466.6" y="479.5" width="61.3" height="130.8" fill="none" stroke="#ececec" stroke-width="1.6"/>
<text x="497.3" y="626.2" font-size="14.24" fill="#f0f0f0" stroke="#f0f0f0" stroke-width="0.18" text-anchor="middle" textLength="22.5" lengthAdjust="spacingAndGlyphs" >Red</text>
<rect x="538.9" y="479.5" width="61.3" height="65.5" fill="#00c400" />
<rect x="538.9" y="545.0" width="61.3" height="65.3" fill="#3cbe4a" />
<rect x="538.9" y="479.5" width="61.3" height="130.8" fill="none" stroke="#ececec" stroke-width="1.6"/>
<text x="569.6" y="626.2" font-size="14.24" fill="#f0f0f0" stroke="#f0f0f0" stroke-width="0.18" text-anchor="middle" textLength="34.0" lengthAdjust="spacingAndGlyphs" >Green</text>
<rect x="611.3" y="479.5" width="61.3" height="65.5" fill="#0020c0" />
<rect x="611.3" y="545.0" width="61.3" height="65.3" fill="#0a0cbe" />
<rect x="611.3" y="479.5" width="61.3" height="130.8" fill="none" stroke="#ececec" stroke-width="1.6"/>
<text x="641.9" y="626.2" font-size="14.24" fill="#f0f0f0" stroke="#f0f0f0" stroke-width="0.18" text-anchor="middle" textLength="24.5" lengthAdjust="spacingAndGlyphs" >Blue</text>
<rect x="683.6" y="479.5" width="61.3" height="65.5" fill="#00c8c0" />
<rect x="683.6" y="545.0" width="61.3" height="65.3" fill="#5ec2ae" />
<rect x="683.6" y="479.5" width="61.3" height="130.8" fill="none" stroke="#ececec" stroke-width="1.6"/>
<text x="714.2" y="626.2" font-size="14.24" fill="#f0f0f0" stroke="#f0f0f0" stroke-width="0.18" text-anchor="middle" textLength="28.6" lengthAdjust="spacingAndGlyphs" >Cyan</text>
<rect x="755.9" y="479.5" width="61.3" height="65.5" fill="#bc1cbc" />
<rect x="755.9" y="545.0" width="61.3" height="65.3" fill="#c000c0" />
<rect x="755.9" y="479.5" width="61.3" height="130.8" fill="none" stroke="#ececec" stroke-width="1.6"/>
<text x="786.5" y="626.2" font-size="14.24" fill="#f0f0f0" stroke="#f0f0f0" stroke-width="0.18" text-anchor="middle" textLength="47.7" lengthAdjust="spacingAndGlyphs" >Magenta</text>
<rect x="828.2" y="479.5" width="61.3" height="65.5" fill="#c4c400" />
<rect x="828.2" y="545.0" width="61.3" height="65.3" fill="#c4c050" />
<rect x="828.2" y="479.5" width="61.3" height="130.8" fill="none" stroke="#ececec" stroke-width="1.6"/>
<text x="858.9" y="626.2" font-size="14.24" fill="#f0f0f0" stroke="#f0f0f0" stroke-width="0.18" text-anchor="middle" textLength="35.0" lengthAdjust="spacingAndGlyphs" >Yellow</text>
<rect x="900.5" y="479.5" width="61.3" height="65.5" fill="#f4fff0" />
<rect x="900.5" y="545.0" width="61.3" height="65.3" fill="#f8f8f8" />
<rect x="900.5" y="479.5" width="61.3" height="130.8" fill="none" stroke="#ececec" stroke-width="1.6"/>
<text x="931.2" y="626.2" font-size="14.24" fill="#f0f0f0" stroke="#f0f0f0" stroke-width="0.18" text-anchor="middle" textLength="32.0" lengthAdjust="spacingAndGlyphs" >100W</text>
<text x="0" y="0" font-size="13" fill="#f0f0f0" text-anchor="middle" transform="translate(389.5,507.7) rotate(-90)" textLength="34" lengthAdjust="spacingAndGlyphs">Actual</text>
<text x="0" y="0" font-size="13" fill="#f0f0f0" text-anchor="middle" transform="translate(389.5,581.7) rotate(-90)" textLength="34" lengthAdjust="spacingAndGlyphs">Target</text>
<rect x="975.0" y="90.0" width="695.0" height="558.0" fill="#1c1c1c" />
<rect x="982.0" y="97.0" width="680.0" height="544.0" fill="#333333" />
<text x="1322.5" y="114.0" font-size="13.08" fill="#d4d4d4" stroke="#d4d4d4" stroke-width="0.18" text-anchor="middle" textLength="85.0" lengthAdjust="spacingAndGlyphs" >CIE 1976 u'v'</text>
<rect x="1020.0" y="120.0" width="640.0" height="492.3" fill="#242424" stroke="#9a9a9a" stroke-width="1.5"/>
<g clip-path="url(#cPlot)" shape-rendering="crispEdges"><g clip-path="url(#cLoc)"><polygon points="1230.4,228.7 2130.4,225.1 2129.8,260.6" fill="url(#o0)"/><polygon points="1230.4,228.7 2130.1,253.4 2128.4,288.8" fill="url(#o1)"/><polygon points="1230.4,228.7 2128.8,281.7 2126.1,317.0" fill="url(#o2)"/><polygon points="1230.4,228.7 2126.7,309.9 2122.8,345.1" fill="url(#o3)"/><polygon points="1230.4,228.7 2123.7,338.0 2118.7,373.1" fill="url(#o4)"/><polygon points="1230.4,228.7 2119.9,366.0 2113.8,400.9" fill="url(#o5)"/><polygon points="1230.4,228.7 2115.1,393.9 2107.9,428.6" fill="url(#o6)"/><polygon points="1230.4,228.7 2109.5,421.6 2101.2,456.1" fill="url(#o7)"/><polygon points="1230.4,228.7 2103.0,449.1 2093.6,483.3" fill="url(#o8)"/><polygon points="1230.4,228.7 2095.7,476.4 2085.2,510.3" fill="url(#o9)"/><polygon points="1230.4,228.7 2087.4,503.4 2076.0,537.0" fill="url(#o10)"/><polygon points="1230.4,228.7 2078.4,530.2 2065.9,563.4" fill="url(#o11)"/><polygon points="1230.4,228.7 2068.5,556.7 2054.9,589.5" fill="url(#o12)"/><polygon points="1230.4,228.7 2057.8,582.9 2043.2,615.2" fill="url(#o13)"/><polygon points="1230.4,228.7 2046.3,608.7 2030.7,640.5" fill="url(#o14)"/><polygon points="1230.4,228.7 2033.9,634.1 2017.3,665.5" fill="url(#o15)"/><polygon points="1230.4,228.7 2020.8,659.2 2003.2,690.0" fill="url(#o16)"/><polygon points="1230.4,228.7 2006.9,683.8 1988.4,714.0" fill="url(#o17)"/><polygon points="1230.4,228.7 1992.2,707.9 1972.7,737.6" fill="url(#o18)"/><polygon points="1230.4,228.7 1976.8,731.6 1956.4,760.7" fill="url(#o19)"/><polygon points="1230.4,228.7 1960.6,754.8 1939.3,783.2" fill="url(#o20)"/><polygon points="1230.4,228.7 1943.7,777.5 1921.6,805.2" fill="url(#o21)"/><polygon points="1230.4,228.7 1926.1,799.6 1903.1,826.6" fill="url(#o22)"/><polygon points="1230.4,228.7 1907.9,821.2 1884.0,847.5" fill="url(#o23)"/><polygon points="1230.4,228.7 1888.9,842.2 1864.2,867.7" fill="url(#o24)"/><polygon points="1230.4,228.7 1869.3,862.6 1843.9,887.3" fill="url(#o25)"/><polygon points="1230.4,228.7 1849.1,882.3 1822.9,906.2" fill="url(#o26)"/><polygon points="1230.4,228.7 1828.3,901.5 1801.3,924.5" fill="url(#o27)"/><polygon points="1230.4,228.7 1806.8,919.9 1779.2,942.1" fill="url(#o28)"/><polygon points="1230.4,228.7 1784.8,937.7 1756.5,959.0" fill="url(#o29)"/><polygon points="1230.4,228.7 1762.3,954.7 1733.3,975.1" fill="url(#o30)"/><polygon points="1230.4,228.7 1739.2,971.1 1709.6,990.6" fill="url(#o31)"/><polygon points="1230.4,228.7 1715.7,986.7 1685.4,1005.2" fill="url(#o32)"/><polygon points="1230.4,228.7 1691.6,1001.6 1660.8,1019.1" fill="url(#o33)"/><polygon points="1230.4,228.7 1667.1,1015.7 1635.8,1032.3" fill="url(#o34)"/><polygon points="1230.4,228.7 1642.2,1029.0 1610.3,1044.6" fill="url(#o35)"/><polygon points="1230.4,228.7 1616.8,1041.6 1584.5,1056.1" fill="url(#o36)"/><polygon points="1230.4,228.7 1591.1,1053.3 1558.4,1066.9" fill="url(#o37)"/><polygon points="1230.4,228.7 1565.0,1064.2 1531.9,1076.8" fill="url(#o38)"/><polygon points="1230.4,228.7 1538.6,1074.3 1505.1,1085.8" fill="url(#o39)"/><polygon points="1230.4,228.7 1511.9,1083.6 1478.0,1094.0" fill="url(#o40)"/><polygon points="1230.4,228.7 1484.9,1092.0 1450.7,1101.4" fill="url(#o41)"/><polygon points="1230.4,228.7 1457.7,1099.6 1423.2,1107.8" fill="url(#o42)"/><polygon points="1230.4,228.7 1430.2,1106.3 1395.5,1113.5" fill="url(#o43)"/><polygon points="1230.4,228.7 1402.6,1112.1 1367.6,1118.2" fill="url(#o44)"/><polygon points="1230.4,228.7 1374.7,1117.1 1339.6,1122.1" fill="url(#o45)"/><polygon points="1230.4,228.7 1346.8,1121.2 1311.5,1125.1" fill="url(#o46)"/><polygon points="1230.4,228.7 1318.7,1124.4 1283.3,1127.2" fill="url(#o47)"/><polygon points="1230.4,228.7 1290.5,1126.7 1255.1,1128.4" fill="url(#o48)"/><polygon points="1230.4,228.7 1262.3,1128.2 1226.8,1128.7" fill="url(#o49)"/><polygon points="1230.4,228.7 1234.0,1128.7 1198.5,1128.2" fill="url(#o50)"/><polygon points="1230.4,228.7 1205.7,1128.4 1170.3,1126.7" fill="url(#o51)"/><polygon points="1230.4,228.7 1177.5,1127.2 1142.1,1124.4" fill="url(#o52)"/><polygon points="1230.4,228.7 1149.3,1125.1 1114.0,1121.2" fill="url(#o53)"/><polygon points="1230.4,228.7 1121.2,1122.1 1086.0,1117.1" fill="url(#o54)"/><polygon points="1230.4,228.7 1093.2,1118.2 1058.2,1112.1" fill="url(#o55)"/><polygon points="1230.4,228.7 1065.3,1113.5 1030.6,1106.3" fill="url(#o56)"/><polygon points="1230.4,228.7 1037.6,1107.8 1003.1,1099.6" fill="url(#o57)"/><polygon points="1230.4,228.7 1010.1,1101.4 975.8,1092.0" fill="url(#o58)"/><polygon points="1230.4,228.7 982.8,1094.0 948.9,1083.6" fill="url(#o59)"/><polygon points="1230.4,228.7 955.7,1085.8 922.1,1074.3" fill="url(#o60)"/><polygon points="1230.4,228.7 928.9,1076.8 895.7,1064.2" fill="url(#o61)"/><polygon points="1230.4,228.7 902.4,1066.9 869.7,1053.3" fill="url(#o62)"/><polygon points="1230.4,228.7 876.3,1056.1 843.9,1041.6" fill="url(#o63)"/><polygon points="1230.4,228.7 850.5,1044.6 818.6,1029.0" fill="url(#o64)"/><polygon points="1230.4,228.7 825.0,1032.3 793.7,1015.7" fill="url(#o65)"/><polygon points="1230.4,228.7 800.0,1019.1 769.2,1001.6" fill="url(#o66)"/><polygon points="1230.4,228.7 775.4,1005.2 745.1,986.7" fill="url(#o67)"/><polygon points="1230.4,228.7 751.2,990.6 721.5,971.1" fill="url(#o68)"/><polygon points="1230.4,228.7 727.5,975.1 698.5,954.7" fill="url(#o69)"/><polygon points="1230.4,228.7 704.3,959.0 675.9,937.7" fill="url(#o70)"/><polygon points="1230.4,228.7 681.6,942.1 653.9,919.9" fill="url(#o71)"/><polygon points="1230.4,228.7 659.5,924.5 632.5,901.5" fill="url(#o72)"/><polygon points="1230.4,228.7 637.9,906.2 611.7,882.3" fill="url(#o73)"/><polygon points="1230.4,228.7 616.9,887.3 591.5,862.6" fill="url(#o74)"/><polygon points="1230.4,228.7 596.5,867.7 571.9,842.2" fill="url(#o75)"/><polygon points="1230.4,228.7 576.8,847.5 552.9,821.2" fill="url(#o76)"/><polygon points="1230.4,228.7 557.7,826.6 534.6,799.6" fill="url(#o77)"/><polygon points="1230.4,228.7 539.2,805.2 517.1,777.5" fill="url(#o78)"/><polygon points="1230.4,228.7 521.5,783.2 500.2,754.8" fill="url(#o79)"/><polygon points="1230.4,228.7 504.4,760.7 484.0,731.6" fill="url(#o80)"/><polygon points="1230.4,228.7 488.0,737.6 468.6,707.9" fill="url(#o81)"/><polygon points="1230.4,228.7 472.4,714.0 453.9,683.8" fill="url(#o82)"/><polygon points="1230.4,228.7 457.6,690.0 440.0,659.2" fill="url(#o83)"/><polygon points="1230.4,228.7 443.5,665.5 426.9,634.1" fill="url(#o84)"/><polygon points="1230.4,228.7 430.1,640.5 414.5,608.7" fill="url(#o85)"/><polygon points="1230.4,228.7 417.6,615.2 403.0,582.9" fill="url(#o86)"/><polygon points="1230.4,228.7 405.8,589.5 392.3,556.7" fill="url(#o87)"/><polygon points="1230.4,228.7 394.9,563.4 382.4,530.2" fill="url(#o88)"/><polygon points="1230.4,228.7 384.8,537.0 373.3,503.4" fill="url(#o89)"/><polygon points="1230.4,228.7 375.6,510.3 365.1,476.4" fill="url(#o90)"/><polygon points="1230.4,228.7 367.1,483.3 357.8,449.1" fill="url(#o91)"/><polygon points="1230.4,228.7 359.6,456.1 351.3,421.6" fill="url(#o92)"/><polygon points="1230.4,228.7 352.9,428.6 345.7,393.9" fill="url(#o93)"/><polygon points="1230.4,228.7 347.0,400.9 340.9,366.0" fill="url(#o94)"/><polygon points="1230.4,228.7 342.0,373.1 337.0,338.0" fill="url(#o95)"/><polygon points="1230.4,228.7 337.9,345.1 334.1,309.9" fill="url(#o96)"/><polygon points="1230.4,228.7 334.7,317.0 331.9,281.7" fill="url(#o97)"/><polygon points="1230.4,228.7 332.4,288.8 330.7,253.4" fill="url(#o98)"/><polygon points="1230.4,228.7 331.0,260.6 330.4,225.1" fill="url(#o99)"/><polygon points="1230.4,228.7 330.4,232.3 331.0,196.9" fill="url(#o100)"/><polygon points="1230.4,228.7 330.7,204.1 332.4,168.6" fill="url(#o101)"/><polygon points="1230.4,228.7 331.9,175.8 334.7,140.5" fill="url(#o102)"/><polygon points="1230.4,228.7 334.1,147.6 337.9,112.4" fill="url(#o103)"/><polygon points="1230.4,228.7 337.0,119.5 342.0,84.4" fill="url(#o104)"/><polygon points="1230.4,228.7 340.9,91.5 347.0,56.6" fill="url(#o105)"/><polygon points="1230.4,228.7 345.7,63.6 352.9,28.9" fill="url(#o106)"/><polygon points="1230.4,228.7 351.3,35.9 359.6,1.4" fill="url(#o107)"/><polygon points="1230.4,228.7 357.8,8.4 367.1,-25.8" fill="url(#o108)"/><polygon points="1230.4,228.7 365.1,-18.9 375.6,-52.8" fill="url(#o109)"/><polygon points="1230.4,228.7 373.3,-45.9 384.8,-79.5" fill="url(#o110)"/><polygon points="1230.4,228.7 382.4,-72.7 394.9,-105.9" fill="url(#o111)"/><polygon points="1230.4,228.7 392.3,-99.2 405.8,-132.0" fill="url(#o112)"/><polygon points="1230.4,228.7 403.0,-125.4 417.6,-157.7" fill="url(#o113)"/><polygon points="1230.4,228.7 414.5,-151.2 430.1,-183.0" fill="url(#o114)"/><polygon points="1230.4,228.7 426.9,-176.6 443.5,-208.0" fill="url(#o115)"/><polygon points="1230.4,228.7 440.0,-201.7 457.6,-232.5" fill="url(#o116)"/><polygon points="1230.4,228.7 453.9,-226.3 472.4,-256.5" fill="url(#o117)"/><polygon points="1230.4,228.7 468.6,-250.5 488.0,-280.1" fill="url(#o118)"/><polygon points="1230.4,228.7 484.0,-274.1 504.4,-303.2" fill="url(#o119)"/><polygon points="1230.4,228.7 500.2,-297.3 521.5,-325.7" fill="url(#o120)"/><polygon points="1230.4,228.7 517.1,-320.0 539.2,-347.7" fill="url(#o121)"/><polygon points="1230.4,228.7 534.6,-342.2 557.7,-369.1" fill="url(#o122)"/><polygon points="1230.4,228.7 552.9,-363.7 576.8,-390.0" fill="url(#o123)"/><polygon points="1230.4,228.7 571.9,-384.7 596.5,-410.2" fill="url(#o124)"/><polygon points="1230.4,228.7 591.5,-405.1 616.9,-429.8" fill="url(#o125)"/><polygon points="1230.4,228.7 611.7,-424.9 637.9,-448.7" fill="url(#o126)"/><polygon points="1230.4,228.7 632.5,-444.0 659.5,-467.0" fill="url(#o127)"/><polygon points="1230.4,228.7 653.9,-462.4 681.6,-484.6" fill="url(#o128)"/><polygon points="1230.4,228.7 675.9,-480.2 704.3,-501.5" fill="url(#o129)"/><polygon points="1230.4,228.7 698.5,-497.2 727.5,-517.6" fill="url(#o130)"/><polygon points="1230.4,228.7 721.5,-513.6 751.2,-533.1" fill="url(#o131)"/><polygon points="1230.4,228.7 745.1,-529.2 775.4,-547.7" fill="url(#o132)"/><polygon points="1230.4,228.7 769.2,-544.1 800.0,-561.7" fill="url(#o133)"/><polygon points="1230.4,228.7 793.7,-558.2 825.0,-574.8" fill="url(#o134)"/><polygon points="1230.4,228.7 818.6,-571.5 850.5,-587.1" fill="url(#o135)"/><polygon points="1230.4,228.7 843.9,-584.1 876.3,-598.7" fill="url(#o136)"/><polygon points="1230.4,228.7 869.7,-595.8 902.4,-609.4" fill="url(#o137)"/><polygon points="1230.4,228.7 895.7,-606.7 928.9,-619.3" fill="url(#o138)"/><polygon points="1230.4,228.7 922.1,-616.8 955.7,-628.3" fill="url(#o139)"/><polygon points="1230.4,228.7 948.9,-626.1 982.8,-636.5" fill="url(#o140)"/><polygon points="1230.4,228.7 975.8,-634.5 1010.1,-643.9" fill="url(#o141)"/><polygon points="1230.4,228.7 1003.1,-642.1 1037.6,-650.4" fill="url(#o142)"/><polygon points="1230.4,228.7 1030.6,-648.8 1065.3,-656.0" fill="url(#o143)"/><polygon points="1230.4,228.7 1058.2,-654.6 1093.2,-660.7" fill="url(#o144)"/><polygon points="1230.4,228.7 1086.0,-659.6 1121.2,-664.6" fill="url(#o145)"/><polygon points="1230.4,228.7 1114.0,-663.7 1149.3,-667.6" fill="url(#o146)"/><polygon points="1230.4,228.7 1142.1,-666.9 1177.5,-669.7" fill="url(#o147)"/><polygon points="1230.4,228.7 1170.3,-669.2 1205.7,-670.9" fill="url(#o148)"/><polygon points="1230.4,228.7 1198.5,-670.7 1234.0,-671.2" fill="url(#o149)"/><polygon points="1230.4,228.7 1226.8,-671.2 1262.3,-670.7" fill="url(#o150)"/><polygon points="1230.4,228.7 1255.1,-670.9 1290.5,-669.2" fill="url(#o151)"/><polygon points="1230.4,228.7 1283.3,-669.7 1318.7,-666.9" fill="url(#o152)"/><polygon points="1230.4,228.7 1311.5,-667.6 1346.8,-663.7" fill="url(#o153)"/><polygon points="1230.4,228.7 1339.6,-664.6 1374.7,-659.6" fill="url(#o154)"/><polygon points="1230.4,228.7 1367.6,-660.7 1402.6,-654.6" fill="url(#o155)"/><polygon points="1230.4,228.7 1395.5,-656.0 1430.2,-648.8" fill="url(#o156)"/><polygon points="1230.4,228.7 1423.2,-650.4 1457.7,-642.1" fill="url(#o157)"/><polygon points="1230.4,228.7 1450.7,-643.9 1484.9,-634.5" fill="url(#o158)"/><polygon points="1230.4,228.7 1478.0,-636.5 1511.9,-626.1" fill="url(#o159)"/><polygon points="1230.4,228.7 1505.1,-628.3 1538.6,-616.8" fill="url(#o160)"/><polygon points="1230.4,228.7 1531.9,-619.3 1565.0,-606.7" fill="url(#o161)"/><polygon points="1230.4,228.7 1558.4,-609.4 1591.1,-595.8" fill="url(#o162)"/><polygon points="1230.4,228.7 1584.5,-598.7 1616.8,-584.1" fill="url(#o163)"/><polygon points="1230.4,228.7 1610.3,-587.1 1642.2,-571.5" fill="url(#o164)"/><polygon points="1230.4,228.7 1635.8,-574.8 1667.1,-558.2" fill="url(#o165)"/><polygon points="1230.4,228.7 1660.8,-561.7 1691.6,-544.1" fill="url(#o166)"/><polygon points="1230.4,228.7 1685.4,-547.7 1715.7,-529.2" fill="url(#o167)"/><polygon points="1230.4,228.7 1709.6,-533.1 1739.2,-513.6" fill="url(#o168)"/><polygon points="1230.4,228.7 1733.3,-517.6 1762.3,-497.2" fill="url(#o169)"/><polygon points="1230.4,228.7 1756.5,-501.5 1784.8,-480.2" fill="url(#o170)"/><polygon points="1230.4,228.7 1779.2,-484.6 1806.8,-462.4" fill="url(#o171)"/><polygon points="1230.4,228.7 1801.3,-467.0 1828.3,-444.0" fill="url(#o172)"/><polygon points="1230.4,228.7 1822.9,-448.7 1849.1,-424.9" fill="url(#o173)"/><polygon points="1230.4,228.7 1843.9,-429.8 1869.3,-405.1" fill="url(#o174)"/><polygon points="1230.4,228.7 1864.2,-410.2 1888.9,-384.7" fill="url(#o175)"/><polygon points="1230.4,228.7 1884.0,-390.0 1907.9,-363.7" fill="url(#o176)"/><polygon points="1230.4,228.7 1903.1,-369.1 1926.1,-342.2" fill="url(#o177)"/><polygon points="1230.4,228.7 1921.6,-347.7 1943.7,-320.0" fill="url(#o178)"/><polygon points="1230.4,228.7 1939.3,-325.7 1960.6,-297.3" fill="url(#o179)"/><polygon points="1230.4,228.7 1956.4,-303.2 1976.8,-274.1" fill="url(#o180)"/><polygon points="1230.4,228.7 1972.7,-280.1 1992.2,-250.5" fill="url(#o181)"/><polygon points="1230.4,228.7 1988.4,-256.5 2006.9,-226.3" fill="url(#o182)"/><polygon points="1230.4,228.7 2003.2,-232.5 2020.8,-201.7" fill="url(#o183)"/><polygon points="1230.4,228.7 2017.3,-208.0 2033.9,-176.6" fill="url(#o184)"/><polygon points="1230.4,228.7 2030.7,-183.0 2046.3,-151.2" fill="url(#o185)"/><polygon points="1230.4,228.7 2043.2,-157.7 2057.8,-125.4" fill="url(#o186)"/><polygon points="1230.4,228.7 2054.9,-132.0 2068.5,-99.2" fill="url(#o187)"/><polygon points="1230.4,228.7 2065.9,-105.9 2078.4,-72.7" fill="url(#o188)"/><polygon points="1230.4,228.7 2076.0,-79.5 2087.4,-45.9" fill="url(#o189)"/><polygon points="1230.4,228.7 2085.2,-52.8 2095.7,-18.9" fill="url(#o190)"/><polygon points="1230.4,228.7 2093.6,-25.8 2103.0,8.4" fill="url(#o191)"/><polygon points="1230.4,228.7 2101.2,1.4 2109.5,35.9" fill="url(#o192)"/><polygon points="1230.4,228.7 2107.9,28.9 2115.1,63.6" fill="url(#o193)"/><polygon points="1230.4,228.7 2113.8,56.6 2119.9,91.5" fill="url(#o194)"/><polygon points="1230.4,228.7 2118.7,84.4 2123.7,119.5" fill="url(#o195)"/><polygon points="1230.4,228.7 2122.8,112.4 2126.7,147.6" fill="url(#o196)"/><polygon points="1230.4,228.7 2126.1,140.5 2128.8,175.8" fill="url(#o197)"/><polygon points="1230.4,228.7 2128.4,168.6 2130.1,204.1" fill="url(#o198)"/><polygon points="1230.4,228.7 2129.8,196.9 2130.4,232.3" fill="url(#o199)"/><g clip-path="url(#cTri)"><polygon points="1230.4,228.7 2130.4,225.1 2129.8,260.6" fill="url(#i0)"/><polygon points="1230.4,228.7 2130.1,253.4 2128.4,288.8" fill="url(#i1)"/><polygon points="1230.4,228.7 2128.8,281.7 2126.1,317.0" fill="url(#i2)"/><polygon points="1230.4,228.7 2126.7,309.9 2122.8,345.1" fill="url(#i3)"/><polygon points="1230.4,228.7 2123.7,338.0 2118.7,373.1" fill="url(#i4)"/><polygon points="1230.4,228.7 2119.9,366.0 2113.8,400.9" fill="url(#i5)"/><polygon points="1230.4,228.7 2115.1,393.9 2107.9,428.6" fill="url(#i6)"/><polygon points="1230.4,228.7 2109.5,421.6 2101.2,456.1" fill="url(#i7)"/><polygon points="1230.4,228.7 2103.0,449.1 2093.6,483.3" fill="url(#i8)"/><polygon points="1230.4,228.7 2095.7,476.4 2085.2,510.3" fill="url(#i9)"/><polygon points="1230.4,228.7 2087.4,503.4 2076.0,537.0" fill="url(#i10)"/><polygon points="1230.4,228.7 2078.4,530.2 2065.9,563.4" fill="url(#i11)"/><polygon points="1230.4,228.7 2068.5,556.7 2054.9,589.5" fill="url(#i12)"/><polygon points="1230.4,228.7 2057.8,582.9 2043.2,615.2" fill="url(#i13)"/><polygon points="1230.4,228.7 2046.3,608.7 2030.7,640.5" fill="url(#i14)"/><polygon points="1230.4,228.7 2033.9,634.1 2017.3,665.5" fill="url(#i15)"/><polygon points="1230.4,228.7 2020.8,659.2 2003.2,690.0" fill="url(#i16)"/><polygon points="1230.4,228.7 2006.9,683.8 1988.4,714.0" fill="url(#i17)"/><polygon points="1230.4,228.7 1992.2,707.9 1972.7,737.6" fill="url(#i18)"/><polygon points="1230.4,228.7 1976.8,731.6 1956.4,760.7" fill="url(#i19)"/><polygon points="1230.4,228.7 1960.6,754.8 1939.3,783.2" fill="url(#i20)"/><polygon points="1230.4,228.7 1943.7,777.5 1921.6,805.2" fill="url(#i21)"/><polygon points="1230.4,228.7 1926.1,799.6 1903.1,826.6" fill="url(#i22)"/><polygon points="1230.4,228.7 1907.9,821.2 1884.0,847.5" fill="url(#i23)"/><polygon points="1230.4,228.7 1888.9,842.2 1864.2,867.7" fill="url(#i24)"/><polygon points="1230.4,228.7 1869.3,862.6 1843.9,887.3" fill="url(#i25)"/><polygon points="1230.4,228.7 1849.1,882.3 1822.9,906.2" fill="url(#i26)"/><polygon points="1230.4,228.7 1828.3,901.5 1801.3,924.5" fill="url(#i27)"/><polygon points="1230.4,228.7 1806.8,919.9 1779.2,942.1" fill="url(#i28)"/><polygon points="1230.4,228.7 1784.8,937.7 1756.5,959.0" fill="url(#i29)"/><polygon points="1230.4,228.7 1762.3,954.7 1733.3,975.1" fill="url(#i30)"/><polygon points="1230.4,228.7 1739.2,971.1 1709.6,990.6" fill="url(#i31)"/><polygon points="1230.4,228.7 1715.7,986.7 1685.4,1005.2" fill="url(#i32)"/><polygon points="1230.4,228.7 1691.6,1001.6 1660.8,1019.1" fill="url(#i33)"/><polygon points="1230.4,228.7 1667.1,1015.7 1635.8,1032.3" fill="url(#i34)"/><polygon points="1230.4,228.7 1642.2,1029.0 1610.3,1044.6" fill="url(#i35)"/><polygon points="1230.4,228.7 1616.8,1041.6 1584.5,1056.1" fill="url(#i36)"/><polygon points="1230.4,228.7 1591.1,1053.3 1558.4,1066.9" fill="url(#i37)"/><polygon points="1230.4,228.7 1565.0,1064.2 1531.9,1076.8" fill="url(#i38)"/><polygon points="1230.4,228.7 1538.6,1074.3 1505.1,1085.8" fill="url(#i39)"/><polygon points="1230.4,228.7 1511.9,1083.6 1478.0,1094.0" fill="url(#i40)"/><polygon points="1230.4,228.7 1484.9,1092.0 1450.7,1101.4" fill="url(#i41)"/><polygon points="1230.4,228.7 1457.7,1099.6 1423.2,1107.8" fill="url(#i42)"/><polygon points="1230.4,228.7 1430.2,1106.3 1395.5,1113.5" fill="url(#i43)"/><polygon points="1230.4,228.7 1402.6,1112.1 1367.6,1118.2" fill="url(#i44)"/><polygon points="1230.4,228.7 1374.7,1117.1 1339.6,1122.1" fill="url(#i45)"/><polygon points="1230.4,228.7 1346.8,1121.2 1311.5,1125.1" fill="url(#i46)"/><polygon points="1230.4,228.7 1318.7,1124.4 1283.3,1127.2" fill="url(#i47)"/><polygon points="1230.4,228.7 1290.5,1126.7 1255.1,1128.4" fill="url(#i48)"/><polygon points="1230.4,228.7 1262.3,1128.2 1226.8,1128.7" fill="url(#i49)"/><polygon points="1230.4,228.7 1234.0,1128.7 1198.5,1128.2" fill="url(#i50)"/><polygon points="1230.4,228.7 1205.7,1128.4 1170.3,1126.7" fill="url(#i51)"/><polygon points="1230.4,228.7 1177.5,1127.2 1142.1,1124.4" fill="url(#i52)"/><polygon points="1230.4,228.7 1149.3,1125.1 1114.0,1121.2" fill="url(#i53)"/><polygon points="1230.4,228.7 1121.2,1122.1 1086.0,1117.1" fill="url(#i54)"/><polygon points="1230.4,228.7 1093.2,1118.2 1058.2,1112.1" fill="url(#i55)"/><polygon points="1230.4,228.7 1065.3,1113.5 1030.6,1106.3" fill="url(#i56)"/><polygon points="1230.4,228.7 1037.6,1107.8 1003.1,1099.6" fill="url(#i57)"/><polygon points="1230.4,228.7 1010.1,1101.4 975.8,1092.0" fill="url(#i58)"/><polygon points="1230.4,228.7 982.8,1094.0 948.9,1083.6" fill="url(#i59)"/><polygon points="1230.4,228.7 955.7,1085.8 922.1,1074.3" fill="url(#i60)"/><polygon points="1230.4,228.7 928.9,1076.8 895.7,1064.2" fill="url(#i61)"/><polygon points="1230.4,228.7 902.4,1066.9 869.7,1053.3" fill="url(#i62)"/><polygon points="1230.4,228.7 876.3,1056.1 843.9,1041.6" fill="url(#i63)"/><polygon points="1230.4,228.7 850.5,1044.6 818.6,1029.0" fill="url(#i64)"/><polygon points="1230.4,228.7 825.0,1032.3 793.7,1015.7" fill="url(#i65)"/><polygon points="1230.4,228.7 800.0,1019.1 769.2,1001.6" fill="url(#i66)"/><polygon points="1230.4,228.7 775.4,1005.2 745.1,986.7" fill="url(#i67)"/><polygon points="1230.4,228.7 751.2,990.6 721.5,971.1" fill="url(#i68)"/><polygon points="1230.4,228.7 727.5,975.1 698.5,954.7" fill="url(#i69)"/><polygon points="1230.4,228.7 704.3,959.0 675.9,937.7" fill="url(#i70)"/><polygon points="1230.4,228.7 681.6,942.1 653.9,919.9" fill="url(#i71)"/><polygon points="1230.4,228.7 659.5,924.5 632.5,901.5" fill="url(#i72)"/><polygon points="1230.4,228.7 637.9,906.2 611.7,882.3" fill="url(#i73)"/><polygon points="1230.4,228.7 616.9,887.3 591.5,862.6" fill="url(#i74)"/><polygon points="1230.4,228.7 596.5,867.7 571.9,842.2" fill="url(#i75)"/><polygon points="1230.4,228.7 576.8,847.5 552.9,821.2" fill="url(#i76)"/><polygon points="1230.4,228.7 557.7,826.6 534.6,799.6" fill="url(#i77)"/><polygon points="1230.4,228.7 539.2,805.2 517.1,777.5" fill="url(#i78)"/><polygon points="1230.4,228.7 521.5,783.2 500.2,754.8" fill="url(#i79)"/><polygon points="1230.4,228.7 504.4,760.7 484.0,731.6" fill="url(#i80)"/><polygon points="1230.4,228.7 488.0,737.6 468.6,707.9" fill="url(#i81)"/><polygon points="1230.4,228.7 472.4,714.0 453.9,683.8" fill="url(#i82)"/><polygon points="1230.4,228.7 457.6,690.0 440.0,659.2" fill="url(#i83)"/><polygon points="1230.4,228.7 443.5,665.5 426.9,634.1" fill="url(#i84)"/><polygon points="1230.4,228.7 430.1,640.5 414.5,608.7" fill="url(#i85)"/><polygon points="1230.4,228.7 417.6,615.2 403.0,582.9" fill="url(#i86)"/><polygon points="1230.4,228.7 405.8,589.5 392.3,556.7" fill="url(#i87)"/><polygon points="1230.4,228.7 394.9,563.4 382.4,530.2" fill="url(#i88)"/><polygon points="1230.4,228.7 384.8,537.0 373.3,503.4" fill="url(#i89)"/><polygon points="1230.4,228.7 375.6,510.3 365.1,476.4" fill="url(#i90)"/><polygon points="1230.4,228.7 367.1,483.3 357.8,449.1" fill="url(#i91)"/><polygon points="1230.4,228.7 359.6,456.1 351.3,421.6" fill="url(#i92)"/><polygon points="1230.4,228.7 352.9,428.6 345.7,393.9" fill="url(#i93)"/><polygon points="1230.4,228.7 347.0,400.9 340.9,366.0" fill="url(#i94)"/><polygon points="1230.4,228.7 342.0,373.1 337.0,338.0" fill="url(#i95)"/><polygon points="1230.4,228.7 337.9,345.1 334.1,309.9" fill="url(#i96)"/><polygon points="1230.4,228.7 334.7,317.0 331.9,281.7" fill="url(#i97)"/><polygon points="1230.4,228.7 332.4,288.8 330.7,253.4" fill="url(#i98)"/><polygon points="1230.4,228.7 331.0,260.6 330.4,225.1" fill="url(#i99)"/><polygon points="1230.4,228.7 330.4,232.3 331.0,196.9" fill="url(#i100)"/><polygon points="1230.4,228.7 330.7,204.1 332.4,168.6" fill="url(#i101)"/><polygon points="1230.4,228.7 331.9,175.8 334.7,140.5" fill="url(#i102)"/><polygon points="1230.4,228.7 334.1,147.6 337.9,112.4" fill="url(#i103)"/><polygon points="1230.4,228.7 337.0,119.5 342.0,84.4" fill="url(#i104)"/><polygon points="1230.4,228.7 340.9,91.5 347.0,56.6" fill="url(#i105)"/><polygon points="1230.4,228.7 345.7,63.6 352.9,28.9" fill="url(#i106)"/><polygon points="1230.4,228.7 351.3,35.9 359.6,1.4" fill="url(#i107)"/><polygon points="1230.4,228.7 357.8,8.4 367.1,-25.8" fill="url(#i108)"/><polygon points="1230.4,228.7 365.1,-18.9 375.6,-52.8" fill="url(#i109)"/><polygon points="1230.4,228.7 373.3,-45.9 384.8,-79.5" fill="url(#i110)"/><polygon points="1230.4,228.7 382.4,-72.7 394.9,-105.9" fill="url(#i111)"/><polygon points="1230.4,228.7 392.3,-99.2 405.8,-132.0" fill="url(#i112)"/><polygon points="1230.4,228.7 403.0,-125.4 417.6,-157.7" fill="url(#i113)"/><polygon points="1230.4,228.7 414.5,-151.2 430.1,-183.0" fill="url(#i114)"/><polygon points="1230.4,228.7 426.9,-176.6 443.5,-208.0" fill="url(#i115)"/><polygon points="1230.4,228.7 440.0,-201.7 457.6,-232.5" fill="url(#i116)"/><polygon points="1230.4,228.7 453.9,-226.3 472.4,-256.5" fill="url(#i117)"/><polygon points="1230.4,228.7 468.6,-250.5 488.0,-280.1" fill="url(#i118)"/><polygon points="1230.4,228.7 484.0,-274.1 504.4,-303.2" fill="url(#i119)"/><polygon points="1230.4,228.7 500.2,-297.3 521.5,-325.7" fill="url(#i120)"/><polygon points="1230.4,228.7 517.1,-320.0 539.2,-347.7" fill="url(#i121)"/><polygon points="1230.4,228.7 534.6,-342.2 557.7,-369.1" fill="url(#i122)"/><polygon points="1230.4,228.7 552.9,-363.7 576.8,-390.0" fill="url(#i123)"/><polygon points="1230.4,228.7 571.9,-384.7 596.5,-410.2" fill="url(#i124)"/><polygon points="1230.4,228.7 591.5,-405.1 616.9,-429.8" fill="url(#i125)"/><polygon points="1230.4,228.7 611.7,-424.9 637.9,-448.7" fill="url(#i126)"/><polygon points="1230.4,228.7 632.5,-444.0 659.5,-467.0" fill="url(#i127)"/><polygon points="1230.4,228.7 653.9,-462.4 681.6,-484.6" fill="url(#i128)"/><polygon points="1230.4,228.7 675.9,-480.2 704.3,-501.5" fill="url(#i129)"/><polygon points="1230.4,228.7 698.5,-497.2 727.5,-517.6" fill="url(#i130)"/><polygon points="1230.4,228.7 721.5,-513.6 751.2,-533.1" fill="url(#i131)"/><polygon points="1230.4,228.7 745.1,-529.2 775.4,-547.7" fill="url(#i132)"/><polygon points="1230.4,228.7 769.2,-544.1 800.0,-561.7" fill="url(#i133)"/><polygon points="1230.4,228.7 793.7,-558.2 825.0,-574.8" fill="url(#i134)"/><polygon points="1230.4,228.7 818.6,-571.5 850.5,-587.1" fill="url(#i135)"/><polygon points="1230.4,228.7 843.9,-584.1 876.3,-598.7" fill="url(#i136)"/><polygon points="1230.4,228.7 869.7,-595.8 902.4,-609.4" fill="url(#i137)"/><polygon points="1230.4,228.7 895.7,-606.7 928.9,-619.3" fill="url(#i138)"/><polygon points="1230.4,228.7 922.1,-616.8 955.7,-628.3" fill="url(#i139)"/><polygon points="1230.4,228.7 948.9,-626.1 982.8,-636.5" fill="url(#i140)"/><polygon points="1230.4,228.7 975.8,-634.5 1010.1,-643.9" fill="url(#i141)"/><polygon points="1230.4,228.7 1003.1,-642.1 1037.6,-650.4" fill="url(#i142)"/><polygon points="1230.4,228.7 1030.6,-648.8 1065.3,-656.0" fill="url(#i143)"/><polygon points="1230.4,228.7 1058.2,-654.6 1093.2,-660.7" fill="url(#i144)"/><polygon points="1230.4,228.7 1086.0,-659.6 1121.2,-664.6" fill="url(#i145)"/><polygon points="1230.4,228.7 1114.0,-663.7 1149.3,-667.6" fill="url(#i146)"/><polygon points="1230.4,228.7 1142.1,-666.9 1177.5,-669.7" fill="url(#i147)"/><polygon points="1230.4,228.7 1170.3,-669.2 1205.7,-670.9" fill="url(#i148)"/><polygon points="1230.4,228.7 1198.5,-670.7 1234.0,-671.2" fill="url(#i149)"/><polygon points="1230.4,228.7 1226.8,-671.2 1262.3,-670.7" fill="url(#i150)"/><polygon points="1230.4,228.7 1255.1,-670.9 1290.5,-669.2" fill="url(#i151)"/><polygon points="1230.4,228.7 1283.3,-669.7 1318.7,-666.9" fill="url(#i152)"/><polygon points="1230.4,228.7 1311.5,-667.6 1346.8,-663.7" fill="url(#i153)"/><polygon points="1230.4,228.7 1339.6,-664.6 1374.7,-659.6" fill="url(#i154)"/><polygon points="1230.4,228.7 1367.6,-660.7 1402.6,-654.6" fill="url(#i155)"/><polygon points="1230.4,228.7 1395.5,-656.0 1430.2,-648.8" fill="url(#i156)"/><polygon points="1230.4,228.7 1423.2,-650.4 1457.7,-642.1" fill="url(#i157)"/><polygon points="1230.4,228.7 1450.7,-643.9 1484.9,-634.5" fill="url(#i158)"/><polygon points="1230.4,228.7 1478.0,-636.5 1511.9,-626.1" fill="url(#i159)"/><polygon points="1230.4,228.7 1505.1,-628.3 1538.6,-616.8" fill="url(#i160)"/><polygon points="1230.4,228.7 1531.9,-619.3 1565.0,-606.7" fill="url(#i161)"/><polygon points="1230.4,228.7 1558.4,-609.4 1591.1,-595.8" fill="url(#i162)"/><polygon points="1230.4,228.7 1584.5,-598.7 1616.8,-584.1" fill="url(#i163)"/><polygon points="1230.4,228.7 1610.3,-587.1 1642.2,-571.5" fill="url(#i164)"/><polygon points="1230.4,228.7 1635.8,-574.8 1667.1,-558.2" fill="url(#i165)"/><polygon points="1230.4,228.7 1660.8,-561.7 1691.6,-544.1" fill="url(#i166)"/><polygon points="1230.4,228.7 1685.4,-547.7 1715.7,-529.2" fill="url(#i167)"/><polygon points="1230.4,228.7 1709.6,-533.1 1739.2,-513.6" fill="url(#i168)"/><polygon points="1230.4,228.7 1733.3,-517.6 1762.3,-497.2" fill="url(#i169)"/><polygon points="1230.4,228.7 1756.5,-501.5 1784.8,-480.2" fill="url(#i170)"/><polygon points="1230.4,228.7 1779.2,-484.6 1806.8,-462.4" fill="url(#i171)"/><polygon points="1230.4,228.7 1801.3,-467.0 1828.3,-444.0" fill="url(#i172)"/><polygon points="1230.4,228.7 1822.9,-448.7 1849.1,-424.9" fill="url(#i173)"/><polygon points="1230.4,228.7 1843.9,-429.8 1869.3,-405.1" fill="url(#i174)"/><polygon points="1230.4,228.7 1864.2,-410.2 1888.9,-384.7" fill="url(#i175)"/><polygon points="1230.4,228.7 1884.0,-390.0 1907.9,-363.7" fill="url(#i176)"/><polygon points="1230.4,228.7 1903.1,-369.1 1926.1,-342.2" fill="url(#i177)"/><polygon points="1230.4,228.7 1921.6,-347.7 1943.7,-320.0" fill="url(#i178)"/><polygon points="1230.4,228.7 1939.3,-325.7 1960.6,-297.3" fill="url(#i179)"/><polygon points="1230.4,228.7 1956.4,-303.2 1976.8,-274.1" fill="url(#i180)"/><polygon points="1230.4,228.7 1972.7,-280.1 1992.2,-250.5" fill="url(#i181)"/><polygon points="1230.4,228.7 1988.4,-256.5 2006.9,-226.3" fill="url(#i182)"/><polygon points="1230.4,228.7 2003.2,-232.5 2020.8,-201.7" fill="url(#i183)"/><polygon points="1230.4,228.7 2017.3,-208.0 2033.9,-176.6" fill="url(#i184)"/><polygon points="1230.4,228.7 2030.7,-183.0 2046.3,-151.2" fill="url(#i185)"/><polygon points="1230.4,228.7 2043.2,-157.7 2057.8,-125.4" fill="url(#i186)"/><polygon points="1230.4,228.7 2054.9,-132.0 2068.5,-99.2" fill="url(#i187)"/><polygon points="1230.4,228.7 2065.9,-105.9 2078.4,-72.7" fill="url(#i188)"/><polygon points="1230.4,228.7 2076.0,-79.5 2087.4,-45.9" fill="url(#i189)"/><polygon points="1230.4,228.7 2085.2,-52.8 2095.7,-18.9" fill="url(#i190)"/><polygon points="1230.4,228.7 2093.6,-25.8 2103.0,8.4" fill="url(#i191)"/><polygon points="1230.4,228.7 2101.2,1.4 2109.5,35.9" fill="url(#i192)"/><polygon points="1230.4,228.7 2107.9,28.9 2115.1,63.6" fill="url(#i193)"/><polygon points="1230.4,228.7 2113.8,56.6 2119.9,91.5" fill="url(#i194)"/><polygon points="1230.4,228.7 2118.7,84.4 2123.7,119.5" fill="url(#i195)"/><polygon points="1230.4,228.7 2122.8,112.4 2126.7,147.6" fill="url(#i196)"/><polygon points="1230.4,228.7 2126.1,140.5 2128.8,175.8" fill="url(#i197)"/><polygon points="1230.4,228.7 2128.4,168.6 2130.1,204.1" fill="url(#i198)"/><polygon points="1230.4,228.7 2129.8,196.9 2130.4,232.3" fill="url(#i199)"/></g></g></g>
<line x1="1013.5" y1="612.3" x2="1020.0" y2="612.3" stroke="#e0e0e0" stroke-width="1.50" />
<text x="1013.0" y="617.8" font-size="13.81" fill="#d8d8d8" stroke="#d8d8d8" stroke-width="0.18" text-anchor="end" textLength="7.9" lengthAdjust="spacingAndGlyphs" >0</text>
<line x1="1019.9" y1="612.3" x2="1019.9" y2="618.5" stroke="#e0e0e0" stroke-width="1.50" />
<text x="1019.9" y="634.0" font-size="13.81" fill="#d8d8d8" stroke="#d8d8d8" stroke-width="0.18" text-anchor="middle" textLength="7.9" lengthAdjust="spacingAndGlyphs" >0</text>
<line x1="1013.5" y1="571.3" x2="1020.0" y2="571.3" stroke="#e0e0e0" stroke-width="1.50" />
<text x="1013.0" y="576.8" font-size="13.81" fill="#d8d8d8" stroke="#d8d8d8" stroke-width="0.18" text-anchor="end" textLength="27.7" lengthAdjust="spacingAndGlyphs" >0,05</text>
<line x1="1073.1" y1="612.3" x2="1073.1" y2="618.5" stroke="#e0e0e0" stroke-width="1.50" />
<text x="1073.1" y="634.0" font-size="13.81" fill="#d8d8d8" stroke="#d8d8d8" stroke-width="0.18" text-anchor="middle" textLength="27.7" lengthAdjust="spacingAndGlyphs" >0,05</text>
<line x1="1013.5" y1="530.4" x2="1020.0" y2="530.4" stroke="#e0e0e0" stroke-width="1.50" />
<text x="1013.0" y="535.9" font-size="13.81" fill="#d8d8d8" stroke="#d8d8d8" stroke-width="0.18" text-anchor="end" textLength="19.8" lengthAdjust="spacingAndGlyphs" >0,1</text>
<line x1="1126.3" y1="612.3" x2="1126.3" y2="618.5" stroke="#e0e0e0" stroke-width="1.50" />
<text x="1126.3" y="634.0" font-size="13.81" fill="#d8d8d8" stroke="#d8d8d8" stroke-width="0.18" text-anchor="middle" textLength="19.8" lengthAdjust="spacingAndGlyphs" >0,1</text>
<line x1="1013.5" y1="489.4" x2="1020.0" y2="489.4" stroke="#e0e0e0" stroke-width="1.50" />
<text x="1013.0" y="494.9" font-size="13.81" fill="#d8d8d8" stroke="#d8d8d8" stroke-width="0.18" text-anchor="end" textLength="27.7" lengthAdjust="spacingAndGlyphs" >0,15</text>
<line x1="1179.5" y1="612.3" x2="1179.5" y2="618.5" stroke="#e0e0e0" stroke-width="1.50" />
<text x="1179.5" y="634.0" font-size="13.81" fill="#d8d8d8" stroke="#d8d8d8" stroke-width="0.18" text-anchor="middle" textLength="27.7" lengthAdjust="spacingAndGlyphs" >0,15</text>
<line x1="1013.5" y1="448.5" x2="1020.0" y2="448.5" stroke="#e0e0e0" stroke-width="1.50" />
<text x="1013.0" y="454.0" font-size="13.81" fill="#d8d8d8" stroke="#d8d8d8" stroke-width="0.18" text-anchor="end" textLength="19.8" lengthAdjust="spacingAndGlyphs" >0,2</text>
<line x1="1232.7" y1="612.3" x2="1232.7" y2="618.5" stroke="#e0e0e0" stroke-width="1.50" />
<text x="1232.7" y="634.0" font-size="13.81" fill="#d8d8d8" stroke="#d8d8d8" stroke-width="0.18" text-anchor="middle" textLength="19.8" lengthAdjust="spacingAndGlyphs" >0,2</text>
<line x1="1013.5" y1="407.5" x2="1020.0" y2="407.5" stroke="#e0e0e0" stroke-width="1.50" />
<text x="1013.0" y="413.0" font-size="13.81" fill="#d8d8d8" stroke="#d8d8d8" stroke-width="0.18" text-anchor="end" textLength="27.7" lengthAdjust="spacingAndGlyphs" >0,25</text>
<line x1="1285.9" y1="612.3" x2="1285.9" y2="618.5" stroke="#e0e0e0" stroke-width="1.50" />
<text x="1285.9" y="634.0" font-size="13.81" fill="#d8d8d8" stroke="#d8d8d8" stroke-width="0.18" text-anchor="middle" textLength="27.7" lengthAdjust="spacingAndGlyphs" >0,25</text>
<line x1="1013.5" y1="366.6" x2="1020.0" y2="366.6" stroke="#e0e0e0" stroke-width="1.50" />
<text x="1013.0" y="372.1" font-size="13.81" fill="#d8d8d8" stroke="#d8d8d8" stroke-width="0.18" text-anchor="end" textLength="19.8" lengthAdjust="spacingAndGlyphs" >0,3</text>
<line x1="1339.1" y1="612.3" x2="1339.1" y2="618.5" stroke="#e0e0e0" stroke-width="1.50" />
<text x="1339.1" y="634.0" font-size="13.81" fill="#d8d8d8" stroke="#d8d8d8" stroke-width="0.18" text-anchor="middle" textLength="19.8" lengthAdjust="spacingAndGlyphs" >0,3</text>
<line x1="1013.5" y1="325.6" x2="1020.0" y2="325.6" stroke="#e0e0e0" stroke-width="1.50" />
<text x="1013.0" y="331.1" font-size="13.81" fill="#d8d8d8" stroke="#d8d8d8" stroke-width="0.18" text-anchor="end" textLength="27.7" lengthAdjust="spacingAndGlyphs" >0,35</text>
<line x1="1392.3" y1="612.3" x2="1392.3" y2="618.5" stroke="#e0e0e0" stroke-width="1.50" />
<text x="1392.3" y="634.0" font-size="13.81" fill="#d8d8d8" stroke="#d8d8d8" stroke-width="0.18" text-anchor="middle" textLength="27.7" lengthAdjust="spacingAndGlyphs" >0,35</text>
<line x1="1013.5" y1="284.7" x2="1020.0" y2="284.7" stroke="#e0e0e0" stroke-width="1.50" />
<text x="1013.0" y="290.2" font-size="13.81" fill="#d8d8d8" stroke="#d8d8d8" stroke-width="0.18" text-anchor="end" textLength="19.8" lengthAdjust="spacingAndGlyphs" >0,4</text>
<line x1="1445.5" y1="612.3" x2="1445.5" y2="618.5" stroke="#e0e0e0" stroke-width="1.50" />
<text x="1445.5" y="634.0" font-size="13.81" fill="#d8d8d8" stroke="#d8d8d8" stroke-width="0.18" text-anchor="middle" textLength="19.8" lengthAdjust="spacingAndGlyphs" >0,4</text>
<line x1="1013.5" y1="243.7" x2="1020.0" y2="243.7" stroke="#e0e0e0" stroke-width="1.50" />
<text x="1013.0" y="249.2" font-size="13.81" fill="#d8d8d8" stroke="#d8d8d8" stroke-width="0.18" text-anchor="end" textLength="27.7" lengthAdjust="spacingAndGlyphs" >0,45</text>
<line x1="1498.7" y1="612.3" x2="1498.7" y2="618.5" stroke="#e0e0e0" stroke-width="1.50" />
<text x="1498.7" y="634.0" font-size="13.81" fill="#d8d8d8" stroke="#d8d8d8" stroke-width="0.18" text-anchor="middle" textLength="27.7" lengthAdjust="spacingAndGlyphs" >0,45</text>
<line x1="1013.5" y1="202.8" x2="1020.0" y2="202.8" stroke="#e0e0e0" stroke-width="1.50" />
<text x="1013.0" y="208.3" font-size="13.81" fill="#d8d8d8" stroke="#d8d8d8" stroke-width="0.18" text-anchor="end" textLength="19.8" lengthAdjust="spacingAndGlyphs" >0,5</text>
<line x1="1551.9" y1="612.3" x2="1551.9" y2="618.5" stroke="#e0e0e0" stroke-width="1.50" />
<text x="1551.9" y="634.0" font-size="13.81" fill="#d8d8d8" stroke="#d8d8d8" stroke-width="0.18" text-anchor="middle" textLength="19.8" lengthAdjust="spacingAndGlyphs" >0,5</text>
<line x1="1013.5" y1="161.8" x2="1020.0" y2="161.8" stroke="#e0e0e0" stroke-width="1.50" />
<text x="1013.0" y="167.3" font-size="13.81" fill="#d8d8d8" stroke="#d8d8d8" stroke-width="0.18" text-anchor="end" textLength="27.7" lengthAdjust="spacingAndGlyphs" >0,55</text>
<line x1="1605.1" y1="612.3" x2="1605.1" y2="618.5" stroke="#e0e0e0" stroke-width="1.50" />
<text x="1605.1" y="634.0" font-size="13.81" fill="#d8d8d8" stroke="#d8d8d8" stroke-width="0.18" text-anchor="middle" textLength="27.7" lengthAdjust="spacingAndGlyphs" >0,55</text>
<rect x="1493.2" y="177.8" width="12.5" height="12.5" fill="none" stroke="#f0f0f0" stroke-width="2"/>
<rect x="1146.7" y="145.4" width="12.5" height="12.5" fill="none" stroke="#f0f0f0" stroke-width="2"/>
<rect x="1200.3" y="476.7" width="12.5" height="12.5" fill="none" stroke="#f0f0f0" stroke-width="2"/>
<rect x="1160.8" y="233.0" width="12.5" height="12.5" fill="none" stroke="#f0f0f0" stroke-width="2"/>
<rect x="1338.2" y="336.0" width="12.5" height="12.5" fill="none" stroke="#f0f0f0" stroke-width="2"/>
<rect x="1230.6" y="153.2" width="12.5" height="12.5" fill="none" stroke="#f0f0f0" stroke-width="2"/>
<rect x="1224.1" y="222.5" width="12.5" height="12.5" fill="#eef0f8" stroke="#000" stroke-width="2.2"/>
<circle cx="1503.5" cy="180.7" r="4.3" fill="#b01010" stroke="#000" stroke-width="1.3"/>
<circle cx="1143.4" cy="142.2" r="4.3" fill="#10a010" stroke="#000" stroke-width="1.3"/>
<circle cx="1202.1" cy="462.9" r="4.3" fill="#1010c0" stroke="#000" stroke-width="1.3"/>
<circle cx="1158.4" cy="230.4" r="4.3" fill="#10a0a0" stroke="#000" stroke-width="1.3"/>
<circle cx="1339.8" cy="337.3" r="4.3" fill="#a010a0" stroke="#000" stroke-width="1.3"/>
<circle cx="1234.8" cy="151.6" r="4.3" fill="#b0b010" stroke="#000" stroke-width="1.3"/>
<circle cx="1225.4" cy="221.5" r="4.3" fill="#ffffff" stroke="#000" stroke-width="1.3"/>
<rect x="1404.0" y="580.5" width="252.0" height="27.5" fill="#2e2e2e" />
<text x="1404.7" y="601.3" font-size="19.77" fill="#f4f4f4" stroke="#f4f4f4" stroke-width="0.30" textLength="155.5" lengthAdjust="spacingAndGlyphs" >Gamut Coverage:</text>
<text x="1571.9" y="601.3" font-size="19.77" fill="#f4f4f4" stroke="#f4f4f4" stroke-width="0.30" textLength="53.7" lengthAdjust="spacingAndGlyphs" >98,1%</text>
<text x="16.1" y="713.2" font-size="29.07" fill="#f0f0f0" stroke="#f0f0f0" stroke-width="0.30" textLength="218.5" lengthAdjust="spacingAndGlyphs" >Current Reading</text>
<text x="16.1" y="784.2" font-size="26.74" fill="#f0f0f0" stroke="#f0f0f0" stroke-width="0.30" textLength="102.7" lengthAdjust="spacingAndGlyphs" >x: 0,3139</text>
<text x="173.2" y="784.2" font-size="26.74" fill="#f0f0f0" stroke="#f0f0f0" stroke-width="0.30" textLength="102.0" lengthAdjust="spacingAndGlyphs" >y: 0,3431</text>
<text x="16.1" y="825.0" font-size="26.74" fill="#f0f0f0" stroke="#f0f0f0" stroke-width="0.30" textLength="110.4" lengthAdjust="spacingAndGlyphs" >fL: 151,04</text>
<text x="16.1" y="864.6" font-size="26.74" fill="#f0f0f0" stroke="#f0f0f0" stroke-width="0.30" textLength="159.1" lengthAdjust="spacingAndGlyphs" >cd/m²: 517,51</text>
<text x="468.6" y="681.4" font-size="13.37" fill="#d4d4d4" stroke="#d4d4d4" stroke-width="0.18" text-anchor="middle" textLength="82.4" lengthAdjust="spacingAndGlyphs" >RGB Balance</text>
<rect x="358.4" y="686.4" width="249.9" height="180.2" fill="#232323" stroke="#8c8c8c" stroke-width="1.5"/>
<line x1="358.4" y1="705.6" x2="608.3" y2="705.6" stroke="#8c8c8c" stroke-width="1.50" />
<line x1="353.0" y1="705.6" x2="358.4" y2="705.6" stroke="#e0e0e0" stroke-width="1.50" />
<text x="352.5" y="710.6" font-size="13.37" fill="#d8d8d8" stroke="#d8d8d8" stroke-width="0.18" text-anchor="end" textLength="24.1" lengthAdjust="spacingAndGlyphs" >104</text>
<line x1="358.4" y1="742.4" x2="608.3" y2="742.4" stroke="#8c8c8c" stroke-width="1.50" />
<line x1="353.0" y1="742.4" x2="358.4" y2="742.4" stroke="#e0e0e0" stroke-width="1.50" />
<text x="352.5" y="747.4" font-size="13.37" fill="#d8d8d8" stroke="#d8d8d8" stroke-width="0.18" text-anchor="end" textLength="24.1" lengthAdjust="spacingAndGlyphs" >102</text>
<line x1="358.4" y1="778.0" x2="608.3" y2="778.0" stroke="#8c8c8c" stroke-width="1.50" />
<line x1="353.0" y1="778.0" x2="358.4" y2="778.0" stroke="#e0e0e0" stroke-width="1.50" />
<text x="352.5" y="783.0" font-size="13.37" fill="#d8d8d8" stroke="#d8d8d8" stroke-width="0.18" text-anchor="end" textLength="24.1" lengthAdjust="spacingAndGlyphs" >100</text>
<line x1="358.4" y1="814.0" x2="608.3" y2="814.0" stroke="#8c8c8c" stroke-width="1.50" />
<line x1="353.0" y1="814.0" x2="358.4" y2="814.0" stroke="#e0e0e0" stroke-width="1.50" />
<text x="352.5" y="819.0" font-size="13.37" fill="#d8d8d8" stroke="#d8d8d8" stroke-width="0.18" text-anchor="end" textLength="16.1" lengthAdjust="spacingAndGlyphs" >98</text>
<line x1="358.4" y1="849.7" x2="608.3" y2="849.7" stroke="#8c8c8c" stroke-width="1.50" />
<line x1="353.0" y1="849.7" x2="358.4" y2="849.7" stroke="#e0e0e0" stroke-width="1.50" />
<text x="352.5" y="854.7" font-size="13.37" fill="#d8d8d8" stroke="#d8d8d8" stroke-width="0.18" text-anchor="end" textLength="16.1" lengthAdjust="spacingAndGlyphs" >96</text>
<line x1="358.4" y1="866.6" x2="358.4" y2="872.0" stroke="#e0e0e0" stroke-width="1.50" />
<line x1="608.3" y1="866.6" x2="608.3" y2="872.0" stroke="#e0e0e0" stroke-width="1.50" />
<rect x="383.3" y="828.2" width="65.1" height="38.4" fill="url(#g26)" stroke="#000" stroke-width="2"/>
<rect x="449.2" y="755.8" width="65.6" height="110.8" fill="url(#g27)" stroke="#000" stroke-width="2"/>
<rect x="516.7" y="847.4" width="65.1" height="19.2" fill="#5858ff" stroke="#000" stroke-width="2"/>
<line x1="358.4" y1="866.6" x2="608.3" y2="866.6" stroke="#8c8c8c" stroke-width="1.50" />
<text x="483.7" y="883.8" font-size="14.24" fill="#d8d8d8" stroke="#d8d8d8" stroke-width="0.18" text-anchor="middle" textLength="38.4" lengthAdjust="spacingAndGlyphs" >100W</text>
<text x="808.8" y="673.1" font-size="14.53" fill="#d4d4d4" stroke="#d4d4d4" stroke-width="0.18" text-anchor="middle" textLength="75.5" lengthAdjust="spacingAndGlyphs" >CIE 1931 xy</text>
<polygon points="638.2,678 980.1,678 980.1,855.6 638.2,698.4" fill="url(#g28)"/>
<polygon points="638.2,698.4 980.1,855.6 980.1,876.5 638.2,876.5" fill="url(#g29)"/>
<rect x="638.2" y="678.0" width="341.9" height="198.5" fill="none" stroke="#a0a0a0" stroke-width="1.5"/>
<circle cx="822.7" cy="710.8" r="4.3" fill="#c0c0c0" stroke="#000" stroke-width="1"/>
<circle cx="815.2" cy="720.5" r="4.1" fill="#ffffff" stroke="#000" stroke-width="1"/>
<rect x="800.8" y="769.1" width="14.0" height="14.0" fill="none" stroke="#000" stroke-width="2.5"/>
<rect x="996.0" y="662.0" width="653.0" height="1.2" fill="#111111" />
<rect x="996.0" y="662.0" width="1.6" height="224.4" fill="#111111" />
<rect x="1647.4" y="662.0" width="1.6" height="224.4" fill="#111111" />
<rect x="997.6" y="663.0" width="633.2" height="17.0" fill="#2e2e2e" />
<rect x="997.6" y="680.0" width="633.2" height="17.0" fill="#161616" />
<rect x="1630.8" y="663.0" width="16.6" height="34.0" fill="#333333" />
<rect x="1630.8" y="866.0" width="16.6" height="20.4" fill="#333333" />
<text x="1128.4" y="686.6" font-size="17.44" fill="#f0f0f0" stroke="#f0f0f0" stroke-width="0.30" text-anchor="middle" textLength="38.3" lengthAdjust="spacingAndGlyphs" >White</text>
<text x="1206.3" y="686.6" font-size="17.44" fill="#f0f0f0" stroke="#f0f0f0" stroke-width="0.30" text-anchor="middle" textLength="27.5" lengthAdjust="spacingAndGlyphs" >Red</text>
<text x="1284.2" y="686.6" font-size="17.44" fill="#f0f0f0" stroke="#f0f0f0" stroke-width="0.30" text-anchor="middle" textLength="41.7" lengthAdjust="spacingAndGlyphs" >Green</text>
<text x="1362.1" y="686.6" font-size="17.44" fill="#f0f0f0" stroke="#f0f0f0" stroke-width="0.30" text-anchor="middle" textLength="30.0" lengthAdjust="spacingAndGlyphs" >Blue</text>
<text x="1440.0" y="686.6" font-size="17.44" fill="#f0f0f0" stroke="#f0f0f0" stroke-width="0.30" text-anchor="middle" textLength="35.0" lengthAdjust="spacingAndGlyphs" >Cyan</text>
<text x="1517.9" y="686.6" font-size="17.44" fill="#f0f0f0" stroke="#f0f0f0" stroke-width="0.30" text-anchor="middle" textLength="58.4" lengthAdjust="spacingAndGlyphs" >Magenta</text>
<text x="1595.8" y="686.6" font-size="17.44" fill="#f0f0f0" stroke="#f0f0f0" stroke-width="0.30" text-anchor="middle" textLength="42.8" lengthAdjust="spacingAndGlyphs" >Yellow</text>
<clipPath id="cTab"><rect x="997.6" y="697" width="633.2" height="170"/></clipPath>
<g clip-path="url(#cTab)">
<rect x="997.6" y="697.0" width="633.2" height="30.9" fill="#3c3c3c" />
<text x="1010.3" y="720.0" font-size="19.91" fill="#f2f2f2" stroke="#f2f2f2" stroke-width="0.30" font-weight="bold" textLength="64.4" lengthAdjust="spacingAndGlyphs" >x: CIE31</text>
<text x="1094.8" y="720.0" font-size="19.91" fill="#f0f0f0" stroke="#f0f0f0" stroke-width="0.30" textLength="51.2" lengthAdjust="spacingAndGlyphs" >0,3147</text>
<text x="1172.6" y="720.0" font-size="19.91" fill="#f0f0f0" stroke="#f0f0f0" stroke-width="0.30" textLength="51.2" lengthAdjust="spacingAndGlyphs" >0,6498</text>
<text x="1250.5" y="720.0" font-size="19.91" fill="#f0f0f0" stroke="#f0f0f0" stroke-width="0.30" textLength="51.2" lengthAdjust="spacingAndGlyphs" >0,2975</text>
<text x="1328.3" y="720.0" font-size="19.91" fill="#f0f0f0" stroke="#f0f0f0" stroke-width="0.30" textLength="51.2" lengthAdjust="spacingAndGlyphs" >0,1525</text>
<text x="1406.2" y="720.0" font-size="19.91" fill="#f0f0f0" stroke="#f0f0f0" stroke-width="0.30" textLength="51.2" lengthAdjust="spacingAndGlyphs" >0,2202</text>
<text x="1484.0" y="720.0" font-size="19.91" fill="#f0f0f0" stroke="#f0f0f0" stroke-width="0.30" textLength="51.2" lengthAdjust="spacingAndGlyphs" >0,3209</text>
<text x="1561.9" y="720.0" font-size="19.91" fill="#f0f0f0" stroke="#f0f0f0" stroke-width="0.30" textLength="51.2" lengthAdjust="spacingAndGlyphs" >0,4316</text>
<rect x="997.6" y="727.9" width="633.2" height="30.9" fill="#7e7e7e" />
<text x="1010.3" y="750.9" font-size="19.91" fill="#f2f2f2" stroke="#f2f2f2" stroke-width="0.30" font-weight="bold" textLength="64.4" lengthAdjust="spacingAndGlyphs" >y: CIE31</text>
<text x="1094.8" y="750.9" font-size="19.91" fill="#f0f0f0" stroke="#f0f0f0" stroke-width="0.30" textLength="51.2" lengthAdjust="spacingAndGlyphs" >0,3456</text>
<text x="1172.6" y="750.9" font-size="19.91" fill="#f0f0f0" stroke="#f0f0f0" stroke-width="0.30" textLength="51.2" lengthAdjust="spacingAndGlyphs" >0,3349</text>
<text x="1250.5" y="750.9" font-size="19.91" fill="#f0f0f0" stroke="#f0f0f0" stroke-width="0.30" textLength="51.2" lengthAdjust="spacingAndGlyphs" >0,6538</text>
<text x="1328.3" y="750.9" font-size="19.91" fill="#f0f0f0" stroke="#f0f0f0" stroke-width="0.30" textLength="51.2" lengthAdjust="spacingAndGlyphs" >0,0722</text>
<text x="1406.2" y="750.9" font-size="19.91" fill="#f0f0f0" stroke="#f0f0f0" stroke-width="0.30" textLength="51.2" lengthAdjust="spacingAndGlyphs" >0,3507</text>
<text x="1484.0" y="750.9" font-size="19.91" fill="#f0f0f0" stroke="#f0f0f0" stroke-width="0.30" textLength="51.2" lengthAdjust="spacingAndGlyphs" >0,1593</text>
<text x="1561.9" y="750.9" font-size="19.91" fill="#f0f0f0" stroke="#f0f0f0" stroke-width="0.30" textLength="51.2" lengthAdjust="spacingAndGlyphs" >0,5342</text>
<rect x="997.6" y="758.7" width="633.2" height="30.9" fill="#3c3c3c" />
<text x="1010.3" y="781.7" font-size="19.91" fill="#f2f2f2" stroke="#f2f2f2" stroke-width="0.30" font-weight="bold" textLength="10.9" lengthAdjust="spacingAndGlyphs" >Y</text>
<text x="1094.8" y="781.7" font-size="19.91" fill="#f0f0f0" stroke="#f0f0f0" stroke-width="0.30" textLength="69.8" lengthAdjust="spacingAndGlyphs" >272,6786</text>
<text x="1172.6" y="781.7" font-size="19.91" fill="#f0f0f0" stroke="#f0f0f0" stroke-width="0.30" textLength="60.5" lengthAdjust="spacingAndGlyphs" >59,8563</text>
<text x="1250.5" y="781.7" font-size="19.91" fill="#f0f0f0" stroke="#f0f0f0" stroke-width="0.30" textLength="69.8" lengthAdjust="spacingAndGlyphs" >197,8781</text>
<text x="1328.3" y="781.7" font-size="19.91" fill="#f0f0f0" stroke="#f0f0f0" stroke-width="0.30" textLength="60.5" lengthAdjust="spacingAndGlyphs" >24,5923</text>
<text x="1406.2" y="781.7" font-size="19.91" fill="#f0f0f0" stroke="#f0f0f0" stroke-width="0.30" textLength="69.8" lengthAdjust="spacingAndGlyphs" >221,9659</text>
<text x="1484.0" y="781.7" font-size="19.91" fill="#f0f0f0" stroke="#f0f0f0" stroke-width="0.30" textLength="60.5" lengthAdjust="spacingAndGlyphs" >78,6022</text>
<text x="1561.9" y="781.7" font-size="19.91" fill="#f0f0f0" stroke="#f0f0f0" stroke-width="0.30" textLength="69.8" lengthAdjust="spacingAndGlyphs" >247,6737</text>
<rect x="997.6" y="789.5" width="633.2" height="30.9" fill="#7e7e7e" />
<text x="1010.3" y="812.5" font-size="19.91" fill="#f2f2f2" stroke="#f2f2f2" stroke-width="0.30" font-weight="bold" textLength="63.8" lengthAdjust="spacingAndGlyphs" >Target Y</text>
<text x="1094.8" y="812.5" font-size="19.91" fill="#f0f0f0" stroke="#f0f0f0" stroke-width="0.30" textLength="69.8" lengthAdjust="spacingAndGlyphs" >269,6212</text>
<text x="1172.6" y="812.5" font-size="19.91" fill="#f0f0f0" stroke="#f0f0f0" stroke-width="0.30" textLength="60.5" lengthAdjust="spacingAndGlyphs" >57,3365</text>
<text x="1250.5" y="812.5" font-size="19.91" fill="#f0f0f0" stroke="#f0f0f0" stroke-width="0.30" textLength="69.8" lengthAdjust="spacingAndGlyphs" >192,8218</text>
<text x="1328.3" y="812.5" font-size="19.91" fill="#f0f0f0" stroke="#f0f0f0" stroke-width="0.30" textLength="60.5" lengthAdjust="spacingAndGlyphs" >19,4628</text>
<text x="1406.2" y="812.5" font-size="19.91" fill="#f0f0f0" stroke="#f0f0f0" stroke-width="0.30" textLength="69.8" lengthAdjust="spacingAndGlyphs" >212,2846</text>
<text x="1484.0" y="812.5" font-size="19.91" fill="#f0f0f0" stroke="#f0f0f0" stroke-width="0.30" textLength="60.5" lengthAdjust="spacingAndGlyphs" >76,7993</text>
<text x="1561.9" y="812.5" font-size="19.91" fill="#f0f0f0" stroke="#f0f0f0" stroke-width="0.30" textLength="69.8" lengthAdjust="spacingAndGlyphs" >250,1584</text>
<rect x="997.6" y="820.4" width="633.2" height="30.9" fill="#3c3c3c" />
<text x="1010.3" y="843.4" font-size="19.91" fill="#f2f2f2" stroke="#f2f2f2" stroke-width="0.30" font-weight="bold" textLength="63.5" lengthAdjust="spacingAndGlyphs" >ΔE 2000</text>
<text x="1094.8" y="843.4" font-size="19.91" fill="#f0f0f0" stroke="#f0f0f0" stroke-width="0.30" textLength="51.2" lengthAdjust="spacingAndGlyphs" >8,2425</text>
<text x="1172.6" y="843.4" font-size="19.91" fill="#f0f0f0" stroke="#f0f0f0" stroke-width="0.30" textLength="51.2" lengthAdjust="spacingAndGlyphs" >3,2066</text>
<text x="1250.5" y="843.4" font-size="19.91" fill="#f0f0f0" stroke="#f0f0f0" stroke-width="0.30" textLength="51.2" lengthAdjust="spacingAndGlyphs" >4,0724</text>
<text x="1328.3" y="843.4" font-size="19.91" fill="#f0f0f0" stroke="#f0f0f0" stroke-width="0.30" textLength="51.2" lengthAdjust="spacingAndGlyphs" >3,4505</text>
<text x="1406.2" y="843.4" font-size="19.91" fill="#f0f0f0" stroke="#f0f0f0" stroke-width="0.30" textLength="51.2" lengthAdjust="spacingAndGlyphs" >5,3963</text>
<text x="1484.0" y="843.4" font-size="19.91" fill="#f0f0f0" stroke="#f0f0f0" stroke-width="0.30" textLength="49.9" lengthAdjust="spacingAndGlyphs" >0,8511</text>
<text x="1561.9" y="843.4" font-size="19.91" fill="#f0f0f0" stroke="#f0f0f0" stroke-width="0.30" textLength="51.2" lengthAdjust="spacingAndGlyphs" >4,0337</text>
<rect x="997.6" y="851.2" width="633.2" height="30.9" fill="#7e7e7e" />
<text x="1010.3" y="874.2" font-size="19.91" fill="#f2f2f2" stroke="#f2f2f2" stroke-width="0.30" font-weight="bold" textLength="52.6" lengthAdjust="spacingAndGlyphs" >ΔE ITP</text>
<text x="1094.8" y="874.2" font-size="19.91" fill="#f0f0f0" stroke="#f0f0f0" stroke-width="0.30" textLength="51.2" lengthAdjust="spacingAndGlyphs" >7,1456</text>
<text x="1172.6" y="874.2" font-size="19.91" fill="#f0f0f0" stroke="#f0f0f0" stroke-width="0.30" textLength="60.5" lengthAdjust="spacingAndGlyphs" >13,2604</text>
<text x="1250.5" y="874.2" font-size="19.91" fill="#f0f0f0" stroke="#f0f0f0" stroke-width="0.30" textLength="60.5" lengthAdjust="spacingAndGlyphs" >26,3102</text>
<text x="1328.3" y="874.2" font-size="19.91" fill="#f0f0f0" stroke="#f0f0f0" stroke-width="0.30" textLength="60.5" lengthAdjust="spacingAndGlyphs" >14,1525</text>
<text x="1406.2" y="874.2" font-size="19.91" fill="#f0f0f0" stroke="#f0f0f0" stroke-width="0.30" textLength="51.2" lengthAdjust="spacingAndGlyphs" >9,3206</text>
<text x="1484.0" y="874.2" font-size="19.91" fill="#f0f0f0" stroke="#f0f0f0" stroke-width="0.30" textLength="51.2" lengthAdjust="spacingAndGlyphs" >6,1225</text>
<text x="1561.9" y="874.2" font-size="19.91" fill="#f0f0f0" stroke="#f0f0f0" stroke-width="0.30" textLength="60.5" lengthAdjust="spacingAndGlyphs" >24,7562</text>
</g>
<rect x="997.6" y="867.0" width="633.2" height="19.4" fill="#4c4c4c" />
<rect x="1631.0" y="697.0" width="16.4" height="169.0" fill="#4c4c4c" />
<rect x="1017" y="869" width="526.7" height="16" rx="8" fill="#404040"/>
<rect x="999.2" y="869.3" width="13.5" height="15.5" rx="3" fill="#5a5a5a" stroke="#626262"/><rect x="1615" y="869.3" width="14" height="15.5" rx="3" fill="#5a5a5a" stroke="#626262"/>
<path d="M1009.5,871.5 L1003.5,877 L1009.5,882.5 Z" fill="#3a3a3a"/><path d="M1619.5,871.5 L1625.5,877 L1619.5,882.5 Z" fill="#3a3a3a"/>
<rect x="1634" y="718.3" width="11.7" height="105.5" rx="5.5" fill="#3e3e3e"/>
<rect x="1632.5" y="698.4" width="13.5" height="16.6" rx="3" fill="#5a5a5a" stroke="#626262"/><rect x="1632.5" y="848.7" width="13.5" height="16.1" rx="3" fill="#5a5a5a" stroke="#626262"/>
<path d="M1634.5,710.5 L1639.3,704.5 L1644,710.5 Z" fill="#3a3a3a"/><path d="M1634.5,853 L1639.3,859 L1644,853 Z" fill="#3a3a3a"/>
<rect x="2.3" y="930.5" width="155.3" height="76" rx="4" fill="url(#g30)"/>
<rect x="8.8" y="936.5" width="142.3" height="45.2" rx="5" fill="#c0c0c0" stroke="rgba(0,0,0,0.28)" stroke-width="1.2"/>
<text x="80.0" y="1000.6" font-size="13.37" fill="#363636" text-anchor="middle" font-weight="bold" textLength="37.6" lengthAdjust="spacingAndGlyphs" >White</text>
<rect x="160.3" y="930.5" width="155.3" height="76" rx="4" fill="url(#g30)"/>
<rect x="166.8" y="936.5" width="142.3" height="45.2" rx="5" fill="#c00000" stroke="rgba(0,0,0,0.28)" stroke-width="1.2"/>
<text x="238.0" y="1000.6" font-size="13.37" fill="#363636" text-anchor="middle" font-weight="bold" textLength="23.8" lengthAdjust="spacingAndGlyphs" >Red</text>
<rect x="318.3" y="930.5" width="155.3" height="76" rx="4" fill="url(#g30)"/>
<rect x="324.8" y="936.5" width="142.3" height="45.2" rx="5" fill="#00c000" stroke="rgba(0,0,0,0.28)" stroke-width="1.2"/>
<text x="396.0" y="1000.6" font-size="13.37" fill="#363636" text-anchor="middle" font-weight="bold" textLength="37.2" lengthAdjust="spacingAndGlyphs" >Green</text>
<rect x="476.3" y="930.5" width="155.3" height="76" rx="4" fill="url(#g30)"/>
<rect x="482.8" y="936.5" width="142.3" height="45.2" rx="5" fill="#0000c0" stroke="rgba(0,0,0,0.28)" stroke-width="1.2"/>
<text x="554.0" y="1000.6" font-size="13.37" fill="#363636" text-anchor="middle" font-weight="bold" textLength="27.6" lengthAdjust="spacingAndGlyphs" >Blue</text>
<rect x="634.3" y="930.5" width="155.3" height="76" rx="4" fill="url(#g30)"/>
<rect x="640.8" y="936.5" width="142.3" height="45.2" rx="5" fill="#00c0c0" stroke="rgba(0,0,0,0.28)" stroke-width="1.2"/>
<text x="711.9" y="1000.6" font-size="13.37" fill="#363636" text-anchor="middle" font-weight="bold" textLength="29.5" lengthAdjust="spacingAndGlyphs" >Cyan</text>
<rect x="792.3" y="930.5" width="155.3" height="76" rx="4" fill="url(#g30)"/>
<rect x="798.8" y="936.5" width="142.3" height="45.2" rx="5" fill="#c000c0" stroke="rgba(0,0,0,0.28)" stroke-width="1.2"/>
<text x="869.9" y="1000.6" font-size="13.37" fill="#363636" text-anchor="middle" font-weight="bold" textLength="54.5" lengthAdjust="spacingAndGlyphs" >Magenta</text>
<rect x="950.3" y="930.5" width="155.3" height="76" rx="4" fill="url(#g30)"/>
<rect x="956.8" y="936.5" width="142.3" height="45.2" rx="5" fill="#c0c000" stroke="rgba(0,0,0,0.28)" stroke-width="1.2"/>
<text x="1028.0" y="1000.6" font-size="13.37" fill="#363636" text-anchor="middle" font-weight="bold" textLength="40.3" lengthAdjust="spacingAndGlyphs" >Yellow</text>
<rect x="1108.3" y="930.5" width="155.3" height="76" rx="4" fill="#292929"/>
<rect x="1114.8" y="936.5" width="142.3" height="45.2" rx="5" fill="#ffffff"/>
<text x="1186.0" y="1000.6" font-size="13.37" fill="#f4f4f4" text-anchor="middle" font-weight="bold" textLength="36.0" lengthAdjust="spacingAndGlyphs" >100W</text>
<rect x="1267.4" y="930.5" width="59.4" height="90" rx="4" fill="url(#g31)"/>
<line x1="1267.4" y1="953.2" x2="1326.8" y2="953.2" stroke="#404040" stroke-width="1.20" />
<circle cx="1297.3" cy="941.5" r="9" fill="url(#g32)"/>
<path d="M1291.5,944.5 L1297.3,938.5 L1303,944.5 Z" fill="#2a2a2a"/>
<rect x="1278" y="962" width="37.5" height="36.5" rx="5" fill="#a4a4a4" stroke="#1a1a1a" stroke-width="2.5"/>
<rect x="1288.8" y="972.0" width="17.0" height="17.0" fill="#050505" />
<rect x="1327.8" y="929.8" width="58.5" height="38.3" fill="url(#g33)"/>
<circle cx="1357.0" cy="949.2" r="12" fill="url(#g35)"/>
<rect x="1386.3" y="929.8" width="56.0" height="38.3" fill="url(#g33)"/>
<line x1="1386.3" y1="929.8" x2="1386.3" y2="968.1" stroke="#1a1a1a" stroke-width="1.20" />
<circle cx="1414.3" cy="949.2" r="12" fill="url(#g36)"/>
<rect x="1442.3" y="929.8" width="56.3" height="38.3" fill="url(#g34)"/>
<line x1="1442.3" y1="929.8" x2="1442.3" y2="968.1" stroke="#1a1a1a" stroke-width="1.20" />
<circle cx="1470.4" cy="949.2" r="12" fill="url(#g37)"/>
<rect x="1498.6" y="929.8" width="57.2" height="38.3" fill="url(#g33)"/>
<line x1="1498.6" y1="929.8" x2="1498.6" y2="968.1" stroke="#1a1a1a" stroke-width="1.20" />
<circle cx="1527.2" cy="949.2" r="12" fill="url(#g38)"/>
<rect x="1555.8" y="929.8" width="55.2" height="38.3" fill="url(#g33)"/>
<line x1="1555.8" y1="929.8" x2="1555.8" y2="968.1" stroke="#1a1a1a" stroke-width="1.20" />
<circle cx="1583.4" cy="949.2" r="12" fill="url(#g39)"/>
<rect x="1352.3" y="944.4" width="10.0" height="9.5" fill="#2a2a2a" />
<path d="M1411,944.2 L1421.3,950.2 L1411,956.3 Z" fill="#2a2a2a"/>
<path d="M1467,944.2 L1464.6,944.2 L1464.6,955.8 L1467,955.8 M1475,944.2 L1477.4,944.2 L1477.4,955.8 L1475,955.8" fill="none" stroke="#262626" stroke-width="2.4"/>
<circle cx="1469.2" cy="949.2" r="1" fill="#262626"/><circle cx="1472.8" cy="949.2" r="1" fill="#262626"/>
<ellipse cx="1522.9" cy="949.2" rx="3.7" ry="2.9" fill="none" stroke="#2a2a2a" stroke-width="2"/><ellipse cx="1530.9" cy="949.2" rx="3.7" ry="2.9" fill="none" stroke="#2a2a2a" stroke-width="2"/>
<path d="M1577.5,947 A6.5,6.5 0 0 1 1589,945.5" fill="none" stroke="#2e2e2e" stroke-width="2.8"/><path d="M1588.5,952 A6.5,6.5 0 0 1 1577,953" fill="none" stroke="#2e2e2e" stroke-width="2.8"/>
<path d="M1585,942 L1591.5,941.5 L1590.5,948.5 Z" fill="#2e2e2e"/><path d="M1581,956 L1574.5,956.5 L1575.5,949.5 Z" fill="#2e2e2e"/>
<rect x="1327.8" y="969" width="170" height="40" fill="url(#g40)"/>
<rect x="1498.6" y="969" width="169.4" height="40" fill="url(#g41)"/>
<line x1="1498.6" y1="969.0" x2="1498.6" y2="1007.0" stroke="#1a1a1a" stroke-width="1.20" />
<line x1="1327.8" y1="968.5" x2="1668.0" y2="968.5" stroke="#1a1a1a" stroke-width="1.20" />
<circle cx="1366.9" cy="987.5" r="12" fill="url(#g42)"/>
<circle cx="1633.2" cy="987.5" r="12" fill="url(#g43)"/>
<path d="M1366.5,982.5 L1360.9,988.5 L1366.5,994.5 M1372.9,982.5 L1367.3,988.5 L1372.9,994.5" fill="none" stroke="#2e2e2e" stroke-width="1.6"/>
<path d="M1627.2,982.5 L1632.8,988.5 L1627.2,994.5 M1633.6,982.5 L1639.2,988.5 L1633.6,994.5" fill="none" stroke="#2e2e2e" stroke-width="1.6"/>
<text x="1401.4" y="998.0" font-size="29.36" fill="#333333" stroke="#333333" stroke-width="0.70" textLength="62.0" lengthAdjust="spacingAndGlyphs" >Back</text>
<text x="1533.8" y="998.0" font-size="29.36" fill="#333333" stroke="#333333" stroke-width="0.70" textLength="65.0" lengthAdjust="spacingAndGlyphs" >Next</text>
<path d="M1638.3,947.8 L1638.3,931.8 M1638.3,947.8 L1624.4,939.8 M1638.3,947.8 L1624.4,955.8 M1638.3,947.8 L1638.3,963.8 M1638.3,947.8 L1652.2,955.8 M1638.3,947.8 L1652.2,939.8" stroke="#000" stroke-opacity="0.45" stroke-width="8" transform="translate(-1.2,1.8)"/>
<path d="M1638.3,947.8 L1638.3,931.8 M1638.3,947.8 L1624.4,939.8 M1638.3,947.8 L1624.4,955.8 M1638.3,947.8 L1638.3,963.8 M1638.3,947.8 L1652.2,955.8 M1638.3,947.8 L1652.2,939.8" stroke="#e81010" stroke-width="7.5"/>
</svg></body></html>
